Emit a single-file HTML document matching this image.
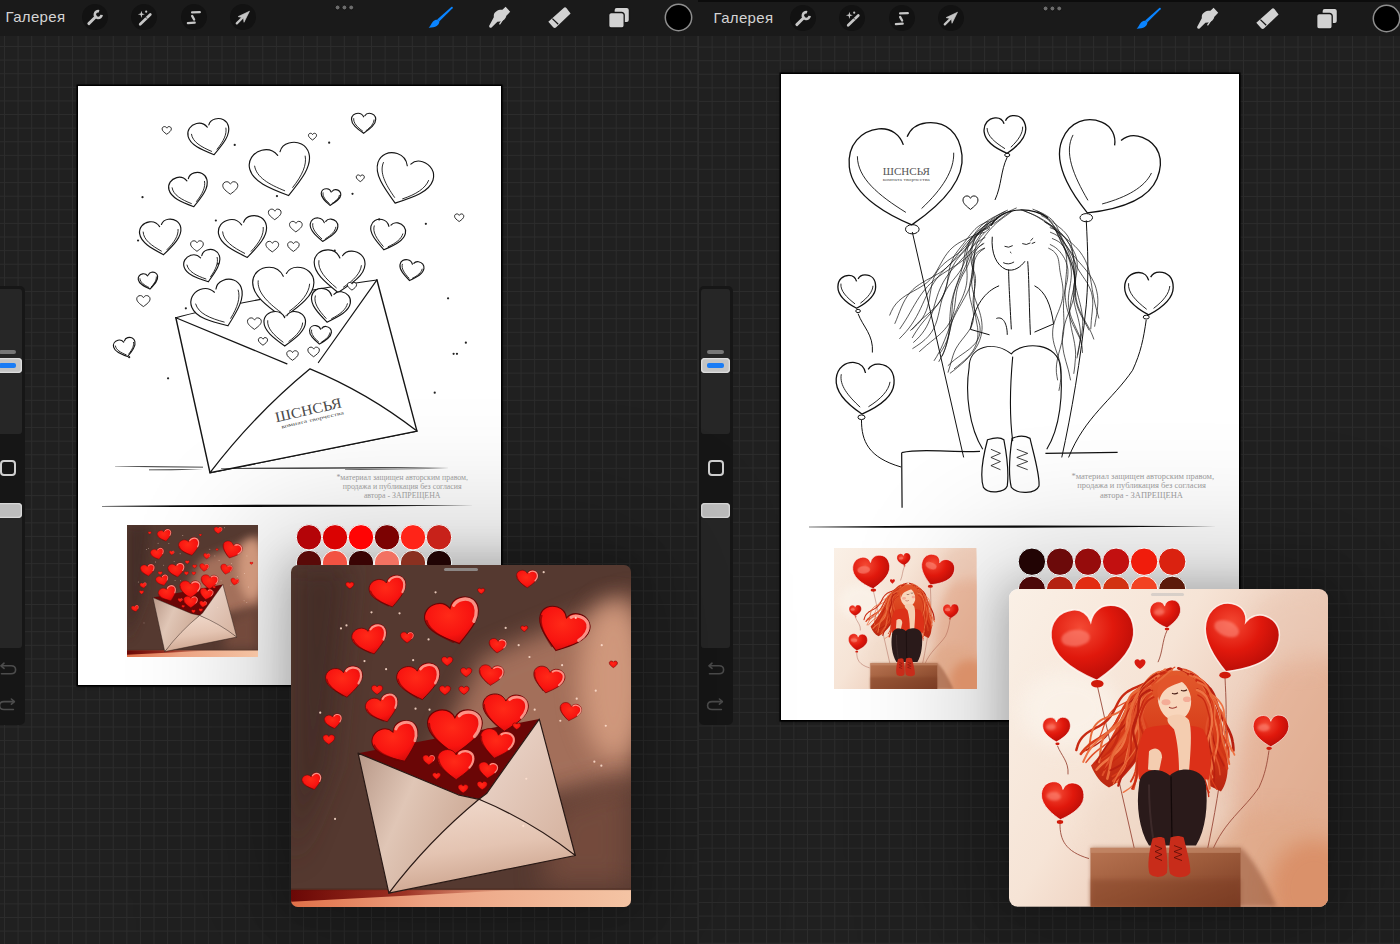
<!DOCTYPE html><html><head><meta charset="utf-8"><style>
*{margin:0;padding:0;box-sizing:border-box}
html,body{width:1400px;height:944px;overflow:hidden;background:#202020;font-family:"Liberation Sans",sans-serif}
.half{position:absolute;top:0;height:944px;overflow:hidden}
.grid{position:absolute;left:0;top:36px;right:0;bottom:0;background-color:#202020;
 background-image:linear-gradient(to right,#2c2c2c 0,#2c2c2c 1px,transparent 1px),linear-gradient(to bottom,#2c2c2c 0,#2c2c2c 1px,transparent 1px);
 background-size:13.62px 13.68px}
.tb{position:absolute;left:0;top:0;right:0;height:36px;background:#1a1a1a}
.gal{position:absolute;top:8px;font-size:15px;color:#d4d4d4;letter-spacing:0.35px}
.tcirc{position:absolute;top:4px;width:26px;height:26px;border-radius:50%;background:#121212}
.sb{position:absolute;top:286px;width:34px;height:439px;background:#161616;border-radius:5px}
.trk{position:absolute;width:29px;background:#262626;border-radius:3px}
.dash{position:absolute;width:17px;height:4px;border-radius:2px;background:#777}
.thumb{position:absolute;width:29px;height:15px;border-radius:4px;background:#c4c4c4;box-shadow:inset 0 0 0 1.3px #dedede}
.thumb .bl{position:absolute;left:6px;top:5px;width:17px;height:4.5px;border-radius:2px;background:#1a7cf5}
.thumb2{position:absolute;width:29px;height:15px;border-radius:4px;background:#bdbdbd;box-shadow:inset 0 0 0 1.3px #d8d8d8}
.sq{position:absolute;width:16px;height:16px;border:2px solid #d0d0d0;border-radius:4px}
.page{position:absolute;background:#fff;box-shadow:0 0 0 1.5px #000,0 0 2.5px 1.5px rgba(0,0,0,0.5)}
.art{position:absolute;border-radius:8px;overflow:hidden}
.copy{position:absolute;font-family:"Liberation Serif",serif;font-size:8.6px;line-height:9.4px;color:#999;text-align:center;white-space:nowrap}
</style></head><body>
<div class="half" style="left:0px;width:698px">
<div class="grid" style="background-position:4px 10px;background-size:13.6px 13.61px"></div>
<div class="tb"></div>
</div>
<div class="half" style="left:698px;width:702px">
<div class="grid" style="background-position:0px 10.600000000000001px;background-size:13.627px 13.59px"></div>
<div class="tb"></div>
</div>
<div class="half" style="left:0px;width:698px">
<div style="position:absolute;left:0;top:0px;width:698px;height:40px"><div class="gal" style="left:5.5px">Галерея</div>
<div class="tcirc" style="left:81.8px"></div>
<div class="tcirc" style="left:130.8px"></div>
<div class="tcirc" style="left:180.8px"></div>
<div class="tcirc" style="left:229.8px"></div><svg width="698" height="40" style="position:absolute;left:0;top:0"><g transform="translate(95,17)" fill="none" stroke="#c6c6c6" stroke-linecap="round"><path d="M-6.2,6.6 L0.8,-0.2" stroke-width="2.9"/><path d="M6.6,-2.2 A3.4,3.4 0 1 1 4.1,-5.7" stroke-width="2.6" stroke-linecap="butt"/></g>
<g transform="translate(144,17)"><path d="M-3.8,7.2 L6.3,-2.45" stroke="#c6c6c6" stroke-width="2.7" stroke-linecap="round"/><path d="M1.6,0.1 L3.0,1.5" stroke="#121212" stroke-width="0.9"/><path d="M-2.6,-6.3 L-1.8,-3.5 L0.9,-2.7 L-1.8,-1.9 L-2.6,0.9 L-3.4,-1.9 L-6.1,-2.7 L-3.4,-3.5 Z" fill="#c6c6c6"/><circle cx="2.2" cy="-5.3" r="1.1" fill="#c6c6c6"/></g>
<g transform="translate(194,17)" stroke="#c6c6c6" stroke-width="2.3" stroke-linecap="round" fill="none"><path d="M-1.9,-4.6 L5.8,-4.8"/><path d="M-1.9,-1.1 L0.1,2.5"/><path d="M-6.1,6.1 L0.7,5.6"/></g>
<g transform="translate(243,17)"><path d="M-6.2,6.4 L-0.8,1.0" stroke="#c6c6c6" stroke-width="2.3" stroke-linecap="round"/><path d="M6.5,-5.8 L-4.9,-0.4 L-1.2,0.6 L0.4,0.9 L1.0,5.3 Z" fill="#c6c6c6" stroke="#c6c6c6" stroke-width="0.6" stroke-linejoin="round"/></g>
<circle cx="337.6" cy="7.5" r="2.4" fill="#6c6c6c" stroke="#0c0c0c" stroke-width="0.8"/>
<circle cx="344.4" cy="7.5" r="2.4" fill="#6c6c6c" stroke="#0c0c0c" stroke-width="0.8"/>
<circle cx="351.2" cy="7.5" r="2.4" fill="#6c6c6c" stroke="#0c0c0c" stroke-width="0.8"/>
<g transform="translate(440,17)" fill="#0a84ff"><path d="M11.6,-10.2 C12.6,-10.6 13.2,-9.6 12.6,-8.8 L-0.8,4.4 L-2.8,2.6 Z"/><path d="M-2.6,2.8 L-0.6,4.6 C-0.8,8 -4,10.8 -11.4,10.8 C-9.6,9.2 -9,6.6 -7,4.4 C-5.6,3 -4,2.6 -2.6,2.8 Z"/></g>
<g transform="translate(499,17)" fill="#d2d2d2"><path d="M-9.8,8.8 C-10.2,10.4 -8.6,11.4 -7.4,10.4 L-1.6,4.8 L1.2,4.6 C4.6,4.2 6.8,1.6 7.4,-1.2 L11.2,-5.2 L6.6,-10.2 L3.4,-7.2 C-0.6,-7.6 -4.4,-5.6 -5.2,-2.0 L-5.2,0.2 Z"/><path d="M3.8,2.4 L0.8,6.8" stroke="#d2d2d2" stroke-width="1.4" stroke-linecap="round"/></g>
<g transform="translate(559,17)"><path d="M4.7,-9.1 C5.6,-9.9 6.6,-9.8 7.4,-9 L11.6,-3.5 L-2.8,10.3 C-3.8,11.2 -5,11.1 -5.8,10.2 L-10.7,4.7 Z" fill="#d2d2d2"/><path d="M-6.6,1.6 L-0.8,7.2" stroke="#151515" stroke-width="1.3"/></g>
<g transform="translate(619,17)"><rect x="-5" y="-9.7" width="15.4" height="15.4" rx="2.6" fill="#d2d2d2" stroke="#151515" stroke-width="1.3"/><rect x="-10.3" y="-4.5" width="15.5" height="15.5" rx="2.6" fill="#d2d2d2" stroke="#151515" stroke-width="1.3"/></g>
<circle cx="678.5" cy="17.5" r="13.2" fill="#000" stroke="#8e8e8e" stroke-width="1.5"/></svg></div>
<div class="sb" style="left:-9px"></div>
<div class="trk" style="left:-7px;top:289px;height:145px"></div>
<div class="dash" style="left:-1px;top:350px"></div>
<div class="thumb" style="left:-7px;top:358px"><div class="bl"></div></div>
<div class="sq" style="left:-0.5px;top:460px"></div>
<div class="trk" style="left:-7px;top:503px;height:145px"></div>
<div class="thumb2" style="left:-7px;top:503px"></div>
<svg width="40" height="60" style="position:absolute;left:-9px;top:655px" fill="none" stroke="#4c4c4c" stroke-width="1.6" stroke-linecap="round" stroke-linejoin="round">
<path d="M10.5,18.8 L20,18.8 C23,18.8 24.6,17 24.6,14.8 C24.6,12.6 23,10.8 20,10.8 L10.5,10.8"/><path d="M13,8.2 L10,10.8 L13,13.4"/>
<path d="M22.4,54.5 L13,54.5 C10,54.5 8.6,52.7 8.6,50.5 C8.6,48.3 10,46.6 13,46.6 L23,46.6"/><path d="M20.4,44 L23.4,46.6 L20.4,49.2"/>
</svg>

</div>
<div class="half" style="left:698px;width:702px">
<div style="position:absolute;left:0;top:0;width:100%;height:1.6px;background:#0c0c0c"></div>
<div style="position:absolute;left:0;top:1px;width:702px;height:40px"><div class="gal" style="left:15.5px">Галерея</div>
<div class="tcirc" style="left:91.8px"></div>
<div class="tcirc" style="left:140.8px"></div>
<div class="tcirc" style="left:190.8px"></div>
<div class="tcirc" style="left:239.8px"></div><svg width="702" height="40" style="position:absolute;left:0;top:0"><g transform="translate(105,17)" fill="none" stroke="#c6c6c6" stroke-linecap="round"><path d="M-6.2,6.6 L0.8,-0.2" stroke-width="2.9"/><path d="M6.6,-2.2 A3.4,3.4 0 1 1 4.1,-5.7" stroke-width="2.6" stroke-linecap="butt"/></g>
<g transform="translate(154,17)"><path d="M-3.8,7.2 L6.3,-2.45" stroke="#c6c6c6" stroke-width="2.7" stroke-linecap="round"/><path d="M1.6,0.1 L3.0,1.5" stroke="#121212" stroke-width="0.9"/><path d="M-2.6,-6.3 L-1.8,-3.5 L0.9,-2.7 L-1.8,-1.9 L-2.6,0.9 L-3.4,-1.9 L-6.1,-2.7 L-3.4,-3.5 Z" fill="#c6c6c6"/><circle cx="2.2" cy="-5.3" r="1.1" fill="#c6c6c6"/></g>
<g transform="translate(204,17)" stroke="#c6c6c6" stroke-width="2.3" stroke-linecap="round" fill="none"><path d="M-1.9,-4.6 L5.8,-4.8"/><path d="M-1.9,-1.1 L0.1,2.5"/><path d="M-6.1,6.1 L0.7,5.6"/></g>
<g transform="translate(253,17)"><path d="M-6.2,6.4 L-0.8,1.0" stroke="#c6c6c6" stroke-width="2.3" stroke-linecap="round"/><path d="M6.5,-5.8 L-4.9,-0.4 L-1.2,0.6 L0.4,0.9 L1.0,5.3 Z" fill="#c6c6c6" stroke="#c6c6c6" stroke-width="0.6" stroke-linejoin="round"/></g>
<circle cx="347.6" cy="7.5" r="2.4" fill="#6c6c6c" stroke="#0c0c0c" stroke-width="0.8"/>
<circle cx="354.4" cy="7.5" r="2.4" fill="#6c6c6c" stroke="#0c0c0c" stroke-width="0.8"/>
<circle cx="361.2" cy="7.5" r="2.4" fill="#6c6c6c" stroke="#0c0c0c" stroke-width="0.8"/>
<g transform="translate(450,17)" fill="#0a84ff"><path d="M11.6,-10.2 C12.6,-10.6 13.2,-9.6 12.6,-8.8 L-0.8,4.4 L-2.8,2.6 Z"/><path d="M-2.6,2.8 L-0.6,4.6 C-0.8,8 -4,10.8 -11.4,10.8 C-9.6,9.2 -9,6.6 -7,4.4 C-5.6,3 -4,2.6 -2.6,2.8 Z"/></g>
<g transform="translate(509,17)" fill="#d2d2d2"><path d="M-9.8,8.8 C-10.2,10.4 -8.6,11.4 -7.4,10.4 L-1.6,4.8 L1.2,4.6 C4.6,4.2 6.8,1.6 7.4,-1.2 L11.2,-5.2 L6.6,-10.2 L3.4,-7.2 C-0.6,-7.6 -4.4,-5.6 -5.2,-2.0 L-5.2,0.2 Z"/><path d="M3.8,2.4 L0.8,6.8" stroke="#d2d2d2" stroke-width="1.4" stroke-linecap="round"/></g>
<g transform="translate(569,17)"><path d="M4.7,-9.1 C5.6,-9.9 6.6,-9.8 7.4,-9 L11.6,-3.5 L-2.8,10.3 C-3.8,11.2 -5,11.1 -5.8,10.2 L-10.7,4.7 Z" fill="#d2d2d2"/><path d="M-6.6,1.6 L-0.8,7.2" stroke="#151515" stroke-width="1.3"/></g>
<g transform="translate(629,17)"><rect x="-5" y="-9.7" width="15.4" height="15.4" rx="2.6" fill="#d2d2d2" stroke="#151515" stroke-width="1.3"/><rect x="-10.3" y="-4.5" width="15.5" height="15.5" rx="2.6" fill="#d2d2d2" stroke="#151515" stroke-width="1.3"/></g>
<circle cx="688.5" cy="17.5" r="13.2" fill="#000" stroke="#8e8e8e" stroke-width="1.5"/></svg></div>
<div class="sb" style="left:1px"></div>
<div class="trk" style="left:3px;top:289px;height:145px"></div>
<div class="dash" style="left:9px;top:350px"></div>
<div class="thumb" style="left:3px;top:358px"><div class="bl"></div></div>
<div class="sq" style="left:9.5px;top:460px"></div>
<div class="trk" style="left:3px;top:503px;height:145px"></div>
<div class="thumb2" style="left:3px;top:503px"></div>
<svg width="40" height="60" style="position:absolute;left:1px;top:655px" fill="none" stroke="#4c4c4c" stroke-width="1.6" stroke-linecap="round" stroke-linejoin="round">
<path d="M10.5,18.8 L20,18.8 C23,18.8 24.6,17 24.6,14.8 C24.6,12.6 23,10.8 20,10.8 L10.5,10.8"/><path d="M13,8.2 L10,10.8 L13,13.4"/>
<path d="M22.4,54.5 L13,54.5 C10,54.5 8.6,52.7 8.6,50.5 C8.6,48.3 10,46.6 13,46.6 L23,46.6"/><path d="M20.4,44 L23.4,46.6 L20.4,49.2"/>
</svg>

</div>
<div class="page" style="left:78px;top:85.5px;width:423px;height:599px"></div>
<div class="page" style="left:781px;top:74px;width:458px;height:646px"></div>
<div style="position:absolute;left:290.6px;top:564.8px;width:340.4px;height:342.2px;border-radius:7px;box-shadow:0 0 40px 4px rgba(0,0,0,0.22),0 0 130px 40px rgba(0,0,0,0.2)"></div>
<div style="position:absolute;left:1009px;top:589.3px;width:319px;height:317.7px;border-radius:9px;box-shadow:0 0 40px 4px rgba(0,0,0,0.22),0 0 130px 40px rgba(0,0,0,0.2)"></div>
<svg width="1400" height="944" style="position:absolute;left:0;top:0">
<g transform="translate(101.4,109.4) scale(1.1111)"><path d="M67.00,187.50 C100,178 200,160 248.00,153.50" fill="none" stroke="#151515" vector-effect="non-scaling-stroke" stroke-linecap="round" stroke-width="1.1"/>
<path d="M101.45,40.74 C89.44,35.92 79.95,31.90 78.04,24.21 C76.70,18.87 80.15,14.10 85.59,12.74 C89.59,11.75 93.08,13.36 95.28,16.01 C95.99,12.64 98.31,9.57 102.31,8.58 C107.75,7.22 113.03,9.81 114.36,15.16 C116.28,22.84 109.79,30.85 101.45,40.74Z" fill="#fff" stroke="none"/>
<path d="M95.28,16.01 C93.08,13.36 89.59,11.75 85.59,12.74 C80.15,14.10 76.70,18.87 78.04,24.21 C79.95,31.90 89.44,35.92 101.45,40.74 C109.79,30.85 116.28,22.84 114.36,15.16 C113.03,9.81 107.75,7.22 102.31,8.58 C99.04,9.39 97.27,11.61 96.68,13.88" fill="none" stroke="#151515" vector-effect="non-scaling-stroke" stroke-linecap="round" stroke-width="1.15"/>
<path d="M81.06,22.40 C82.00,29.26 89.67,33.74 99.16,37.76 M112.07,16.79 C113.04,22.23 110.01,28.66 104.08,35.82" fill="none" stroke="#151515" vector-effect="non-scaling-stroke" stroke-linecap="round" stroke-width="0.9"/>
<path d="M168.41,77.54 C150.61,70.76 136.54,65.08 133.52,53.82 C131.42,45.98 136.36,38.88 144.35,36.74 C150.20,35.17 155.38,37.46 158.69,41.30 C159.64,36.32 162.98,31.75 168.84,30.18 C176.83,28.04 184.66,31.71 186.76,39.55 C189.78,50.82 180.43,62.77 168.41,77.54Z" fill="#fff" stroke="none"/>
<path d="M158.69,41.30 C155.38,37.46 150.20,35.17 144.35,36.74 C136.36,38.88 131.42,45.98 133.52,53.82 C136.54,65.08 150.61,70.76 168.41,77.54 C180.43,62.77 189.78,50.82 186.76,39.55 C184.66,31.71 176.83,28.04 168.84,30.18 C164.05,31.46 161.51,34.77 160.70,38.13" fill="none" stroke="#151515" vector-effect="non-scaling-stroke" stroke-linecap="round" stroke-width="1.15"/>
<path d="M137.91,51.06 C139.47,61.14 150.89,67.54 164.96,73.21 M183.43,42.02 C184.99,50.00 180.70,59.55 172.16,70.24" fill="none" stroke="#151515" vector-effect="non-scaling-stroke" stroke-linecap="round" stroke-width="0.9"/>
<path d="M236.00,21.54 C229.88,17.12 225.08,13.50 225.08,8.88 C225.08,5.67 227.70,3.46 230.98,3.46 C233.38,3.46 235.13,4.86 236.00,6.67 C236.87,4.86 238.62,3.46 241.02,3.46 C244.30,3.46 246.92,5.67 246.92,8.88 C246.92,13.50 242.12,17.12 236.00,21.54Z" fill="#fff" stroke="none"/>
<path d="M236.00,6.67 C235.13,4.86 233.38,3.46 230.98,3.46 C227.70,3.46 225.08,5.67 225.08,8.88 C225.08,13.50 229.88,17.12 236.00,21.54 C242.12,17.12 246.92,13.50 246.92,8.88 C246.92,5.67 244.30,3.46 241.02,3.46 C239.06,3.46 237.75,4.46 237.09,5.67" fill="none" stroke="#151515" vector-effect="non-scaling-stroke" stroke-linecap="round" stroke-width="1.15"/>
<path d="M227.05,8.28 C226.61,12.30 230.32,15.92 235.13,19.53 M245.39,9.49 C245.17,12.70 242.55,15.92 238.18,19.13" fill="none" stroke="#151515" vector-effect="non-scaling-stroke" stroke-linecap="round" stroke-width="0.9"/>
<path d="M58.80,22.34 C56.47,20.66 54.64,19.28 54.64,17.52 C54.64,16.30 55.64,15.46 56.89,15.46 C57.80,15.46 58.47,15.99 58.80,16.68 C59.13,15.99 59.80,15.46 60.71,15.46 C61.96,15.46 62.96,16.30 62.96,17.52 C62.96,19.28 61.13,20.66 58.80,22.34Z" fill="#fff" stroke="none"/>
<path d="M58.80,16.68 C58.47,15.99 57.80,15.46 56.89,15.46 C55.64,15.46 54.64,16.30 54.64,17.52 C54.64,19.28 56.47,20.66 58.80,22.34 C61.13,20.66 62.96,19.28 62.96,17.52 C62.96,16.30 61.96,15.46 60.71,15.46 C59.96,15.46 59.47,15.84 59.22,16.30" fill="none" stroke="#151515" vector-effect="non-scaling-stroke" stroke-linecap="round" stroke-width="0.9"/>
<path d="M83.19,87.54 C71.77,83.19 62.74,79.55 60.81,72.32 C59.46,67.29 62.63,62.74 67.76,61.36 C71.51,60.36 74.83,61.83 76.96,64.29 C77.57,61.09 79.71,58.16 83.47,57.15 C88.59,55.78 93.61,58.14 94.96,63.17 C96.90,70.40 90.90,78.06 83.19,87.54Z" fill="#fff" stroke="none"/>
<path d="M76.96,64.29 C74.83,61.83 71.51,60.36 67.76,61.36 C62.63,62.74 59.46,67.29 60.81,72.32 C62.74,79.55 71.77,83.19 83.19,87.54 C90.90,78.06 96.90,70.40 94.96,63.17 C93.61,58.14 88.59,55.78 83.47,57.15 C80.39,57.98 78.76,60.10 78.25,62.26" fill="none" stroke="#151515" vector-effect="non-scaling-stroke" stroke-linecap="round" stroke-width="1.15"/>
<path d="M63.63,70.55 C64.63,77.02 71.95,81.12 80.98,84.76 M92.82,64.75 C93.83,69.87 91.08,76.00 85.59,82.85" fill="none" stroke="#151515" vector-effect="non-scaling-stroke" stroke-linecap="round" stroke-width="0.9"/>
<path d="M264.35,84.37 C253.75,69.87 245.53,58.14 248.93,47.68 C251.30,40.40 258.86,37.32 266.28,39.73 C271.72,41.50 274.64,45.97 275.29,50.71 C278.60,47.25 283.59,45.35 289.03,47.12 C296.45,49.53 300.75,56.46 298.39,63.74 C294.99,74.21 281.45,78.86 264.35,84.37Z" fill="#fff" stroke="none"/>
<path d="M275.29,50.71 C274.64,45.97 271.72,41.50 266.28,39.73 C258.86,37.32 251.30,40.40 248.93,47.68 C245.53,58.14 253.75,69.87 264.35,84.37 C281.45,78.86 294.99,74.21 298.39,63.74 C300.75,56.46 296.45,49.53 289.03,47.12 C284.58,45.68 280.87,46.99 278.50,49.23" fill="none" stroke="#151515" vector-effect="non-scaling-stroke" stroke-linecap="round" stroke-width="1.15"/>
<path d="M253.83,47.76 C249.88,56.54 255.63,67.46 263.85,79.18 M294.48,63.98 C291.62,71.10 283.32,76.46 271.07,80.52" fill="none" stroke="#151515" vector-effect="non-scaling-stroke" stroke-linecap="round" stroke-width="0.9"/>
<path d="M116.00,76.30 C112.21,73.56 109.24,71.32 109.24,68.46 C109.24,66.47 110.86,65.10 112.89,65.10 C114.38,65.10 115.46,65.97 116.00,67.09 C116.54,65.97 117.62,65.10 119.11,65.10 C121.14,65.10 122.76,66.47 122.76,68.46 C122.76,71.32 119.79,73.56 116.00,76.30Z" fill="#fff" stroke="none"/>
<path d="M116.00,67.09 C115.46,65.97 114.38,65.10 112.89,65.10 C110.86,65.10 109.24,66.47 109.24,68.46 C109.24,71.32 112.21,73.56 116.00,76.30 C119.79,73.56 122.76,71.32 122.76,68.46 C122.76,66.47 121.14,65.10 119.11,65.10 C117.89,65.10 117.08,65.72 116.68,66.47" fill="none" stroke="#151515" vector-effect="non-scaling-stroke" stroke-linecap="round" stroke-width="0.9"/>
<path d="M205.76,86.39 C201.14,82.40 197.52,79.14 197.85,75.41 C198.08,72.82 200.35,71.22 202.99,71.45 C204.92,71.62 206.23,72.88 206.81,74.40 C207.64,73.00 209.15,71.99 211.09,72.16 C213.73,72.39 215.69,74.36 215.46,76.95 C215.14,80.68 211.01,83.26 205.76,86.39Z" fill="#fff" stroke="none"/>
<path d="M206.81,74.40 C206.23,72.88 204.92,71.62 202.99,71.45 C200.35,71.22 198.08,72.82 197.85,75.41 C197.52,79.14 201.14,82.40 205.76,86.39 C211.01,83.26 215.14,80.68 215.46,76.95 C215.69,74.36 213.73,72.39 211.09,72.16 C209.50,72.02 208.38,72.74 207.76,73.67" fill="none" stroke="#151515" vector-effect="non-scaling-stroke" stroke-linecap="round" stroke-width="1.15"/>
<path d="M199.48,75.07 C198.84,78.28 201.58,81.45 205.20,84.71 M214.19,77.33 C213.78,79.91 211.44,82.32 207.69,84.60" fill="none" stroke="#151515" vector-effect="non-scaling-stroke" stroke-linecap="round" stroke-width="0.9"/>
<path d="M55.96,130.75 C44.52,124.70 35.50,119.71 34.40,111.87 C33.63,106.41 37.55,102.03 43.12,101.25 C47.19,100.68 50.50,102.65 52.41,105.51 C53.46,102.23 56.09,99.43 60.17,98.85 C65.73,98.07 70.71,101.20 71.47,106.65 C72.58,114.50 65.28,121.79 55.96,130.75Z" fill="#fff" stroke="none"/>
<path d="M52.41,105.51 C50.50,102.65 47.19,100.68 43.12,101.25 C37.55,102.03 33.63,106.41 34.40,111.87 C35.50,119.71 44.52,124.70 55.96,130.75 C65.28,121.79 72.58,114.50 71.47,106.65 C70.71,101.20 65.73,98.07 60.17,98.85 C56.83,99.32 54.85,101.34 54.02,103.54" fill="none" stroke="#151515" vector-effect="non-scaling-stroke" stroke-linecap="round" stroke-width="1.15"/>
<path d="M37.59,110.37 C37.81,117.30 44.98,122.55 53.99,127.55 M69.02,108.04 C69.42,113.55 65.74,119.64 59.09,126.14" fill="none" stroke="#151515" vector-effect="non-scaling-stroke" stroke-linecap="round" stroke-width="0.9"/>
<path d="M131.34,133.21 C117.76,126.63 107.04,121.17 105.44,112.07 C104.32,105.74 108.71,100.47 115.17,99.34 C119.90,98.50 123.83,100.66 126.18,103.92 C127.27,100.06 130.22,96.68 134.95,95.85 C141.41,94.71 147.34,98.15 148.45,104.48 C150.06,113.59 141.85,122.38 131.34,133.21Z" fill="#fff" stroke="none"/>
<path d="M126.18,103.92 C123.83,100.66 119.90,98.50 115.17,99.34 C108.71,100.47 104.32,105.74 105.44,112.07 C107.04,121.17 117.76,126.63 131.34,133.21 C141.85,122.38 150.06,113.59 148.45,104.48 C147.34,98.15 141.41,94.71 134.95,95.85 C131.08,96.53 128.85,98.96 127.98,101.57" fill="none" stroke="#151515" vector-effect="non-scaling-stroke" stroke-linecap="round" stroke-width="1.15"/>
<path d="M109.10,110.20 C109.63,118.27 118.20,124.10 128.92,129.55 M145.65,106.20 C146.34,112.61 142.29,119.85 134.80,127.70" fill="none" stroke="#151515" vector-effect="non-scaling-stroke" stroke-linecap="round" stroke-width="0.9"/>
<path d="M199.10,118.79 C192.58,113.15 187.47,108.56 187.93,103.29 C188.25,99.63 191.45,97.38 195.18,97.71 C197.92,97.94 199.77,99.72 200.58,101.87 C201.76,99.89 203.88,98.47 206.62,98.71 C210.35,99.03 213.11,101.81 212.79,105.47 C212.33,110.73 206.50,114.37 199.10,118.79Z" fill="#fff" stroke="none"/>
<path d="M200.58,101.87 C199.77,99.72 197.92,97.94 195.18,97.71 C191.45,97.38 188.25,99.63 187.93,103.29 C187.47,108.56 192.58,113.15 199.10,118.79 C206.50,114.37 212.33,110.73 212.79,105.47 C213.11,101.81 210.35,99.03 206.62,98.71 C204.38,98.51 202.79,99.52 201.92,100.83" fill="none" stroke="#151515" vector-effect="non-scaling-stroke" stroke-linecap="round" stroke-width="1.15"/>
<path d="M190.23,102.80 C189.33,107.34 193.19,111.82 198.30,116.42 M210.99,106.00 C210.42,109.64 207.12,113.04 201.83,116.27" fill="none" stroke="#151515" vector-effect="non-scaling-stroke" stroke-linecap="round" stroke-width="0.9"/>
<path d="M254.27,126.35 C246.92,118.22 241.18,111.63 242.58,105.06 C243.55,100.50 247.94,98.15 252.59,99.14 C256.01,99.86 258.06,102.39 258.76,105.22 C260.55,102.92 263.45,101.45 266.87,102.17 C271.52,103.16 274.58,107.09 273.61,111.66 C272.21,118.22 264.29,121.91 254.27,126.35Z" fill="#fff" stroke="none"/>
<path d="M258.76,105.22 C258.06,102.39 256.01,99.86 252.59,99.14 C247.94,98.15 243.55,100.50 242.58,105.06 C241.18,111.63 246.92,118.22 254.27,126.35 C264.29,121.91 272.21,118.22 273.61,111.66 C274.58,107.09 271.52,103.16 266.87,102.17 C264.07,101.58 261.91,102.61 260.61,104.12" fill="none" stroke="#151515" vector-effect="non-scaling-stroke" stroke-linecap="round" stroke-width="1.15"/>
<path d="M245.55,104.80 C243.72,110.38 247.90,116.64 253.64,123.23 M271.25,112.05 C269.97,116.56 265.28,120.33 258.10,123.58" fill="none" stroke="#151515" vector-effect="non-scaling-stroke" stroke-linecap="round" stroke-width="0.9"/>
<path d="M96.26,155.10 C85.31,151.58 76.65,148.60 74.47,141.90 C72.96,137.24 75.71,132.80 80.46,131.26 C83.94,130.13 87.14,131.35 89.26,133.56 C89.67,130.52 91.54,127.66 95.02,126.53 C99.77,124.99 104.61,126.96 106.12,131.62 C108.30,138.31 103.04,145.82 96.26,155.10Z" fill="#fff" stroke="none"/>
<path d="M89.26,133.56 C87.14,131.35 83.94,130.13 80.46,131.26 C75.71,132.80 72.96,137.24 74.47,141.90 C76.65,148.60 85.31,151.58 96.26,155.10 C103.04,145.82 108.30,138.31 106.12,131.62 C104.61,126.96 99.77,124.99 95.02,126.53 C92.17,127.46 90.75,129.53 90.37,131.59" fill="none" stroke="#151515" vector-effect="non-scaling-stroke" stroke-linecap="round" stroke-width="1.15"/>
<path d="M77.04,140.10 C78.30,146.13 85.38,149.62 94.05,152.60 M104.19,133.21 C105.39,137.97 103.10,143.87 98.29,150.58" fill="none" stroke="#151515" vector-effect="non-scaling-stroke" stroke-linecap="round" stroke-width="0.9"/>
<path d="M156.00,99.24 C152.80,96.92 150.28,95.03 150.28,92.61 C150.28,90.92 151.65,89.76 153.37,89.76 C154.63,89.76 155.54,90.50 156.00,91.45 C156.46,90.50 157.37,89.76 158.63,89.76 C160.35,89.76 161.72,90.92 161.72,92.61 C161.72,95.03 159.20,96.92 156.00,99.24Z" fill="#fff" stroke="none"/>
<path d="M156.00,91.45 C155.54,90.50 154.63,89.76 153.37,89.76 C151.65,89.76 150.28,90.92 150.28,92.61 C150.28,95.03 152.80,96.92 156.00,99.24 C159.20,96.92 161.72,95.03 161.72,92.61 C161.72,90.92 160.35,89.76 158.63,89.76 C157.60,89.76 156.92,90.29 156.57,90.92" fill="none" stroke="#151515" vector-effect="non-scaling-stroke" stroke-linecap="round" stroke-width="0.9"/>
<path d="M175.00,110.24 C171.80,107.92 169.28,106.03 169.28,103.61 C169.28,101.92 170.65,100.76 172.37,100.76 C173.63,100.76 174.54,101.50 175.00,102.45 C175.46,101.50 176.37,100.76 177.63,100.76 C179.35,100.76 180.72,101.92 180.72,103.61 C180.72,106.03 178.20,107.92 175.00,110.24Z" fill="#fff" stroke="none"/>
<path d="M175.00,102.45 C174.54,101.50 173.63,100.76 172.37,100.76 C170.65,100.76 169.28,101.92 169.28,103.61 C169.28,106.03 171.80,107.92 175.00,110.24 C178.20,107.92 180.72,106.03 180.72,103.61 C180.72,101.92 179.35,100.76 177.63,100.76 C176.60,100.76 175.92,101.29 175.57,101.92" fill="none" stroke="#151515" vector-effect="non-scaling-stroke" stroke-linecap="round" stroke-width="0.9"/>
<path d="M86.00,127.74 C82.80,125.42 80.28,123.53 80.28,121.11 C80.28,119.42 81.65,118.26 83.37,118.26 C84.63,118.26 85.54,119.00 86.00,119.95 C86.46,119.00 87.37,118.26 88.63,118.26 C90.35,118.26 91.72,119.42 91.72,121.11 C91.72,123.53 89.20,125.42 86.00,127.74Z" fill="#fff" stroke="none"/>
<path d="M86.00,119.95 C85.54,119.00 84.63,118.26 83.37,118.26 C81.65,118.26 80.28,119.42 80.28,121.11 C80.28,123.53 82.80,125.42 86.00,127.74 C89.20,125.42 91.72,123.53 91.72,121.11 C91.72,119.42 90.35,118.26 88.63,118.26 C87.60,118.26 86.92,118.79 86.57,119.42" fill="none" stroke="#151515" vector-effect="non-scaling-stroke" stroke-linecap="round" stroke-width="0.9"/>
<path d="M153.80,128.24 C150.60,125.92 148.08,124.03 148.08,121.61 C148.08,119.92 149.45,118.76 151.17,118.76 C152.43,118.76 153.34,119.50 153.80,120.45 C154.26,119.50 155.17,118.76 156.43,118.76 C158.15,118.76 159.52,119.92 159.52,121.61 C159.52,124.03 157.00,125.92 153.80,128.24Z" fill="#fff" stroke="none"/>
<path d="M153.80,120.45 C153.34,119.50 152.43,118.76 151.17,118.76 C149.45,118.76 148.08,119.92 148.08,121.61 C148.08,124.03 150.60,125.92 153.80,128.24 C157.00,125.92 159.52,124.03 159.52,121.61 C159.52,119.92 158.15,118.76 156.43,118.76 C155.40,118.76 154.72,119.29 154.37,119.92" fill="none" stroke="#151515" vector-effect="non-scaling-stroke" stroke-linecap="round" stroke-width="0.9"/>
<path d="M172.80,127.81 C169.89,125.70 167.60,123.98 167.60,121.78 C167.60,120.25 168.85,119.19 170.41,119.19 C171.55,119.19 172.38,119.86 172.80,120.73 C173.22,119.86 174.05,119.19 175.19,119.19 C176.75,119.19 178.00,120.25 178.00,121.78 C178.00,123.98 175.71,125.70 172.80,127.81Z" fill="#fff" stroke="none"/>
<path d="M172.80,120.73 C172.38,119.86 171.55,119.19 170.41,119.19 C168.85,119.19 167.60,120.25 167.60,121.78 C167.60,123.98 169.89,125.70 172.80,127.81 C175.71,125.70 178.00,123.98 178.00,121.78 C178.00,120.25 176.75,119.19 175.19,119.19 C174.26,119.19 173.63,119.67 173.32,120.25" fill="none" stroke="#151515" vector-effect="non-scaling-stroke" stroke-linecap="round" stroke-width="0.9"/>
<path d="M213.01,164.82 C200.70,154.90 191.04,146.80 191.55,137.14 C191.90,130.41 197.63,126.07 204.48,126.43 C209.51,126.69 213.01,129.83 214.64,133.71 C216.67,130.02 220.48,127.27 225.50,127.53 C232.36,127.89 237.60,132.80 237.25,139.53 C236.74,149.20 226.29,156.24 213.01,164.82Z" fill="#fff" stroke="none"/>
<path d="M214.64,133.71 C213.01,129.83 209.51,126.69 204.48,126.43 C197.63,126.07 191.90,130.41 191.55,137.14 C191.04,146.80 200.70,154.90 213.01,164.82 C226.29,156.24 236.74,149.20 237.25,139.53 C237.60,132.80 232.36,127.89 225.50,127.53 C221.39,127.32 218.54,129.27 217.03,131.73" fill="none" stroke="#151515" vector-effect="non-scaling-stroke" stroke-linecap="round" stroke-width="1.15"/>
<path d="M195.73,136.09 C194.37,144.45 201.74,152.42 211.40,160.52 M233.98,140.62 C233.17,147.33 227.33,153.77 217.84,160.01" fill="none" stroke="#151515" vector-effect="non-scaling-stroke" stroke-linecap="round" stroke-width="0.9"/>
<path d="M277.33,154.00 C272.08,148.59 267.97,144.19 268.77,139.64 C269.33,136.48 272.30,134.75 275.52,135.32 C277.89,135.74 279.37,137.43 279.91,139.36 C281.09,137.73 283.05,136.65 285.42,137.07 C288.64,137.64 290.84,140.27 290.28,143.43 C289.48,147.99 284.12,150.71 277.33,154.00Z" fill="#fff" stroke="none"/>
<path d="M279.91,139.36 C279.37,137.43 277.89,135.74 275.52,135.32 C272.30,134.75 269.33,136.48 268.77,139.64 C267.97,144.19 272.08,148.59 277.33,154.00 C284.12,150.71 289.48,147.99 290.28,143.43 C290.84,140.27 288.64,137.64 285.42,137.07 C283.48,136.73 282.02,137.49 281.16,138.56" fill="none" stroke="#151515" vector-effect="non-scaling-stroke" stroke-linecap="round" stroke-width="1.15"/>
<path d="M270.81,139.39 C269.69,143.27 272.71,147.48 276.82,151.87 M288.67,143.76 C287.90,146.89 284.76,149.60 279.90,152.01" fill="none" stroke="#151515" vector-effect="non-scaling-stroke" stroke-linecap="round" stroke-width="0.9"/>
<path d="M43.67,161.71 C38.17,159.04 33.84,156.84 33.19,153.15 C32.73,150.59 34.51,148.46 37.12,148.00 C39.04,147.66 40.63,148.54 41.58,149.85 C42.02,148.29 43.22,146.92 45.13,146.59 C47.75,146.13 50.15,147.52 50.60,150.08 C51.25,153.77 47.92,157.32 43.67,161.71Z" fill="#fff" stroke="none"/>
<path d="M41.58,149.85 C40.63,148.54 39.04,147.66 37.12,148.00 C34.51,148.46 32.73,150.59 33.19,153.15 C33.84,156.84 38.17,159.04 43.67,161.71 C47.92,157.32 51.25,153.77 50.60,150.08 C50.15,147.52 47.75,146.13 45.13,146.59 C43.57,146.86 42.66,147.85 42.31,148.90" fill="none" stroke="#151515" vector-effect="non-scaling-stroke" stroke-linecap="round" stroke-width="1.15"/>
<path d="M34.67,152.39 C34.88,155.66 38.35,158.02 42.69,160.23 M49.46,150.78 C49.74,153.37 48.10,156.30 45.07,159.48" fill="none" stroke="#151515" vector-effect="non-scaling-stroke" stroke-linecap="round" stroke-width="0.9"/>
<path d="M37.80,177.45 C34.45,175.03 31.82,173.05 31.82,170.52 C31.82,168.76 33.26,167.55 35.05,167.55 C36.36,167.55 37.32,168.32 37.80,169.31 C38.28,168.32 39.24,167.55 40.55,167.55 C42.34,167.55 43.78,168.76 43.78,170.52 C43.78,173.05 41.15,175.03 37.80,177.45Z" fill="#fff" stroke="none"/>
<path d="M37.80,169.31 C37.32,168.32 36.36,167.55 35.05,167.55 C33.26,167.55 31.82,168.76 31.82,170.52 C31.82,173.05 34.45,175.03 37.80,177.45 C41.15,175.03 43.78,173.05 43.78,170.52 C43.78,168.76 42.34,167.55 40.55,167.55 C39.47,167.55 38.76,168.10 38.40,168.76" fill="none" stroke="#151515" vector-effect="non-scaling-stroke" stroke-linecap="round" stroke-width="0.9"/>
<path d="M113.92,194.76 C97.87,190.80 85.15,187.40 81.35,178.02 C78.72,171.49 82.23,164.85 88.88,162.16 C93.76,160.19 98.46,161.61 101.72,164.57 C102.01,160.18 104.40,155.89 109.28,153.91 C115.94,151.23 123.07,153.56 125.71,160.09 C129.50,169.48 122.71,180.77 113.92,194.76Z" fill="#fff" stroke="none"/>
<path d="M101.72,164.57 C98.46,161.61 93.76,160.19 88.88,162.16 C82.23,164.85 78.72,171.49 81.35,178.02 C85.15,187.40 97.87,190.80 113.92,194.76 C122.71,180.77 129.50,169.48 125.71,160.09 C123.07,153.56 115.94,151.23 109.28,153.91 C105.29,155.53 103.45,158.64 103.11,161.63" fill="none" stroke="#151515" vector-effect="non-scaling-stroke" stroke-linecap="round" stroke-width="1.15"/>
<path d="M84.85,175.18 C87.26,183.70 97.77,188.00 110.50,191.40 M123.10,162.57 C125.29,169.28 122.61,177.96 116.38,188.07" fill="none" stroke="#151515" vector-effect="non-scaling-stroke" stroke-linecap="round" stroke-width="0.9"/>
<path d="M163.70,187.72 C148.27,176.56 136.14,167.44 136.14,155.77 C136.14,147.66 142.75,142.08 151.02,142.08 C157.09,142.08 161.50,145.63 163.70,150.19 C165.90,145.63 170.31,142.08 176.38,142.08 C184.65,142.08 191.26,147.66 191.26,155.77 C191.26,167.44 179.13,176.56 163.70,187.72Z" fill="#fff" stroke="none"/>
<path d="M163.70,150.19 C161.50,145.63 157.09,142.08 151.02,142.08 C142.75,142.08 136.14,147.66 136.14,155.77 C136.14,167.44 148.27,176.56 163.70,187.72 C179.13,176.56 191.26,167.44 191.26,155.77 C191.26,147.66 184.65,142.08 176.38,142.08 C171.42,142.08 168.11,144.62 166.46,147.66" fill="none" stroke="#151515" vector-effect="non-scaling-stroke" stroke-linecap="round" stroke-width="1.15"/>
<path d="M141.10,154.25 C140.00,164.39 149.37,173.52 161.50,182.65 M187.40,157.29 C186.85,165.41 180.24,173.52 169.21,181.63" fill="none" stroke="#151515" vector-effect="non-scaling-stroke" stroke-linecap="round" stroke-width="0.9"/>
<path d="M203.06,191.52 C194.55,182.75 187.91,175.63 189.21,168.26 C190.11,163.14 194.91,160.35 200.13,161.27 C203.96,161.95 206.35,164.68 207.24,167.81 C209.14,165.17 212.32,163.42 216.15,164.10 C221.37,165.02 224.93,169.28 224.03,174.40 C222.73,181.77 214.05,186.19 203.06,191.52Z" fill="#fff" stroke="none"/>
<path d="M207.24,167.81 C206.35,164.68 203.96,161.95 200.13,161.27 C194.91,160.35 190.11,163.14 189.21,168.26 C187.91,175.63 194.55,182.75 203.06,191.52 C214.05,186.19 222.73,181.77 224.03,174.40 C224.93,169.28 221.37,165.02 216.15,164.10 C213.02,163.54 210.65,164.78 209.26,166.51" fill="none" stroke="#151515" vector-effect="non-scaling-stroke" stroke-linecap="round" stroke-width="1.15"/>
<path d="M192.51,167.85 C190.68,174.14 195.59,180.95 202.23,188.07 M221.42,174.93 C220.17,180.00 215.09,184.39 207.22,188.29" fill="none" stroke="#151515" vector-effect="non-scaling-stroke" stroke-linecap="round" stroke-width="0.9"/>
<path d="M165.00,212.90 C154.52,205.32 146.28,199.12 146.28,191.20 C146.28,185.69 150.77,181.90 156.39,181.90 C160.51,181.90 163.50,184.31 165.00,187.41 C166.50,184.31 169.49,181.90 173.61,181.90 C179.23,181.90 183.72,185.69 183.72,191.20 C183.72,199.12 175.48,205.32 165.00,212.90Z" fill="#fff" stroke="none"/>
<path d="M165.00,187.41 C163.50,184.31 160.51,181.90 156.39,181.90 C150.77,181.90 146.28,185.69 146.28,191.20 C146.28,199.12 154.52,205.32 165.00,212.90 C175.48,205.32 183.72,199.12 183.72,191.20 C183.72,185.69 179.23,181.90 173.61,181.90 C170.24,181.90 168.00,183.62 166.87,185.69" fill="none" stroke="#151515" vector-effect="non-scaling-stroke" stroke-linecap="round" stroke-width="1.15"/>
<path d="M149.65,190.17 C148.90,197.06 155.27,203.26 163.50,209.46 M181.10,192.23 C180.72,197.74 176.23,203.26 168.74,208.77" fill="none" stroke="#151515" vector-effect="non-scaling-stroke" stroke-linecap="round" stroke-width="0.9"/>
<path d="M196.19,211.25 C191.02,206.78 186.98,203.14 187.34,198.98 C187.60,196.08 190.13,194.30 193.09,194.55 C195.25,194.74 196.71,196.15 197.36,197.85 C198.29,196.29 199.98,195.16 202.14,195.35 C205.09,195.60 207.28,197.80 207.03,200.70 C206.66,204.87 202.05,207.75 196.19,211.25Z" fill="#fff" stroke="none"/>
<path d="M197.36,197.85 C196.71,196.15 195.25,194.74 193.09,194.55 C190.13,194.30 187.60,196.08 187.34,198.98 C186.98,203.14 191.02,206.78 196.19,211.25 C202.05,207.75 206.66,204.87 207.03,200.70 C207.28,197.80 205.09,195.60 202.14,195.35 C200.37,195.19 199.11,195.99 198.42,197.03" fill="none" stroke="#151515" vector-effect="non-scaling-stroke" stroke-linecap="round" stroke-width="1.15"/>
<path d="M189.16,198.59 C188.45,202.18 191.51,205.73 195.56,209.37 M205.60,201.12 C205.15,204.00 202.54,206.70 198.35,209.25" fill="none" stroke="#151515" vector-effect="non-scaling-stroke" stroke-linecap="round" stroke-width="0.9"/>
<path d="M137.70,197.97 C134.21,195.44 131.46,193.37 131.46,190.73 C131.46,188.90 132.96,187.63 134.83,187.63 C136.20,187.63 137.20,188.44 137.70,189.47 C138.20,188.44 139.20,187.63 140.57,187.63 C142.44,187.63 143.94,188.90 143.94,190.73 C143.94,193.37 141.19,195.44 137.70,197.97Z" fill="#fff" stroke="none"/>
<path d="M137.70,189.47 C137.20,188.44 136.20,187.63 134.83,187.63 C132.96,187.63 131.46,188.90 131.46,190.73 C131.46,193.37 134.21,195.44 137.70,197.97 C141.19,195.44 143.94,193.37 143.94,190.73 C143.94,188.90 142.44,187.63 140.57,187.63 C139.45,187.63 138.70,188.21 138.32,188.90" fill="none" stroke="#151515" vector-effect="non-scaling-stroke" stroke-linecap="round" stroke-width="0.9"/>
<path d="M23.52,222.40 C17.14,219.97 12.09,217.94 11.01,213.90 C10.26,211.09 12.03,208.54 14.89,207.77 C16.99,207.21 18.85,208.03 20.04,209.41 C20.38,207.62 21.57,205.98 23.67,205.42 C26.54,204.65 29.34,205.97 30.10,208.78 C31.18,212.82 27.83,217.11 23.52,222.40Z" fill="#fff" stroke="none"/>
<path d="M20.04,209.41 C18.85,208.03 16.99,207.21 14.89,207.77 C12.03,208.54 10.26,211.09 11.01,213.90 C12.09,217.94 17.14,219.97 23.52,222.40 C27.83,217.11 31.18,212.82 30.10,208.78 C29.34,205.97 26.54,204.65 23.67,205.42 C21.95,205.88 21.04,207.07 20.75,208.27" fill="none" stroke="#151515" vector-effect="non-scaling-stroke" stroke-linecap="round" stroke-width="1.15"/>
<path d="M12.59,212.91 C13.15,216.52 17.24,218.81 22.28,220.85 M28.90,209.67 C29.46,212.53 27.93,215.95 24.86,219.78" fill="none" stroke="#151515" vector-effect="non-scaling-stroke" stroke-linecap="round" stroke-width="0.9"/>
<path d="M322.00,100.94 C319.67,99.26 317.84,97.88 317.84,96.12 C317.84,94.90 318.84,94.06 320.09,94.06 C321.00,94.06 321.67,94.59 322.00,95.28 C322.33,94.59 323.00,94.06 323.91,94.06 C325.16,94.06 326.16,94.90 326.16,96.12 C326.16,97.88 324.33,99.26 322.00,100.94Z" fill="#fff" stroke="none"/>
<path d="M322.00,95.28 C321.67,94.59 321.00,94.06 320.09,94.06 C318.84,94.06 317.84,94.90 317.84,96.12 C317.84,97.88 319.67,99.26 322.00,100.94 C324.33,99.26 326.16,97.88 326.16,96.12 C326.16,94.90 325.16,94.06 323.91,94.06 C323.16,94.06 322.67,94.44 322.42,94.90" fill="none" stroke="#151515" vector-effect="non-scaling-stroke" stroke-linecap="round" stroke-width="0.9"/>
<path d="M225.50,162.64 C223.17,160.96 221.34,159.58 221.34,157.82 C221.34,156.60 222.34,155.76 223.59,155.76 C224.50,155.76 225.17,156.29 225.50,156.98 C225.83,156.29 226.50,155.76 227.41,155.76 C228.66,155.76 229.66,156.60 229.66,157.82 C229.66,159.58 227.83,160.96 225.50,162.64Z" fill="#fff" stroke="none"/>
<path d="M225.50,156.98 C225.17,156.29 224.50,155.76 223.59,155.76 C222.34,155.76 221.34,156.60 221.34,157.82 C221.34,159.58 223.17,160.96 225.50,162.64 C227.83,160.96 229.66,159.58 229.66,157.82 C229.66,156.60 228.66,155.76 227.41,155.76 C226.66,155.76 226.17,156.14 225.92,156.60" fill="none" stroke="#151515" vector-effect="non-scaling-stroke" stroke-linecap="round" stroke-width="0.9"/>
<path d="M172.00,225.81 C169.09,223.70 166.80,221.98 166.80,219.78 C166.80,218.25 168.05,217.19 169.61,217.19 C170.75,217.19 171.58,217.86 172.00,218.73 C172.42,217.86 173.25,217.19 174.39,217.19 C175.95,217.19 177.20,218.25 177.20,219.78 C177.20,221.98 174.91,223.70 172.00,225.81Z" fill="#fff" stroke="none"/>
<path d="M172.00,218.73 C171.58,217.86 170.75,217.19 169.61,217.19 C168.05,217.19 166.80,218.25 166.80,219.78 C166.80,221.98 169.09,223.70 172.00,225.81 C174.91,223.70 177.20,221.98 177.20,219.78 C177.20,218.25 175.95,217.19 174.39,217.19 C173.46,217.19 172.83,217.67 172.52,218.25" fill="none" stroke="#151515" vector-effect="non-scaling-stroke" stroke-linecap="round" stroke-width="0.9"/>
<path d="M191.00,222.61 C188.09,220.50 185.80,218.78 185.80,216.58 C185.80,215.05 187.05,213.99 188.61,213.99 C189.75,213.99 190.58,214.66 191.00,215.53 C191.42,214.66 192.25,213.99 193.39,213.99 C194.95,213.99 196.20,215.05 196.20,216.58 C196.20,218.78 193.91,220.50 191.00,222.61Z" fill="#fff" stroke="none"/>
<path d="M191.00,215.53 C190.58,214.66 189.75,213.99 188.61,213.99 C187.05,213.99 185.80,215.05 185.80,216.58 C185.80,218.78 188.09,220.50 191.00,222.61 C193.91,220.50 196.20,218.78 196.20,216.58 C196.20,215.05 194.95,213.99 193.39,213.99 C192.46,213.99 191.83,214.47 191.52,215.05" fill="none" stroke="#151515" vector-effect="non-scaling-stroke" stroke-linecap="round" stroke-width="0.9"/>
<path d="M145.40,212.24 C143.07,210.56 141.24,209.18 141.24,207.42 C141.24,206.20 142.24,205.36 143.49,205.36 C144.40,205.36 145.07,205.89 145.40,206.58 C145.73,205.89 146.40,205.36 147.31,205.36 C148.56,205.36 149.56,206.20 149.56,207.42 C149.56,209.18 147.73,210.56 145.40,212.24Z" fill="#fff" stroke="none"/>
<path d="M145.40,206.58 C145.07,205.89 144.40,205.36 143.49,205.36 C142.24,205.36 141.24,206.20 141.24,207.42 C141.24,209.18 143.07,210.56 145.40,212.24 C147.73,210.56 149.56,209.18 149.56,207.42 C149.56,206.20 148.56,205.36 147.31,205.36 C146.56,205.36 146.07,205.74 145.82,206.20" fill="none" stroke="#151515" vector-effect="non-scaling-stroke" stroke-linecap="round" stroke-width="0.9"/>
<path d="M233.00,65.01 C230.96,63.54 229.36,62.33 229.36,60.79 C229.36,59.72 230.23,58.99 231.33,58.99 C232.13,58.99 232.71,59.45 233.00,60.06 C233.29,59.45 233.87,58.99 234.67,58.99 C235.77,58.99 236.64,59.72 236.64,60.79 C236.64,62.33 235.04,63.54 233.00,65.01Z" fill="#fff" stroke="none"/>
<path d="M233.00,60.06 C232.71,59.45 232.13,58.99 231.33,58.99 C230.23,58.99 229.36,59.72 229.36,60.79 C229.36,62.33 230.96,63.54 233.00,65.01 C235.04,63.54 236.64,62.33 236.64,60.79 C236.64,59.72 235.77,58.99 234.67,58.99 C234.02,58.99 233.58,59.32 233.36,59.72" fill="none" stroke="#151515" vector-effect="non-scaling-stroke" stroke-linecap="round" stroke-width="0.9"/>
<path d="M190.00,27.51 C187.96,26.04 186.36,24.83 186.36,23.29 C186.36,22.22 187.23,21.49 188.33,21.49 C189.13,21.49 189.71,21.95 190.00,22.56 C190.29,21.95 190.87,21.49 191.67,21.49 C192.77,21.49 193.64,22.22 193.64,23.29 C193.64,24.83 192.04,26.04 190.00,27.51Z" fill="#fff" stroke="none"/>
<path d="M190.00,22.56 C189.71,21.95 189.13,21.49 188.33,21.49 C187.23,21.49 186.36,22.22 186.36,23.29 C186.36,24.83 187.96,26.04 190.00,27.51 C192.04,26.04 193.64,24.83 193.64,23.29 C193.64,22.22 192.77,21.49 191.67,21.49 C191.02,21.49 190.58,21.82 190.36,22.22" fill="none" stroke="#151515" vector-effect="non-scaling-stroke" stroke-linecap="round" stroke-width="0.9"/>
<circle cx="120" cy="32" r="1.0" fill="#222"/>
<circle cx="37" cy="79" r="1.0" fill="#222"/>
<circle cx="103" cy="100" r="1.0" fill="#222"/>
<circle cx="250" cy="99" r="1.0" fill="#222"/>
<circle cx="158" cy="78" r="1.0" fill="#222"/>
<circle cx="226" cy="76" r="1.0" fill="#222"/>
<circle cx="210" cy="127" r="1.0" fill="#222"/>
<circle cx="292" cy="103" r="1.0" fill="#222"/>
<circle cx="317" cy="220" r="1.0" fill="#222"/>
<circle cx="328" cy="210" r="1.0" fill="#222"/>
<circle cx="312" cy="170" r="1.0" fill="#222"/>
<circle cx="25" cy="223" r="1.0" fill="#222"/>
<circle cx="300" cy="255" r="1.0" fill="#222"/>
<circle cx="60" cy="242" r="1.0" fill="#222"/>
<circle cx="105" cy="139" r="1.0" fill="#222"/>
<circle cx="76" cy="179" r="1.0" fill="#222"/>
<circle cx="33" cy="118" r="1.0" fill="#222"/>
<circle cx="250" cy="173" r="1.0" fill="#222"/>
<circle cx="205" cy="30" r="1.0" fill="#222"/>
<circle cx="320" cy="220" r="1.0" fill="#222"/>
<path d="M67.00,187.50 L167.00,229.00 L187.75,233.50 L97.75,327.00 Z" fill="#fff" stroke="none"/>
<path d="M248.00,153.50 L195.30,227.80 L187.75,233.50 L284.00,289.50 Z" fill="#fff" stroke="none"/>
<path d="M67.00,187.50 L167.00,229.00 M248.00,153.50 L195.30,227.80" fill="none" stroke="#151515" vector-effect="non-scaling-stroke" stroke-linecap="round" stroke-width="1.2"/>
<path d="M67.00,187.50 L97.75,327.00 L284.00,289.50 L248.00,153.50" fill="none" stroke="#151515" vector-effect="non-scaling-stroke" stroke-linecap="round" stroke-width="1.4" stroke-linejoin="round"/>
<path d="M97.75,327.00 C124.1,292.4 154.1,261.2 187.75,233.50 C222.3,247.8 254.4,266.5 284.00,289.50 Z" fill="#fff" stroke="#151515" vector-effect="non-scaling-stroke" stroke-width="1.3" stroke-linejoin="round"/></g>
<g transform="translate(276.2,422.3) rotate(-12.8)" fill="#4a4a4a" font-family="Liberation Serif, serif"><text x="0" y="0" font-size="14.5" textLength="68" lengthAdjust="spacingAndGlyphs" style="font-weight:normal">ШСНСЬЯ</text><text x="4" y="7.2" font-size="5.2" textLength="64" lengthAdjust="spacingAndGlyphs">комната творчества</text></g>
<path d="M115,466.4 Q160,466 203,466.8 L203,467.6 Q160,467.4 115,466.8Z" fill="#111"/>
<path d="M149,469.6 Q180,468.8 203,469.4 Q180,470.4 149,470.2Z" fill="#222"/>
<path d="M221,468.2 Q330,466.8 450,467.4 Q330,468.8 221,468.8Z" fill="#111"/>
<path d="M345,469 Q400,468.2 449,468.6 Q400,469.8 345,469.6Z" fill="#333"/>
<path d="M102,506 Q288,503.8 474,505.6 Q288,507.8 102,506.4Z" fill="#0a0a0a"/>
<circle cx="309" cy="537.3" r="12.7" fill="#b40408" stroke="#f4fcfc" stroke-width="1"/>
<circle cx="335" cy="537.3" r="12.7" fill="#da0202" stroke="#f4fcfc" stroke-width="1"/>
<circle cx="361" cy="537.3" r="12.7" fill="#ff0404" stroke="#f4fcfc" stroke-width="1"/>
<circle cx="387" cy="537.3" r="12.7" fill="#7c0202" stroke="#f4fcfc" stroke-width="1"/>
<circle cx="413" cy="537.3" r="12.7" fill="#ff2418" stroke="#f4fcfc" stroke-width="1"/>
<circle cx="439" cy="537.3" r="12.7" fill="#c8221a" stroke="#f4fcfc" stroke-width="1"/>
<circle cx="309" cy="563" r="12.7" fill="#5a0a08" stroke="#f4fcfc" stroke-width="1"/>
<circle cx="335" cy="563" r="12.7" fill="#f25242" stroke="#f4fcfc" stroke-width="1"/>
<circle cx="361" cy="563" r="12.7" fill="#3a0404" stroke="#f4fcfc" stroke-width="1"/>
<circle cx="387" cy="563" r="12.7" fill="#f27262" stroke="#f4fcfc" stroke-width="1"/>
<circle cx="413" cy="563" r="12.7" fill="#8a3020" stroke="#f4fcfc" stroke-width="1"/>
<circle cx="439" cy="563" r="12.7" fill="#200404" stroke="#f4fcfc" stroke-width="1"/>
</svg>
<div class="copy" style="left:332.2px;top:473px;width:140px;font-size:7.85px;line-height:9.2px">*материал защищен авторским правом,<br>продажа и публикация без согласия<br>автора - ЗАПРЕЩЕНА</div>
<svg viewBox="0 0 340 341" preserveAspectRatio="none" style="position:absolute;left:127px;top:524.6px;width:131.4px;height:132px"><defs>
<linearGradient id="lbg" x1="0" y1="0" x2="1" y2="0.3"><stop offset="0" stop-color="#3a2822"/><stop offset="0.55" stop-color="#5a3b31"/><stop offset="1" stop-color="#7a5446"/></linearGradient>
<linearGradient id="beam" x1="1" y1="0" x2="0" y2="1"><stop offset="0" stop-color="#d8a890" stop-opacity="0.0"/><stop offset="0.3" stop-color="#d8a48a" stop-opacity="0.85"/><stop offset="0.7" stop-color="#b88070" stop-opacity="0.35"/><stop offset="1" stop-color="#b88070" stop-opacity="0"/></linearGradient>
<filter id="bl12" x="-50%" y="-50%" width="200%" height="200%"><feGaussianBlur stdDeviation="14"/></filter>
<filter id="bl18" x="-50%" y="-50%" width="200%" height="200%"><feGaussianBlur stdDeviation="18"/></filter>
<filter id="bl14" x="-50%" y="-50%" width="200%" height="200%"><feGaussianBlur stdDeviation="12"/></filter>
<filter id="bl2" x="-50%" y="-50%" width="200%" height="200%"><feGaussianBlur stdDeviation="1.5"/></filter>
<linearGradient id="floor" x1="0" y1="0" x2="1" y2="0"><stop offset="0" stop-color="#e07048"/><stop offset="0.4" stop-color="#eca282"/><stop offset="1" stop-color="#f4c4a4"/></linearGradient>
<linearGradient id="fshadow" x1="0" y1="0" x2="1" y2="0"><stop offset="0" stop-color="#6a0806"/><stop offset="0.5" stop-color="#8a1a10" stop-opacity="0.8"/><stop offset="1" stop-color="#c05a40" stop-opacity="0"/></linearGradient>
<radialGradient id="hg" cx="0.45" cy="0.4" r="0.7"><stop offset="0" stop-color="#ff2a18"/><stop offset="0.6" stop-color="#f81410"/><stop offset="1" stop-color="#c80808"/></radialGradient>
<linearGradient id="flapF" x1="0" y1="0" x2="0.3" y2="1"><stop offset="0" stop-color="#f2dccf"/><stop offset="0.6" stop-color="#e4c4b2"/><stop offset="1" stop-color="#cca48e"/></linearGradient>
<linearGradient id="flapL" x1="0" y1="0" x2="1" y2="0.5"><stop offset="0" stop-color="#b89888"/><stop offset="0.45" stop-color="#e0c6b6"/><stop offset="1" stop-color="#cca894"/></linearGradient>
<linearGradient id="flapR" x1="0" y1="0" x2="1" y2="1"><stop offset="0" stop-color="#eedad0"/><stop offset="1" stop-color="#d4b09c"/></linearGradient>
</defs>
<rect width="340" height="341" fill="#553930"/>
<polygon points="0,0 60,0 40,200 0,300" fill="#3a2620" opacity="0.6" filter="url(#bl12)"/>
<polygon points="345,28 345,212 210,238 130,218 190,92" fill="#ac7660" opacity="0.9" filter="url(#bl14)"/>
<ellipse cx="322" cy="115" rx="34" ry="80" fill="#d49c80" opacity="0.9" filter="url(#bl14)"/>
<polygon points="340,212 340,321 250,321 260,240" fill="#7c5040" opacity="0.8" filter="url(#bl12)"/>
<rect x="0" y="323.5" width="340" height="18" fill="url(#floor)"/>
<polygon points="0,323.5 230,323.5 0,335.5" fill="url(#fshadow)"/>
<rect x="0" y="322.5" width="340" height="1.5" fill="#3a1a12" opacity="0.6"/>
<polygon points="67.00,187.50 248.00,153.50 195.30,227.80 187.75,233.50 167.00,229.00" fill="#6a0606"/>
<path d="M101.33,41.77 C89.48,37.16 80.11,33.30 78.26,25.86 C76.97,20.68 80.40,16.04 85.79,14.69 C89.75,13.71 93.19,15.25 95.36,17.81 C96.07,14.54 98.38,11.55 102.34,10.57 C107.74,9.22 112.94,11.71 114.24,16.89 C116.09,24.33 109.63,32.14 101.33,41.77Z" fill="url(#hg)" stroke="#6a0404" stroke-width="0.80"/>
<path d="M97.91,15.80 C99.71,12.25 106.38,9.90 110.67,13.30 C113.71,16.33 114.01,22.10 111.38,26.88" fill="none" stroke="#ffc8b8" stroke-width="2.25" stroke-linecap="round" opacity="0.7"/>
<path d="M97.25,40.73 C88.60,36.69 81.03,32.39 79.42,25.91" fill="none" stroke="#6a0000" stroke-width="1.20" stroke-linecap="round" opacity="0.6"/>
<path d="M168.22,78.36 C150.66,71.87 136.77,66.44 133.85,55.52 C131.81,47.93 136.74,41.01 144.65,38.89 C150.45,37.34 155.56,39.53 158.81,43.24 C159.78,38.40 163.11,33.95 168.91,32.39 C176.82,30.28 184.54,33.80 186.58,41.39 C189.50,52.31 180.19,63.96 168.22,78.36Z" fill="url(#hg)" stroke="#6a0404" stroke-width="1.18"/>
<path d="M162.52,40.21 C165.07,34.95 174.83,31.32 181.23,36.21 C185.79,40.59 186.37,49.08 182.63,56.18" fill="none" stroke="#ffc8b8" stroke-width="3.31" stroke-linecap="round" opacity="0.7"/>
<path d="M162.19,76.92 C149.35,71.20 138.10,65.06 135.56,55.57" fill="none" stroke="#6a0000" stroke-width="1.77" stroke-linecap="round" opacity="0.6"/>
<path d="M236.00,22.76 C229.94,18.48 225.19,14.97 225.19,10.50 C225.19,7.38 227.78,5.24 231.03,5.24 C233.40,5.24 235.13,6.60 236.00,8.35 C236.87,6.60 238.60,5.24 240.97,5.24 C244.22,5.24 246.81,7.38 246.81,10.50 C246.81,14.97 242.06,18.48 236.00,22.76Z" fill="url(#hg)" stroke="#6a0404" stroke-width="0.50"/>
<path d="M237.73,7.58 C239.24,5.82 243.35,5.43 245.30,7.97 C246.60,10.11 245.95,13.42 243.79,15.75" fill="none" stroke="#ffc8b8" stroke-width="1.31" stroke-linecap="round" opacity="0.7"/>
<path d="M233.84,21.59 C229.51,18.09 225.83,14.58 225.83,10.69" fill="none" stroke="#6a0000" stroke-width="0.70" stroke-linecap="round" opacity="0.6"/>
<path d="M58.80,23.74 C56.49,22.11 54.68,20.77 54.68,19.07 C54.68,17.88 55.67,17.06 56.90,17.06 C57.81,17.06 58.47,17.58 58.80,18.25 C59.13,17.58 59.79,17.06 60.70,17.06 C61.93,17.06 62.92,17.88 62.92,19.07 C62.92,20.77 61.11,22.11 58.80,23.74Z" fill="url(#hg)" stroke="#6a0404" stroke-width="0.50"/>
<path d="M83.07,88.60 C71.80,84.44 62.89,80.95 61.02,73.95 C59.71,69.08 62.87,64.64 67.95,63.28 C71.67,62.29 74.95,63.69 77.03,66.07 C77.65,62.97 79.79,60.11 83.51,59.12 C88.58,57.76 93.54,60.02 94.85,64.89 C96.72,71.89 90.75,79.36 83.07,88.60Z" fill="url(#hg)" stroke="#6a0404" stroke-width="0.76"/>
<path d="M79.41,64.13 C81.05,60.75 87.31,58.42 91.42,61.56 C94.34,64.37 94.72,69.82 92.31,74.38" fill="none" stroke="#ffc8b8" stroke-width="2.12" stroke-linecap="round" opacity="0.7"/>
<path d="M79.20,87.68 C70.97,84.01 63.75,80.07 62.11,73.98" fill="none" stroke="#6a0000" stroke-width="1.13" stroke-linecap="round" opacity="0.6"/>
<path d="M264.55,85.24 C253.99,71.08 245.79,59.65 249.09,49.51 C251.38,42.46 258.83,39.52 266.18,41.90 C271.57,43.65 274.48,48.01 275.15,52.62 C278.40,49.29 283.32,47.47 288.71,49.22 C296.06,51.61 300.36,58.37 298.07,65.42 C294.77,75.56 281.42,79.99 264.55,85.24Z" fill="url(#hg)" stroke="#6a0404" stroke-width="1.11"/>
<path d="M279.64,52.13 C284.36,49.27 293.96,51.42 296.50,58.58 C297.86,64.38 293.96,71.40 287.34,75.10" fill="none" stroke="#ffc8b8" stroke-width="3.12" stroke-linecap="round" opacity="0.7"/>
<path d="M260.52,81.00 C253.30,69.88 247.55,59.24 250.41,50.43" fill="none" stroke="#6a0000" stroke-width="1.67" stroke-linecap="round" opacity="0.6"/>
<path d="M116.00,77.62 C112.25,74.97 109.30,72.80 109.30,70.03 C109.30,68.10 110.91,66.78 112.92,66.78 C114.39,66.78 115.46,67.62 116.00,68.71 C116.54,67.62 117.61,66.78 119.08,66.78 C121.09,66.78 122.70,68.10 122.70,70.03 C122.70,72.80 119.75,74.97 116.00,77.62Z" fill="url(#hg)" stroke="#6a0404" stroke-width="0.50"/>
<path d="M117.07,68.22 C118.01,67.14 120.55,66.90 121.76,68.46 C122.56,69.79 122.16,71.84 120.82,73.28" fill="none" stroke="#ffc8b8" stroke-width="0.81" stroke-linecap="round" opacity="0.7"/>
<path d="M114.66,76.90 C111.98,74.73 109.71,72.56 109.71,70.15" fill="none" stroke="#6a0000" stroke-width="0.43" stroke-linecap="round" opacity="0.6"/>
<path d="M205.78,87.66 C201.20,83.78 197.61,80.62 197.93,77.01 C198.15,74.50 200.39,72.96 203.01,73.18 C204.92,73.35 206.22,74.57 206.80,76.05 C207.62,74.70 209.11,73.72 211.03,73.89 C213.65,74.12 215.59,76.03 215.37,78.54 C215.05,82.15 210.97,84.64 205.78,87.66Z" fill="url(#hg)" stroke="#6a0404" stroke-width="0.50"/>
<path d="M208.25,75.54 C209.59,74.24 212.94,74.21 214.33,76.39 C215.22,78.21 214.47,80.83 212.56,82.56" fill="none" stroke="#ffc8b8" stroke-width="1.06" stroke-linecap="round" opacity="0.7"/>
<path d="M204.12,86.57 C200.88,83.44 198.16,80.35 198.44,77.21" fill="none" stroke="#6a0000" stroke-width="0.57" stroke-linecap="round" opacity="0.6"/>
<path d="M55.89,131.77 C44.59,125.95 35.67,121.13 34.60,113.53 C33.86,108.24 37.76,103.99 43.26,103.22 C47.30,102.65 50.57,104.55 52.45,107.32 C53.50,104.14 56.12,101.41 60.16,100.84 C65.66,100.07 70.58,103.08 71.32,108.37 C72.39,115.97 65.15,123.06 55.89,131.77Z" fill="url(#hg)" stroke="#6a0404" stroke-width="0.80"/>
<path d="M55.20,105.58 C57.36,102.25 64.24,100.60 68.15,104.44 C70.86,107.76 70.55,113.53 67.44,118.02" fill="none" stroke="#ffc8b8" stroke-width="2.25" stroke-linecap="round" opacity="0.7"/>
<path d="M51.94,130.30 C43.76,125.39 36.68,120.32 35.75,113.71" fill="none" stroke="#6a0000" stroke-width="1.20" stroke-linecap="round" opacity="0.6"/>
<path d="M131.24,134.15 C117.83,127.82 107.24,122.57 105.68,113.75 C104.60,107.62 108.97,102.50 115.36,101.37 C120.05,100.55 123.93,102.63 126.24,105.78 C127.34,102.03 130.27,98.74 134.96,97.92 C141.35,96.79 147.20,100.11 148.28,106.24 C149.84,115.06 141.68,123.62 131.24,134.15Z" fill="url(#hg)" stroke="#6a0404" stroke-width="0.93"/>
<path d="M129.38,103.65 C131.75,99.67 139.71,97.48 144.42,101.78 C147.72,105.55 147.59,112.29 144.15,117.65" fill="none" stroke="#ffc8b8" stroke-width="2.62" stroke-linecap="round" opacity="0.7"/>
<path d="M126.58,132.60 C116.84,127.21 108.38,121.58 107.03,113.91" fill="none" stroke="#6a0000" stroke-width="1.40" stroke-linecap="round" opacity="0.6"/>
<path d="M199.13,119.97 C192.66,114.49 187.59,110.03 188.04,104.93 C188.35,101.39 191.51,99.21 195.21,99.53 C197.92,99.77 199.75,101.49 200.56,103.57 C201.72,101.66 203.83,100.29 206.54,100.52 C210.23,100.85 212.97,103.54 212.66,107.09 C212.22,112.19 206.45,115.70 199.13,119.97Z" fill="url(#hg)" stroke="#6a0404" stroke-width="0.53"/>
<path d="M202.61,102.86 C204.51,101.01 209.23,100.98 211.19,104.06 C212.45,106.62 211.39,110.33 208.69,112.77" fill="none" stroke="#ffc8b8" stroke-width="1.50" stroke-linecap="round" opacity="0.7"/>
<path d="M196.78,118.43 C192.21,114.01 188.37,109.65 188.76,105.22" fill="none" stroke="#6a0000" stroke-width="0.80" stroke-linecap="round" opacity="0.6"/>
<path d="M254.35,127.45 C247.04,119.53 241.34,113.12 242.69,106.76 C243.63,102.33 247.97,100.07 252.58,101.05 C255.96,101.77 258.00,104.23 258.70,106.98 C260.46,104.75 263.33,103.34 266.71,104.06 C271.32,105.04 274.36,108.86 273.42,113.29 C272.07,119.65 264.25,123.19 254.35,127.45Z" fill="url(#hg)" stroke="#6a0404" stroke-width="0.68"/>
<path d="M261.40,106.40 C264.08,104.36 270.03,105.05 272.04,109.24 C273.23,112.67 271.31,117.17 267.53,119.84" fill="none" stroke="#ffc8b8" stroke-width="1.91" stroke-linecap="round" opacity="0.7"/>
<path d="M251.63,125.13 C246.55,118.85 242.38,112.76 243.56,107.23" fill="none" stroke="#6a0000" stroke-width="1.02" stroke-linecap="round" opacity="0.6"/>
<path d="M96.13,156.20 C85.33,152.84 76.78,150.00 74.68,143.51 C73.21,139.00 75.96,134.67 80.67,133.15 C84.11,132.03 87.26,133.19 89.34,135.32 C89.77,132.37 91.64,129.58 95.08,128.46 C99.79,126.93 104.56,128.82 106.02,133.33 C108.13,139.82 102.89,147.14 96.13,156.20Z" fill="url(#hg)" stroke="#6a0404" stroke-width="0.71"/>
<path d="M91.48,133.38 C92.85,130.12 98.62,127.62 102.64,130.37 C105.53,132.87 106.14,137.97 104.11,142.37" fill="none" stroke="#ffc8b8" stroke-width="2.00" stroke-linecap="round" opacity="0.7"/>
<path d="M92.44,155.52 C84.52,152.48 77.54,149.13 75.71,143.49" fill="none" stroke="#6a0000" stroke-width="1.07" stroke-linecap="round" opacity="0.6"/>
<path d="M156.00,100.59 C152.83,98.35 150.34,96.51 150.34,94.16 C150.34,92.53 151.69,91.41 153.39,91.41 C154.64,91.41 155.55,92.13 156.00,93.04 C156.45,92.13 157.36,91.41 158.61,91.41 C160.31,91.41 161.66,92.53 161.66,94.16 C161.66,96.51 159.17,98.35 156.00,100.59Z" fill="url(#hg)" stroke="#6a0404" stroke-width="0.50"/>
<path d="M175.00,111.59 C171.83,109.35 169.34,107.51 169.34,105.16 C169.34,103.53 170.69,102.41 172.39,102.41 C173.64,102.41 174.55,103.13 175.00,104.04 C175.45,103.13 176.36,102.41 177.61,102.41 C179.31,102.41 180.66,103.53 180.66,105.16 C180.66,107.51 178.17,109.35 175.00,111.59Z" fill="url(#hg)" stroke="#6a0404" stroke-width="0.50"/>
<path d="M86.00,129.09 C82.83,126.85 80.33,125.01 80.33,122.66 C80.33,121.03 81.69,119.91 83.39,119.91 C84.64,119.91 85.55,120.63 86.00,121.54 C86.45,120.63 87.36,119.91 88.61,119.91 C90.31,119.91 91.67,121.03 91.67,122.66 C91.67,125.01 89.17,126.85 86.00,129.09Z" fill="url(#hg)" stroke="#6a0404" stroke-width="0.50"/>
<path d="M153.80,129.59 C150.63,127.35 148.14,125.51 148.14,123.16 C148.14,121.53 149.49,120.41 151.19,120.41 C152.44,120.41 153.35,121.13 153.80,122.04 C154.25,121.13 155.16,120.41 156.41,120.41 C158.11,120.41 159.47,121.53 159.47,123.16 C159.47,125.51 156.97,127.35 153.80,129.59Z" fill="url(#hg)" stroke="#6a0404" stroke-width="0.50"/>
<path d="M172.80,129.17 C169.92,127.13 167.65,125.46 167.65,123.33 C167.65,121.85 168.89,120.83 170.43,120.83 C171.56,120.83 172.39,121.48 172.80,122.31 C173.21,121.48 174.04,120.83 175.17,120.83 C176.71,120.83 177.95,121.85 177.95,123.33 C177.95,125.46 175.68,127.13 172.80,129.17Z" fill="url(#hg)" stroke="#6a0404" stroke-width="0.50"/>
<path d="M213.04,165.73 C200.84,156.10 191.26,148.25 191.76,138.88 C192.10,132.37 197.76,128.17 204.55,128.53 C209.53,128.79 213.00,131.83 214.62,135.59 C216.62,132.02 220.39,129.36 225.37,129.62 C232.16,129.97 237.35,134.74 237.01,141.25 C236.52,150.62 226.18,157.43 213.04,165.73Z" fill="url(#hg)" stroke="#6a0404" stroke-width="0.98"/>
<path d="M218.33,134.15 C221.69,130.65 230.33,130.28 234.12,135.79 C236.60,140.42 234.88,147.27 230.10,151.92" fill="none" stroke="#ffc8b8" stroke-width="2.75" stroke-linecap="round" opacity="0.7"/>
<path d="M208.64,163.05 C199.97,155.24 192.66,147.51 193.09,139.36" fill="none" stroke="#6a0000" stroke-width="1.47" stroke-linecap="round" opacity="0.6"/>
<path d="M277.38,155.23 C272.16,149.96 268.08,145.68 268.86,141.27 C269.40,138.20 272.33,136.55 275.52,137.11 C277.87,137.52 279.33,139.16 279.88,141.04 C281.04,139.47 282.98,138.42 285.32,138.84 C288.52,139.40 290.70,141.96 290.16,145.03 C289.38,149.44 284.09,152.06 277.38,155.23Z" fill="url(#hg)" stroke="#6a0404" stroke-width="0.50"/>
<path d="M281.72,140.57 C283.51,139.11 287.63,139.44 289.11,142.27 C290.01,144.61 288.80,147.75 286.26,149.68" fill="none" stroke="#ffc8b8" stroke-width="1.31" stroke-linecap="round" opacity="0.7"/>
<path d="M275.45,153.70 C271.80,149.50 268.79,145.41 269.46,141.58" fill="none" stroke="#6a0000" stroke-width="0.70" stroke-linecap="round" opacity="0.6"/>
<path d="M43.63,162.98 C38.20,160.42 33.91,158.30 33.29,154.73 C32.85,152.24 34.62,150.17 37.20,149.72 C39.10,149.38 40.67,150.22 41.61,151.50 C42.05,149.98 43.24,148.65 45.13,148.32 C47.72,147.86 50.09,149.20 50.53,151.69 C51.16,155.26 47.86,158.72 43.63,162.98Z" fill="url(#hg)" stroke="#6a0404" stroke-width="0.50"/>
<path d="M42.88,150.64 C43.84,149.03 47.06,148.14 48.97,149.88 C50.30,151.41 50.25,154.14 48.85,156.30" fill="none" stroke="#ffc8b8" stroke-width="1.06" stroke-linecap="round" opacity="0.7"/>
<path d="M41.74,162.36 C37.80,160.17 34.38,157.89 33.83,154.79" fill="none" stroke="#6a0000" stroke-width="0.57" stroke-linecap="round" opacity="0.6"/>
<path d="M37.80,178.80 C34.48,176.45 31.88,174.53 31.88,172.08 C31.88,170.38 33.30,169.20 35.08,169.20 C36.38,169.20 37.33,169.95 37.80,170.91 C38.27,169.95 39.22,169.20 40.52,169.20 C42.30,169.20 43.72,170.38 43.72,172.08 C43.72,174.53 41.12,176.45 37.80,178.80Z" fill="url(#hg)" stroke="#6a0404" stroke-width="0.50"/>
<path d="M113.69,195.69 C97.87,191.96 85.33,188.75 81.66,179.66 C79.10,173.33 82.62,166.85 89.21,164.19 C94.04,162.24 98.67,163.59 101.87,166.43 C102.19,162.17 104.58,157.98 109.42,156.03 C116.01,153.36 123.03,155.58 125.59,161.91 C129.26,171.00 122.47,182.02 113.69,195.69Z" fill="url(#hg)" stroke="#6a0404" stroke-width="1.02"/>
<path d="M104.74,163.43 C106.38,158.63 114.41,154.47 120.44,158.01 C124.83,161.30 126.23,168.55 123.75,175.07" fill="none" stroke="#ffc8b8" stroke-width="2.88" stroke-linecap="round" opacity="0.7"/>
<path d="M108.34,195.09 C96.68,191.53 86.33,187.43 83.14,179.52" fill="none" stroke="#6a0000" stroke-width="1.53" stroke-linecap="round" opacity="0.6"/>
<path d="M163.70,188.51 C148.41,177.70 136.40,168.86 136.40,157.56 C136.40,149.70 142.96,144.29 151.14,144.29 C157.15,144.29 161.52,147.73 163.70,152.15 C165.88,147.73 170.25,144.29 176.26,144.29 C184.44,144.29 191.00,149.70 191.00,157.56 C191.00,168.86 178.99,177.70 163.70,188.51Z" fill="url(#hg)" stroke="#6a0404" stroke-width="1.18"/>
<path d="M168.07,150.19 C171.89,145.76 182.26,144.78 187.17,151.17 C190.45,156.57 188.81,164.93 183.35,170.82" fill="none" stroke="#ffc8b8" stroke-width="3.31" stroke-linecap="round" opacity="0.7"/>
<path d="M158.24,185.56 C147.32,176.72 138.04,167.87 138.04,158.05" fill="none" stroke="#6a0000" stroke-width="1.77" stroke-linecap="round" opacity="0.6"/>
<path d="M203.14,192.57 C194.68,184.04 188.08,177.11 189.34,169.97 C190.22,165.01 194.96,162.32 200.13,163.23 C203.92,163.90 206.30,166.56 207.19,169.60 C209.06,167.05 212.20,165.36 216.00,166.03 C221.17,166.94 224.70,171.09 223.83,176.05 C222.57,183.19 214.00,187.44 203.14,192.57Z" fill="url(#hg)" stroke="#6a0404" stroke-width="0.76"/>
<path d="M210.17,168.84 C213.07,166.48 219.73,167.01 222.13,171.59 C223.59,175.37 221.63,180.47 217.52,183.58" fill="none" stroke="#ffc8b8" stroke-width="2.12" stroke-linecap="round" opacity="0.7"/>
<path d="M200.02,190.10 C194.10,183.29 189.23,176.67 190.32,170.47" fill="none" stroke="#6a0000" stroke-width="1.13" stroke-linecap="round" opacity="0.6"/>
<path d="M165.00,213.92 C154.62,206.58 146.46,200.57 146.46,192.89 C146.46,187.55 150.91,183.88 156.47,183.88 C160.55,183.88 163.52,186.22 165.00,189.22 C166.48,186.22 169.45,183.88 173.53,183.88 C179.09,183.88 183.54,187.55 183.54,192.89 C183.54,200.57 175.38,206.58 165.00,213.92Z" fill="url(#hg)" stroke="#6a0404" stroke-width="0.80"/>
<path d="M167.97,187.89 C170.56,184.88 177.61,184.22 180.94,188.55 C183.17,192.23 182.06,197.90 178.35,201.90" fill="none" stroke="#ffc8b8" stroke-width="2.25" stroke-linecap="round" opacity="0.7"/>
<path d="M161.29,211.92 C153.88,205.91 147.57,199.90 147.57,193.23" fill="none" stroke="#6a0000" stroke-width="1.20" stroke-linecap="round" opacity="0.6"/>
<path d="M196.21,212.50 C191.09,208.16 187.08,204.62 187.43,200.59 C187.67,197.78 190.18,196.06 193.11,196.31 C195.25,196.50 196.70,197.86 197.35,199.51 C198.26,198.00 199.93,196.91 202.07,197.10 C205.00,197.35 207.17,199.49 206.92,202.29 C206.57,206.33 202.01,209.11 196.21,212.50Z" fill="url(#hg)" stroke="#6a0404" stroke-width="0.50"/>
<path d="M198.97,198.95 C200.47,197.49 204.20,197.46 205.76,199.89 C206.76,201.93 205.91,204.86 203.78,206.79" fill="none" stroke="#ffc8b8" stroke-width="1.19" stroke-linecap="round" opacity="0.7"/>
<path d="M194.35,211.27 C190.73,207.77 187.69,204.32 188.00,200.82" fill="none" stroke="#6a0000" stroke-width="0.63" stroke-linecap="round" opacity="0.6"/>
<path d="M137.70,199.31 C134.24,196.86 131.52,194.86 131.52,192.30 C131.52,190.52 133.00,189.29 134.86,189.29 C136.22,189.29 137.21,190.07 137.70,191.07 C138.19,190.07 139.18,189.29 140.54,189.29 C142.40,189.29 143.88,190.52 143.88,192.30 C143.88,194.86 141.16,196.86 137.70,199.31Z" fill="url(#hg)" stroke="#6a0404" stroke-width="0.50"/>
<path d="M138.69,190.63 C139.55,189.63 141.90,189.41 143.01,190.85 C143.76,192.08 143.39,193.97 142.15,195.30" fill="none" stroke="#ffc8b8" stroke-width="0.75" stroke-linecap="round" opacity="0.7"/>
<path d="M136.46,198.64 C133.99,196.64 131.89,194.63 131.89,192.41" fill="none" stroke="#6a0000" stroke-width="0.40" stroke-linecap="round" opacity="0.6"/>
<path d="M23.45,223.66 C17.16,221.33 12.18,219.38 11.13,215.47 C10.40,212.75 12.17,210.27 15.00,209.51 C17.08,208.95 18.91,209.74 20.08,211.07 C20.42,209.33 21.62,207.74 23.70,207.18 C26.53,206.42 29.30,207.68 30.03,210.41 C31.08,214.32 27.74,218.49 23.45,223.66Z" fill="url(#hg)" stroke="#6a0404" stroke-width="0.50"/>
<path d="M21.41,209.98 C22.32,208.09 25.82,206.79 28.12,208.55 C29.75,210.12 29.96,213.16 28.62,215.71" fill="none" stroke="#ffc8b8" stroke-width="1.19" stroke-linecap="round" opacity="0.7"/>
<path d="M21.29,223.14 C16.69,221.09 12.65,218.89 11.74,215.49" fill="none" stroke="#6a0000" stroke-width="0.63" stroke-linecap="round" opacity="0.6"/>
<path d="M322.00,102.34 C319.69,100.71 317.88,99.37 317.88,97.67 C317.88,96.48 318.87,95.66 320.10,95.66 C321.01,95.66 321.67,96.18 322.00,96.85 C322.33,96.18 322.99,95.66 323.90,95.66 C325.13,95.66 326.12,96.48 326.12,97.67 C326.12,99.37 324.31,100.71 322.00,102.34Z" fill="url(#hg)" stroke="#6a0404" stroke-width="0.50"/>
<path d="M225.50,164.04 C223.19,162.41 221.38,161.07 221.38,159.37 C221.38,158.18 222.37,157.36 223.60,157.36 C224.51,157.36 225.17,157.88 225.50,158.55 C225.83,157.88 226.49,157.36 227.40,157.36 C228.63,157.36 229.62,158.18 229.62,159.37 C229.62,161.07 227.81,162.41 225.50,164.04Z" fill="url(#hg)" stroke="#6a0404" stroke-width="0.50"/>
<path d="M172.00,227.17 C169.12,225.13 166.85,223.46 166.85,221.33 C166.85,219.85 168.09,218.83 169.63,218.83 C170.76,218.83 171.59,219.48 172.00,220.31 C172.41,219.48 173.24,218.83 174.37,218.83 C175.91,218.83 177.15,219.85 177.15,221.33 C177.15,223.46 174.88,225.13 172.00,227.17Z" fill="url(#hg)" stroke="#6a0404" stroke-width="0.50"/>
<path d="M191.00,223.97 C188.12,221.93 185.85,220.26 185.85,218.13 C185.85,216.65 187.09,215.63 188.63,215.63 C189.76,215.63 190.59,216.28 191.00,217.11 C191.41,216.28 192.24,215.63 193.37,215.63 C194.91,215.63 196.15,216.65 196.15,218.13 C196.15,220.26 193.88,221.93 191.00,223.97Z" fill="url(#hg)" stroke="#6a0404" stroke-width="0.50"/>
<path d="M145.40,213.64 C143.09,212.01 141.28,210.67 141.28,208.97 C141.28,207.78 142.27,206.96 143.50,206.96 C144.41,206.96 145.07,207.48 145.40,208.15 C145.73,207.48 146.39,206.96 147.30,206.96 C148.53,206.96 149.52,207.78 149.52,208.97 C149.52,210.67 147.71,212.01 145.40,213.64Z" fill="url(#hg)" stroke="#6a0404" stroke-width="0.50"/>
<path d="M233.00,66.42 C230.98,64.99 229.40,63.82 229.40,62.33 C229.40,61.29 230.26,60.58 231.34,60.58 C232.13,60.58 232.71,61.03 233.00,61.62 C233.29,61.03 233.87,60.58 234.66,60.58 C235.74,60.58 236.60,61.29 236.60,62.33 C236.60,63.82 235.02,64.99 233.00,66.42Z" fill="url(#hg)" stroke="#6a0404" stroke-width="0.50"/>
<path d="M190.00,28.92 C187.98,27.49 186.40,26.32 186.40,24.83 C186.40,23.79 187.26,23.08 188.34,23.08 C189.13,23.08 189.71,23.53 190.00,24.12 C190.29,23.53 190.87,23.08 191.66,23.08 C192.74,23.08 193.60,23.79 193.60,24.83 C193.60,26.32 192.02,27.49 190.00,28.92Z" fill="url(#hg)" stroke="#6a0404" stroke-width="0.50"/>
<polygon points="67.00,187.50 167.00,229.00 187.75,233.50 97.75,327.00" fill="url(#flapL)" stroke="#2a1a16" stroke-width="1.2" stroke-linejoin="round"/>
<polygon points="248.00,153.50 284.00,289.50 187.75,233.50 195.30,227.80" fill="url(#flapR)" stroke="#2a1a16" stroke-width="1.2" stroke-linejoin="round"/>
<path d="M97.75,327.00 C124.1,292.4 154.1,261.2 187.75,233.50 C222.3,247.8 254.4,266.5 284.00,289.50 Z" fill="url(#flapF)" stroke="#2a1a16" stroke-width="1.2" stroke-linejoin="round"/>
<circle cx="144.4" cy="27.2" r="1.1" fill="#ffe0d0" opacity="0.85"/>
<circle cx="80.4" cy="47.2" r="1.1" fill="#ffe0d0" opacity="0.85"/>
<circle cx="108.4" cy="48.2" r="1.1" fill="#ffe0d0" opacity="0.85"/>
<circle cx="49.9" cy="63.2" r="1.1" fill="#ffe0d0" opacity="0.85"/>
<circle cx="55.4" cy="60.2" r="1.1" fill="#ffe0d0" opacity="0.85"/>
<circle cx="137.4" cy="74.2" r="1.1" fill="#ffe0d0" opacity="0.85"/>
<circle cx="73.4" cy="95.7" r="1.1" fill="#ffe0d0" opacity="0.85"/>
<circle cx="95.0" cy="103.8" r="1.1" fill="#ffe0d0" opacity="0.85"/>
<circle cx="122.0" cy="94.8" r="1.1" fill="#ffe0d0" opacity="0.85"/>
<circle cx="29.2" cy="147.2" r="1.1" fill="#ffe0d0" opacity="0.85"/>
<circle cx="124.4" cy="143.2" r="1.1" fill="#ffe0d0" opacity="0.85"/>
<circle cx="138.4" cy="144.2" r="1.1" fill="#ffe0d0" opacity="0.85"/>
<circle cx="252.4" cy="7.2" r="1.1" fill="#ffe0d0" opacity="0.85"/>
<circle cx="284.4" cy="52.7" r="1.1" fill="#ffe0d0" opacity="0.85"/>
<circle cx="214.4" cy="62.7" r="1.1" fill="#ffe0d0" opacity="0.85"/>
<circle cx="227.4" cy="79.9" r="1.1" fill="#ffe0d0" opacity="0.85"/>
<circle cx="238.2" cy="91.7" r="1.1" fill="#ffe0d0" opacity="0.85"/>
<circle cx="270.8" cy="99.8" r="1.1" fill="#ffe0d0" opacity="0.85"/>
<circle cx="285.4" cy="133.2" r="1.1" fill="#ffe0d0" opacity="0.85"/>
<circle cx="243.4" cy="144.2" r="1.1" fill="#ffe0d0" opacity="0.85"/>
<circle cx="269.0" cy="155.2" r="1.1" fill="#ffe0d0" opacity="0.85"/>
<circle cx="314.4" cy="160.2" r="1.1" fill="#ffe0d0" opacity="0.85"/>
<circle cx="310.4" cy="79.9" r="1.1" fill="#ffe0d0" opacity="0.85"/>
<circle cx="304.4" cy="125.2" r="1.1" fill="#ffe0d0" opacity="0.85"/>
<circle cx="235" cy="213" r="1.1" fill="#ffe0d0" opacity="0.85"/>
<circle cx="303" cy="196" r="1.1" fill="#ffe0d0" opacity="0.85"/>
<circle cx="232" cy="260" r="1.1" fill="#ffe0d0" opacity="0.85"/>
<circle cx="44" cy="253" r="1.1" fill="#ffe0d0" opacity="0.85"/>
<circle cx="310" cy="200" r="1.1" fill="#ffe0d0" opacity="0.85"/></svg>
<svg width="1400" height="944" style="position:absolute;left:0;top:0">
<g transform="translate(792,100.5) scale(1.3624)"><path d="M81.75,32.57 C79.33,25.60 72.81,19.87 63.62,20.84 C51.09,22.15 40.31,32.11 42.06,48.78 C44.48,71.79 75.56,86.18 87.92,91.30 C98.95,83.72 127.19,63.10 124.77,40.09 C123.02,23.42 112.83,14.86 98.63,16.36 C91.11,17.15 86.51,21.64 84.51,26.67" fill="none" stroke="#111" vector-effect="non-scaling-stroke" stroke-width="1.3"/>
<path d="M48.00,40.93 C47.99,56.98 63.70,69.77 83.58,82.13 M118.67,38.32 C119.17,51.11 110.48,64.86 95.11,79.31" fill="none" stroke="#111" vector-effect="non-scaling-stroke" stroke-width="0.9"/>
<ellipse cx="88.3" cy="94.5" rx="5.0" ry="3.4" fill="none" stroke="#111" vector-effect="non-scaling-stroke" stroke-width="1"/>
<path d="M155.67,17.09 C154.78,14.52 152.37,12.40 148.98,12.76 C144.35,13.25 140.38,16.92 141.02,23.07 C141.92,31.57 153.38,36.88 157.95,38.77 C162.02,35.97 172.44,28.36 171.55,19.87 C170.90,13.71 167.14,10.56 161.90,11.11 C159.12,11.40 157.43,13.06 156.69,14.91" fill="none" stroke="#111" vector-effect="non-scaling-stroke" stroke-width="1.3"/>
<path d="M143.21,20.18 C143.21,26.10 149.01,30.82 156.34,35.38 M169.30,19.21 C169.48,23.93 166.27,29.01 160.60,34.34" fill="none" stroke="#111" vector-effect="non-scaling-stroke" stroke-width="0.9"/>
<ellipse cx="158" cy="40" rx="1.9" ry="1.2" fill="none" stroke="#111" vector-effect="non-scaling-stroke" stroke-width="1"/>
<path d="M236.80,32.93 C237.83,26.33 235.06,18.98 227.31,15.85 C216.74,11.58 203.90,14.96 198.22,29.02 C190.37,48.43 209.09,73.12 216.79,82.46 C228.82,81.09 260.14,76.62 267.98,57.20 C273.66,43.14 269.15,31.98 257.17,27.14 C250.83,24.58 245.25,26.22 241.51,29.38" fill="none" stroke="#111" vector-effect="non-scaling-stroke" stroke-width="1.3"/>
<path d="M206.29,25.27 C199.47,38.09 206.58,54.98 217.22,73.29 M263.86,53.20 C258.83,63.63 246.04,70.92 227.62,75.94" fill="none" stroke="#111" vector-effect="non-scaling-stroke" stroke-width="0.9"/>
<ellipse cx="216" cy="86" rx="4.6" ry="3.0" fill="none" stroke="#111" vector-effect="non-scaling-stroke" stroke-width="1"/>
<path d="M47.40,132.82 C46.84,130.42 44.88,128.30 41.80,128.30 C37.60,128.30 33.68,131.22 33.68,136.81 C33.68,144.52 43.48,150.37 47.40,152.50 C51.32,150.37 61.40,144.52 61.40,136.81 C61.40,131.22 58.32,128.03 53.56,128.03 C51.04,128.03 49.36,129.36 48.52,130.96" fill="none" stroke="#111" vector-effect="non-scaling-stroke" stroke-width="1.3"/>
<path d="M35.92,134.41 C35.36,139.73 40.12,144.52 46.28,149.31 M59.44,136.01 C59.16,140.27 55.80,144.52 50.20,148.78" fill="none" stroke="#111" vector-effect="non-scaling-stroke" stroke-width="0.9"/>
<ellipse cx="48.5" cy="154.5" rx="1.7" ry="1.2" fill="none" stroke="#111" vector-effect="non-scaling-stroke" stroke-width="1"/>
<path d="M261.80,132.07 C261.08,128.99 258.56,126.25 254.60,126.25 C249.20,126.25 244.16,130.01 244.16,137.20 C244.16,147.11 256.76,154.64 261.80,157.37 C266.84,154.64 279.80,147.11 279.80,137.20 C279.80,130.01 275.84,125.91 269.72,125.91 C266.48,125.91 264.32,127.62 263.24,129.67" fill="none" stroke="#111" vector-effect="non-scaling-stroke" stroke-width="1.3"/>
<path d="M247.04,134.12 C246.32,140.96 252.44,147.11 260.36,153.27 M277.28,136.17 C276.92,141.64 272.60,147.11 265.40,152.59" fill="none" stroke="#111" vector-effect="non-scaling-stroke" stroke-width="0.9"/>
<ellipse cx="260" cy="159" rx="2.2" ry="1.4" fill="none" stroke="#111" vector-effect="non-scaling-stroke" stroke-width="1"/>
<path d="M53.96,200.01 C53.42,196.28 50.71,192.76 46.00,192.34 C39.57,191.78 33.19,195.73 32.44,204.28 C31.40,216.08 45.61,226.35 51.33,230.13 C57.61,227.40 73.81,219.79 74.85,207.99 C75.59,199.44 71.31,194.15 64.03,193.51 C60.17,193.17 57.42,194.98 55.92,197.31" fill="none" stroke="#111" vector-effect="non-scaling-stroke" stroke-width="1.3"/>
<path d="M36.18,200.92 C34.62,208.98 41.26,216.94 50.04,225.09 M71.95,206.51 C70.96,212.98 65.25,219.04 56.11,224.80" fill="none" stroke="#111" vector-effect="non-scaling-stroke" stroke-width="0.9"/>
<ellipse cx="51" cy="232.5" rx="2.6" ry="1.7" fill="none" stroke="#111" vector-effect="non-scaling-stroke" stroke-width="1"/>
<path d="M131.00,79.95 C127.92,77.53 125.50,75.55 125.50,73.02 C125.50,71.26 126.82,70.05 128.47,70.05 C129.68,70.05 130.56,70.82 131.00,71.81 C131.44,70.82 132.32,70.05 133.53,70.05 C135.18,70.05 136.50,71.26 136.50,73.02 C136.50,75.55 134.08,77.53 131.00,79.95Z" fill="none" stroke="#111" vector-effect="non-scaling-stroke" stroke-width="1"/>
<path d="M88.3,96.5 L126,262" fill="none" stroke="#111" vector-effect="non-scaling-stroke" stroke-width="1"/>
<path d="M158,41.5 C153,52 154,62 149,73" fill="none" stroke="#111" vector-effect="non-scaling-stroke" stroke-width="1"/>
<path d="M216,88 C217,110 218,125 216,150 C212,190 205,230 198,262" fill="none" stroke="#111" vector-effect="non-scaling-stroke" stroke-width="1"/>
<path d="M260,161 C258,175 256,185 250,198 C235,220 215,232 203,262" fill="none" stroke="#111" vector-effect="non-scaling-stroke" stroke-width="1"/>
<path d="M48.5,156.5 C52,166 60,172 59,185" fill="none" stroke="#111" vector-effect="non-scaling-stroke" stroke-width="1"/>
<path d="M51,234.5 C51,250 56,262 80,269" fill="none" stroke="#111" vector-effect="non-scaling-stroke" stroke-width="1"/>
<path d="M80.5,258.5 C95,255 110,258.5 138,257.5 M186,259 L239,258.3 M80.5,258.5 L80.8,299" fill="none" stroke="#111" vector-effect="non-scaling-stroke" stroke-width="1.2"/>
<path d="M146,92 C152,80 172,76 188,86" fill="none" stroke="#111" vector-effect="non-scaling-stroke" stroke-width="1.1"/>
<path d="M164.9,78.8 Q161.6,80.3 159.9,81.1 Q158.2,81.9 156.5,82.9 Q154.8,83.8 153.1,85.0 Q151.4,86.2 149.8,87.5 Q148.1,88.9 146.5,90.3 Q144.8,91.8 143.1,93.2 Q141.3,94.6 139.4,95.8 Q137.4,97.1 135.3,98.2 Q133.2,99.3 130.9,100.3 Q128.6,101.4 126.2,102.5 Q123.9,103.6 121.7,105.0 Q119.5,106.4 117.5,108.2 Q115.5,110.0 113.9,112.2 Q112.2,114.4 110.8,116.9 Q109.4,119.4 108.0,121.9 Q106.6,124.5 105.1,126.9 Q103.5,129.3 101.5,131.3 Q99.6,133.4 97.2,135.1 Q94.7,136.8 92.0,138.3 Q89.2,139.9 86.3,141.5 Q83.5,143.0 80.9,145.0 Q78.3,146.9 76.3,149.3 Q74.2,151.8 72.9,154.8 L71.6,157.8" fill="none" stroke="#111" vector-effect="non-scaling-stroke" stroke-width="0.7"/>
<path d="M161.9,81.0 Q159.3,83.0 157.9,84.0 Q156.5,85.0 155.1,86.0 Q153.7,87.1 152.2,88.2 Q150.8,89.3 149.4,90.6 Q148.0,91.9 146.7,93.3 Q145.3,94.8 144.1,96.3 Q142.8,97.9 141.5,99.6 Q140.2,101.3 139.0,103.1 Q137.7,104.8 136.3,106.6 Q134.9,108.4 133.3,110.1 Q131.8,111.9 130.0,113.5 Q128.3,115.1 126.3,116.7 Q124.3,118.2 122.2,119.7 Q120.0,121.2 117.7,122.6 Q115.4,124.1 113.0,125.6 Q110.6,127.1 108.3,128.8 Q105.9,130.5 103.7,132.4 Q101.5,134.3 99.4,136.6 Q97.4,138.8 95.5,141.4 Q93.6,143.9 91.9,146.7 Q90.1,149.6 88.4,152.6 Q86.7,155.6 84.9,158.7 Q83.1,161.7 81.1,164.7 L79.0,167.8" fill="none" stroke="#111" vector-effect="non-scaling-stroke" stroke-width="0.7"/>
<path d="M160.6,81.4 Q158.1,83.1 156.7,84.0 Q155.4,85.0 154.1,86.1 Q152.7,87.1 151.2,88.2 Q149.7,89.3 148.1,90.3 Q146.4,91.4 144.6,92.4 Q142.8,93.4 140.9,94.4 Q139.0,95.5 137.1,96.7 Q135.2,97.9 133.4,99.3 Q131.6,100.7 129.9,102.4 Q128.2,104.1 126.6,106.1 Q125.1,108.1 123.6,110.3 Q122.1,112.4 120.6,114.6 Q119.0,116.8 117.3,118.8 Q115.5,120.8 113.5,122.6 Q111.4,124.4 109.1,126.0 Q106.7,127.5 104.1,129.0 Q101.5,130.4 98.8,131.8 Q96.1,133.3 93.6,135.0 Q91.0,136.6 88.8,138.7 Q86.7,140.8 84.9,143.3 Q83.1,145.8 81.7,148.7 Q80.3,151.6 79.1,154.7 Q77.9,157.8 76.7,160.9 L75.4,163.9" fill="none" stroke="#111" vector-effect="non-scaling-stroke" stroke-width="0.7"/>
<path d="M158.4,80.4 Q154.7,82.2 152.9,83.2 Q151.1,84.2 149.3,85.3 Q147.6,86.4 145.9,87.7 Q144.3,89.0 142.7,90.4 Q141.2,91.8 139.7,93.4 Q138.3,94.9 137.0,96.6 Q135.6,98.3 134.3,100.1 Q133.0,101.9 131.6,103.6 Q130.3,105.4 128.8,107.2 Q127.3,109.0 125.7,110.7 Q124.1,112.5 122.4,114.2 Q120.6,115.9 118.7,117.6 Q116.8,119.4 114.9,121.2 Q113.0,123.0 111.1,125.0 Q109.3,126.9 107.5,129.1 Q105.8,131.2 104.2,133.6 Q102.6,135.9 101.2,138.5 Q99.8,141.1 98.4,143.9 Q97.1,146.7 95.8,149.6 Q94.5,152.5 93.0,155.5 Q91.5,158.5 89.8,161.3 Q88.0,164.2 85.9,167.0 Q83.8,169.7 81.3,172.3 L78.8,174.9" fill="none" stroke="#111" vector-effect="non-scaling-stroke" stroke-width="0.7"/>
<path d="M156.6,81.4 Q152.9,83.2 151.1,84.1 Q149.3,85.0 147.5,85.9 Q145.7,86.9 144.0,88.0 Q142.3,89.0 140.8,90.3 Q139.2,91.6 137.8,93.1 Q136.5,94.6 135.2,96.2 Q134.0,97.9 132.9,99.6 Q131.7,101.3 130.6,103.0 Q129.4,104.7 128.1,106.3 Q126.8,107.9 125.2,109.4 Q123.7,110.8 121.9,112.2 Q120.1,113.6 118.1,114.9 Q116.1,116.3 114.1,117.7 Q112.2,119.2 110.4,120.9 Q108.6,122.6 107.1,124.6 Q105.6,126.6 104.6,129.0 Q103.5,131.4 102.9,134.1 Q102.2,136.8 101.8,139.7 Q101.3,142.6 100.8,145.6 Q100.3,148.5 99.5,151.4 Q98.7,154.3 97.3,157.0 Q96.0,159.6 94.0,162.1 Q91.9,164.5 89.4,166.7 L86.8,168.9" fill="none" stroke="#111" vector-effect="non-scaling-stroke" stroke-width="0.7"/>
<path d="M153.5,84.5 Q150.6,85.6 149.2,86.4 Q147.8,87.2 146.5,88.2 Q145.2,89.3 144.0,90.5 Q142.9,91.8 141.8,93.3 Q140.7,94.7 139.6,96.3 Q138.6,97.9 137.6,99.6 Q136.5,101.3 135.4,103.0 Q134.3,104.8 133.0,106.5 Q131.7,108.3 130.3,110.0 Q128.9,111.8 127.3,113.6 Q125.7,115.3 123.9,117.2 Q122.2,119.0 120.5,120.9 Q118.7,122.7 117.0,124.7 Q115.3,126.7 113.8,128.9 Q112.3,131.1 111.0,133.4 Q109.7,135.8 108.6,138.3 Q107.5,140.8 106.6,143.6 Q105.7,146.3 104.9,149.1 Q104.1,152.0 103.2,154.9 Q102.3,157.7 101.2,160.6 Q100.2,163.4 98.7,166.1 Q97.3,168.7 95.4,171.1 Q93.6,173.5 91.3,175.6 L89.0,177.7" fill="none" stroke="#111" vector-effect="non-scaling-stroke" stroke-width="0.7"/>
<path d="M150.6,87.0 Q147.4,88.4 145.9,89.2 Q144.4,90.1 143.1,91.0 Q141.7,92.0 140.5,93.2 Q139.2,94.4 138.1,95.7 Q137.0,97.0 136.0,98.4 Q135.0,99.8 134.0,101.2 Q133.1,102.7 132.0,104.1 Q130.9,105.6 129.7,107.0 Q128.5,108.4 127.2,109.8 Q125.9,111.3 124.5,112.7 Q123.2,114.2 121.8,115.9 Q120.5,117.5 119.4,119.3 Q118.3,121.1 117.4,123.1 Q116.5,125.1 115.8,127.2 Q115.1,129.4 114.5,131.8 Q114.0,134.1 113.3,136.5 Q112.6,138.9 111.7,141.2 Q110.8,143.6 109.5,145.8 Q108.2,148.0 106.5,150.1 Q104.8,152.1 102.7,154.0 Q100.6,156.0 98.4,157.9 Q96.1,159.7 94.0,161.7 Q91.8,163.7 89.8,166.0 L87.9,168.2" fill="none" stroke="#111" vector-effect="non-scaling-stroke" stroke-width="0.7"/>
<path d="M149.5,87.2 Q146.3,88.8 144.8,89.7 Q143.3,90.6 142.0,91.6 Q140.6,92.5 139.3,93.6 Q137.9,94.6 136.6,95.7 Q135.3,96.8 134.1,98.1 Q132.9,99.4 131.9,101.0 Q130.9,102.5 130.2,104.3 Q129.5,106.0 129.1,108.0 Q128.6,109.9 128.2,112.0 Q127.9,114.0 127.4,116.1 Q126.9,118.1 126.0,120.2 Q125.2,122.2 124.0,124.2 Q122.8,126.2 121.2,128.2 Q119.7,130.1 118.0,132.2 Q116.4,134.2 114.8,136.3 Q113.3,138.5 112.1,140.9 Q111.0,143.3 110.1,146.0 Q109.3,148.8 108.7,151.8 Q108.1,154.8 107.3,158.0 Q106.6,161.1 105.4,164.3 Q104.2,167.4 102.3,170.2 Q100.3,173.1 97.6,175.5 Q94.9,178.0 91.6,180.1 L88.4,182.2" fill="none" stroke="#111" vector-effect="non-scaling-stroke" stroke-width="0.7"/>
<path d="M144.4,88.6 Q141.1,89.9 139.6,90.7 Q138.1,91.5 136.7,92.5 Q135.4,93.4 134.3,94.6 Q133.1,95.7 132.2,96.9 Q131.2,98.1 130.2,99.3 Q129.3,100.6 128.3,101.8 Q127.4,103.1 126.4,104.4 Q125.4,105.7 124.3,107.0 Q123.2,108.4 122.1,109.8 Q121.0,111.3 119.9,112.8 Q118.9,114.4 118.1,116.2 Q117.2,117.9 116.6,119.9 Q115.9,121.8 115.5,123.9 Q115.1,126.1 114.7,128.3 Q114.4,130.6 114.0,133.0 Q113.6,135.3 112.9,137.7 Q112.3,140.1 111.3,142.5 Q110.2,144.8 108.8,147.2 Q107.3,149.5 105.5,151.7 Q103.7,154.0 101.7,156.3 Q99.7,158.5 97.6,160.9 Q95.5,163.3 93.6,165.9 Q91.7,168.5 89.9,171.4 L88.2,174.3" fill="none" stroke="#111" vector-effect="non-scaling-stroke" stroke-width="0.7"/>
<path d="M146.4,90.0 Q143.6,91.8 142.3,92.7 Q141.0,93.6 139.8,94.7 Q138.6,95.7 137.5,96.9 Q136.4,98.0 135.5,99.4 Q134.6,100.7 134.0,102.3 Q133.3,103.8 132.9,105.5 Q132.5,107.2 132.2,108.9 Q131.9,110.7 131.6,112.6 Q131.3,114.4 130.8,116.3 Q130.3,118.1 129.5,120.0 Q128.7,121.9 127.7,123.9 Q126.6,125.8 125.5,127.8 Q124.4,129.8 123.5,132.0 Q122.5,134.1 121.8,136.4 Q121.1,138.7 120.7,141.2 Q120.3,143.7 120.0,146.4 Q119.7,149.1 119.3,151.9 Q118.9,154.8 118.0,157.6 Q117.1,160.4 115.6,163.1 Q114.1,165.8 111.9,168.2 Q109.8,170.6 107.1,172.9 Q104.5,175.1 101.7,177.3 Q98.9,179.5 96.1,182.0 L93.4,184.4" fill="none" stroke="#111" vector-effect="non-scaling-stroke" stroke-width="0.7"/>
<path d="M145.1,94.0 Q142.5,96.0 141.3,97.1 Q140.1,98.2 139.1,99.4 Q138.1,100.6 137.3,102.0 Q136.4,103.3 135.8,104.8 Q135.2,106.3 134.7,108.0 Q134.3,109.6 134.1,111.3 Q133.8,113.0 133.7,114.8 Q133.6,116.6 133.6,118.5 Q133.5,120.3 133.4,122.3 Q133.3,124.2 133.1,126.2 Q132.9,128.2 132.4,130.3 Q132.0,132.3 131.3,134.4 Q130.7,136.5 129.8,138.6 Q128.9,140.7 127.8,142.7 Q126.7,144.8 125.5,146.9 Q124.3,149.0 123.1,151.2 Q121.8,153.3 120.7,155.5 Q119.5,157.7 118.4,160.1 Q117.3,162.4 116.3,164.9 Q115.3,167.4 114.2,170.2 Q113.2,172.9 112.0,175.9 Q110.8,178.8 109.4,181.9 Q107.9,185.0 106.1,188.1 L104.2,191.1" fill="none" stroke="#111" vector-effect="non-scaling-stroke" stroke-width="0.7"/>
<path d="M145.3,93.1 Q141.9,94.6 140.4,95.5 Q139.0,96.4 137.7,97.4 Q136.5,98.5 135.5,99.7 Q134.6,100.9 133.8,102.3 Q133.1,103.6 132.6,105.0 Q132.1,106.5 131.7,107.9 Q131.3,109.4 131.0,110.9 Q130.6,112.4 130.2,113.9 Q129.8,115.5 129.2,117.1 Q128.6,118.7 127.9,120.4 Q127.2,122.1 126.4,123.8 Q125.6,125.6 124.7,127.4 Q123.8,129.2 122.8,131.1 Q121.9,133.1 121.1,135.1 Q120.3,137.1 119.7,139.2 Q119.1,141.3 118.6,143.6 Q118.2,145.8 117.9,148.3 Q117.7,150.7 117.5,153.3 Q117.4,156.0 117.2,158.8 Q117.0,161.6 116.6,164.6 Q116.2,167.6 115.5,170.7 Q114.7,173.7 113.5,176.8 Q112.2,179.8 110.4,182.8 L108.5,185.7" fill="none" stroke="#111" vector-effect="non-scaling-stroke" stroke-width="0.7"/>
<path d="M141.4,96.6 Q137.9,97.8 136.4,98.5 Q134.9,99.2 133.6,100.1 Q132.4,101.1 131.3,102.1 Q130.3,103.2 129.5,104.5 Q128.8,105.7 128.3,107.1 Q127.7,108.5 127.4,109.9 Q127.0,111.3 126.8,112.9 Q126.5,114.4 126.3,115.9 Q126.0,117.5 125.7,119.2 Q125.4,120.8 125.0,122.6 Q124.5,124.3 124.0,126.2 Q123.4,128.0 122.7,129.9 Q122.1,131.8 121.3,133.8 Q120.6,135.8 119.9,137.9 Q119.2,140.0 118.5,142.2 Q117.9,144.3 117.4,146.6 Q116.9,148.8 116.6,151.2 Q116.3,153.6 116.1,156.1 Q115.9,158.6 115.8,161.3 Q115.6,164.0 115.4,166.8 Q115.2,169.7 114.8,172.6 Q114.3,175.6 113.5,178.7 Q112.7,181.7 111.5,184.8 L110.2,187.8" fill="none" stroke="#111" vector-effect="non-scaling-stroke" stroke-width="0.7"/>
<path d="M141.9,100.4 Q138.5,102.4 137.0,103.4 Q135.5,104.5 134.2,105.6 Q133.0,106.8 132.0,108.0 Q131.0,109.3 130.2,110.7 Q129.5,112.2 129.0,113.7 Q128.6,115.2 128.4,116.8 Q128.2,118.4 128.2,120.1 Q128.2,121.7 128.3,123.4 Q128.4,125.1 128.5,126.8 Q128.6,128.6 128.5,130.3 Q128.4,132.1 128.2,134.0 Q127.9,135.9 127.4,137.8 Q126.9,139.7 126.2,141.6 Q125.5,143.6 124.6,145.5 Q123.7,147.5 122.7,149.4 Q121.8,151.4 120.9,153.4 Q119.9,155.4 119.1,157.4 Q118.3,159.5 117.7,161.7 Q117.0,163.9 116.5,166.3 Q115.9,168.7 115.4,171.3 Q114.8,174.0 114.0,176.9 Q113.3,179.7 112.1,182.8 Q111.0,185.8 109.3,188.8 L107.7,191.8" fill="none" stroke="#111" vector-effect="non-scaling-stroke" stroke-width="0.7"/>
<path d="M140.4,104.9 Q138.0,106.6 137.0,107.6 Q136.0,108.6 135.3,109.7 Q134.6,110.9 134.1,112.3 Q133.7,113.6 133.5,115.1 Q133.4,116.6 133.4,118.1 Q133.3,119.7 133.2,121.3 Q133.1,122.9 132.9,124.6 Q132.6,126.3 132.1,128.1 Q131.7,129.9 131.2,131.8 Q130.7,133.8 130.4,135.8 Q130.1,137.8 130.1,139.8 Q130.1,141.9 130.5,144.0 Q130.9,146.2 131.5,148.4 Q132.1,150.6 132.6,152.9 Q133.2,155.3 133.3,157.7 Q133.3,160.1 132.8,162.5 Q132.2,164.9 131.0,167.1 Q129.7,169.4 128.0,171.5 Q126.4,173.6 124.7,175.7 Q123.0,177.8 121.6,180.0 Q120.1,182.2 119.1,184.7 Q118.1,187.2 117.3,190.2 Q116.5,193.2 115.5,196.4 L114.5,199.7" fill="none" stroke="#111" vector-effect="non-scaling-stroke" stroke-width="0.7"/>
<path d="M141.1,104.8 Q138.1,106.7 136.9,107.7 Q135.6,108.7 134.6,109.8 Q133.6,110.8 132.8,112.1 Q132.1,113.4 131.7,114.8 Q131.4,116.2 131.5,117.7 Q131.6,119.3 132.1,120.8 Q132.5,122.3 133.1,123.9 Q133.6,125.5 134.1,127.1 Q134.5,128.8 134.7,130.6 Q134.8,132.4 134.6,134.4 Q134.4,136.4 134.0,138.5 Q133.6,140.6 133.3,142.7 Q133.0,144.8 132.9,146.9 Q132.9,149.0 133.4,151.1 Q133.8,153.2 134.7,155.4 Q135.5,157.6 136.4,160.1 Q137.3,162.5 137.8,165.1 Q138.3,167.8 138.0,170.5 Q137.6,173.1 136.3,175.7 Q134.9,178.2 132.6,180.3 Q130.4,182.5 127.6,184.4 Q124.9,186.3 122.2,188.2 Q119.4,190.1 116.9,192.4 L114.4,194.7" fill="none" stroke="#111" vector-effect="non-scaling-stroke" stroke-width="0.7"/>
<path d="M141.4,108.2 Q138.4,109.6 137.2,110.5 Q136.0,111.3 135.0,112.3 Q134.1,113.3 133.4,114.5 Q132.8,115.7 132.5,117.0 Q132.2,118.4 132.2,119.8 Q132.2,121.2 132.4,122.7 Q132.6,124.2 132.9,125.8 Q133.2,127.4 133.5,129.0 Q133.8,130.7 133.9,132.5 Q134.0,134.3 134.0,136.3 Q134.0,138.2 133.9,140.3 Q133.8,142.3 133.7,144.4 Q133.6,146.5 133.6,148.6 Q133.6,150.8 133.9,152.9 Q134.1,155.0 134.5,157.2 Q134.9,159.5 135.3,161.8 Q135.8,164.1 136.2,166.5 Q136.5,169.0 136.5,171.6 Q136.4,174.2 135.8,176.8 Q135.2,179.4 133.9,181.8 Q132.6,184.3 130.7,186.6 Q128.8,188.8 126.4,190.9 Q124.0,193.0 121.5,195.0 L118.9,197.0" fill="none" stroke="#111" vector-effect="non-scaling-stroke" stroke-width="0.7"/>
<path d="M141.7,108.4 Q138.9,110.1 137.9,111.1 Q136.9,112.1 136.1,113.1 Q135.4,114.1 134.9,115.2 Q134.4,116.3 134.0,117.5 Q133.6,118.7 133.2,120.1 Q132.9,121.4 132.6,122.9 Q132.3,124.4 132.1,126.0 Q131.9,127.7 131.9,129.4 Q131.8,131.2 131.9,133.0 Q131.9,134.9 132.2,136.8 Q132.5,138.7 133.0,140.6 Q133.4,142.6 134.1,144.6 Q134.7,146.6 135.5,148.7 Q136.3,150.8 137.0,153.1 Q137.8,155.3 138.4,157.7 Q139.0,160.1 139.3,162.7 Q139.6,165.2 139.5,167.9 Q139.3,170.6 138.6,173.3 Q137.9,176.1 136.6,178.7 Q135.3,181.4 133.5,183.9 Q131.7,186.5 129.3,188.9 Q127.0,191.3 124.4,193.5 Q121.7,195.8 118.8,198.1 L115.9,200.3" fill="none" stroke="#111" vector-effect="non-scaling-stroke" stroke-width="0.7"/>
<path d="M167.9,80.2 Q171.3,81.4 173.0,82.1 Q174.7,82.7 176.4,83.5 Q178.1,84.3 179.7,85.2 Q181.3,86.2 182.9,87.2 Q184.5,88.2 186.1,89.4 Q187.6,90.5 189.1,91.7 Q190.6,92.9 192.1,94.1 Q193.7,95.3 195.2,96.5 Q196.7,97.7 198.3,99.0 Q199.8,100.2 201.4,101.5 Q203.0,102.7 204.6,104.1 Q206.2,105.5 207.7,107.0 Q209.2,108.4 210.6,110.1 Q212.0,111.8 213.2,113.7 Q214.4,115.5 215.4,117.6 Q216.3,119.7 217.1,121.9 Q217.8,124.1 218.3,126.5 Q218.8,128.8 219.2,131.2 Q219.6,133.7 220.0,136.1 Q220.3,138.6 220.8,141.1 Q221.2,143.6 221.8,146.2 Q222.3,148.8 223.0,151.6 Q223.7,154.3 224.5,157.1 L225.3,160.0" fill="none" stroke="#111" vector-effect="non-scaling-stroke" stroke-width="0.7"/>
<path d="M169.7,80.6 Q172.9,82.0 174.5,82.7 Q176.1,83.4 177.8,84.1 Q179.5,84.9 181.1,85.7 Q182.8,86.6 184.4,87.6 Q186.0,88.5 187.6,89.7 Q189.2,90.9 190.6,92.2 Q192.0,93.6 193.4,95.1 Q194.7,96.7 195.9,98.3 Q197.1,100.0 198.2,101.7 Q199.4,103.5 200.5,105.2 Q201.7,107.0 202.9,108.7 Q204.1,110.5 205.4,112.2 Q206.7,113.9 208.2,115.6 Q209.6,117.3 211.2,119.1 Q212.7,120.8 214.3,122.7 Q215.9,124.5 217.4,126.6 Q218.9,128.6 220.2,130.8 Q221.4,133.0 222.4,135.4 Q223.3,137.9 223.8,140.5 Q224.4,143.1 224.5,145.9 Q224.6,148.6 224.3,151.5 Q224.1,154.3 223.6,157.2 Q223.1,160.1 222.6,163.1 L222.1,166.0" fill="none" stroke="#111" vector-effect="non-scaling-stroke" stroke-width="0.7"/>
<path d="M176.6,79.7 Q179.9,81.0 181.4,81.8 Q182.9,82.6 184.3,83.6 Q185.7,84.6 186.9,85.6 Q188.2,86.7 189.5,87.7 Q190.8,88.8 192.1,89.8 Q193.4,90.9 194.8,91.9 Q196.1,93.0 197.5,94.1 Q198.9,95.3 200.1,96.6 Q201.4,98.0 202.4,99.5 Q203.4,101.1 204.1,102.9 Q204.8,104.8 205.2,106.7 Q205.7,108.7 206.0,110.8 Q206.3,112.9 206.7,115.0 Q207.2,117.1 207.9,119.1 Q208.6,121.2 209.7,123.2 Q210.8,125.2 212.2,127.2 Q213.6,129.3 215.1,131.5 Q216.6,133.6 217.8,136.0 Q219.0,138.4 219.8,140.9 Q220.5,143.5 220.7,146.4 Q220.9,149.2 220.6,152.2 Q220.4,155.2 220.0,158.4 Q219.6,161.5 219.5,164.7 L219.3,167.9" fill="none" stroke="#111" vector-effect="non-scaling-stroke" stroke-width="0.7"/>
<path d="M179.4,81.0 Q182.5,82.2 184.0,82.9 Q185.4,83.6 186.8,84.5 Q188.1,85.3 189.3,86.3 Q190.6,87.2 191.6,88.4 Q192.6,89.6 193.4,90.9 Q194.3,92.2 194.9,93.7 Q195.6,95.1 196.2,96.6 Q196.8,98.0 197.5,99.5 Q198.2,101.0 199.0,102.5 Q199.8,104.1 200.7,105.6 Q201.7,107.2 202.7,108.8 Q203.7,110.5 204.7,112.3 Q205.7,114.0 206.5,116.0 Q207.3,117.9 207.7,120.1 Q208.2,122.2 208.3,124.5 Q208.5,126.8 208.3,129.2 Q208.2,131.6 208.0,134.1 Q207.8,136.6 207.7,139.2 Q207.6,141.8 207.9,144.5 Q208.2,147.1 209.0,149.7 Q209.7,152.4 210.9,155.0 Q212.1,157.7 213.6,160.4 Q215.1,163.1 216.6,165.9 L218.1,168.7" fill="none" stroke="#111" vector-effect="non-scaling-stroke" stroke-width="0.7"/>
<path d="M180.3,82.1 Q183.1,83.4 184.4,84.3 Q185.7,85.1 186.9,86.1 Q188.1,87.2 189.2,88.4 Q190.2,89.6 191.2,91.0 Q192.1,92.4 192.9,94.0 Q193.6,95.5 194.4,97.2 Q195.1,98.8 195.9,100.5 Q196.7,102.3 197.6,104.0 Q198.4,105.8 199.4,107.6 Q200.4,109.5 201.4,111.4 Q202.4,113.3 203.3,115.3 Q204.2,117.4 205.0,119.5 Q205.8,121.7 206.3,124.0 Q206.8,126.3 207.1,128.7 Q207.4,131.1 207.5,133.6 Q207.6,136.1 207.8,138.7 Q208.0,141.2 208.3,143.7 Q208.7,146.3 209.3,148.8 Q210.0,151.3 211.0,153.7 Q212.0,156.1 213.3,158.5 Q214.6,160.9 215.9,163.3 Q217.3,165.6 218.5,168.0 Q219.7,170.4 220.7,172.9 L221.6,175.4" fill="none" stroke="#111" vector-effect="non-scaling-stroke" stroke-width="0.7"/>
<path d="M182.9,84.4 Q185.9,85.9 187.2,86.8 Q188.4,87.7 189.5,88.8 Q190.6,89.8 191.5,91.0 Q192.5,92.2 193.3,93.4 Q194.2,94.7 195.0,96.0 Q195.8,97.4 196.5,98.9 Q197.3,100.4 198.0,102.0 Q198.7,103.6 199.3,105.4 Q199.9,107.1 200.4,109.0 Q200.9,110.9 201.2,112.9 Q201.5,114.9 201.6,116.9 Q201.7,119.0 201.7,121.2 Q201.7,123.4 201.5,125.6 Q201.3,127.9 201.1,130.2 Q200.9,132.5 200.7,134.9 Q200.5,137.2 200.4,139.7 Q200.4,142.1 200.6,144.6 Q200.8,147.0 201.2,149.5 Q201.6,152.0 202.4,154.5 Q203.1,157.0 204.0,159.4 Q205.0,161.9 206.1,164.3 Q207.3,166.7 208.5,169.1 Q209.7,171.5 210.9,173.9 L212.0,176.3" fill="none" stroke="#111" vector-effect="non-scaling-stroke" stroke-width="0.7"/>
<path d="M185.3,89.0 Q188.6,90.6 190.1,91.5 Q191.6,92.4 193.0,93.4 Q194.4,94.5 195.7,95.6 Q197.0,96.7 198.2,98.0 Q199.4,99.3 200.5,100.7 Q201.7,102.1 202.6,103.8 Q203.6,105.4 204.3,107.2 Q205.1,108.9 205.6,110.9 Q206.1,112.8 206.4,114.9 Q206.7,117.0 206.8,119.1 Q206.9,121.3 207.0,123.5 Q207.1,125.7 207.3,128.0 Q207.4,130.2 207.7,132.5 Q208.0,134.9 208.5,137.2 Q209.0,139.6 209.6,142.0 Q210.3,144.5 210.9,147.0 Q211.6,149.5 212.1,152.0 Q212.7,154.6 213.0,157.2 Q213.4,159.8 213.4,162.5 Q213.4,165.1 213.1,167.8 Q212.8,170.4 212.3,173.1 Q211.7,175.8 211.1,178.5 Q210.5,181.3 210.0,184.0 L209.6,186.7" fill="none" stroke="#111" vector-effect="non-scaling-stroke" stroke-width="0.7"/>
<path d="M185.5,89.1 Q188.4,90.5 189.7,91.3 Q190.9,92.2 192.0,93.3 Q193.0,94.5 193.9,95.8 Q194.7,97.1 195.4,98.5 Q196.1,99.9 196.7,101.4 Q197.3,102.9 198.0,104.4 Q198.7,106.0 199.5,107.6 Q200.2,109.3 201.0,111.1 Q201.8,112.8 202.6,114.7 Q203.4,116.7 204.0,118.7 Q204.5,120.8 204.8,122.9 Q205.1,125.1 205.1,127.4 Q205.0,129.7 204.7,132.1 Q204.4,134.4 204.0,136.9 Q203.5,139.3 203.2,141.8 Q202.9,144.3 202.8,146.8 Q202.8,149.4 203.1,151.9 Q203.5,154.5 204.3,157.0 Q205.1,159.6 206.2,162.1 Q207.3,164.6 208.5,167.2 Q209.7,169.7 210.7,172.2 Q211.7,174.8 212.3,177.3 Q212.9,179.9 213.1,182.6 L213.2,185.3" fill="none" stroke="#111" vector-effect="non-scaling-stroke" stroke-width="0.7"/>
<path d="M189.2,93.2 Q192.6,94.6 194.1,95.5 Q195.6,96.4 196.8,97.4 Q198.0,98.5 199.1,99.6 Q200.1,100.7 201.1,101.9 Q202.0,103.1 202.9,104.4 Q203.8,105.6 204.7,107.0 Q205.6,108.3 206.4,109.8 Q207.2,111.3 207.9,113.0 Q208.6,114.7 208.9,116.5 Q209.3,118.3 209.4,120.3 Q209.4,122.3 209.2,124.3 Q208.9,126.4 208.5,128.5 Q208.0,130.7 207.5,132.9 Q207.1,135.1 206.8,137.4 Q206.5,139.7 206.5,142.1 Q206.6,144.5 206.9,147.0 Q207.3,149.5 208.0,152.1 Q208.6,154.8 209.4,157.4 Q210.1,160.1 210.7,162.8 Q211.3,165.6 211.6,168.4 Q211.9,171.2 211.7,174.1 Q211.5,177.0 211.0,180.0 Q210.5,183.0 209.8,186.1 L209.1,189.3" fill="none" stroke="#111" vector-effect="non-scaling-stroke" stroke-width="0.7"/>
<path d="M189.4,96.6 Q192.9,98.0 194.4,99.0 Q195.8,99.9 197.0,101.1 Q198.2,102.3 199.1,103.7 Q200.1,105.1 200.8,106.5 Q201.6,108.0 202.3,109.6 Q203.0,111.2 203.7,112.9 Q204.4,114.6 205.1,116.5 Q205.7,118.3 206.3,120.4 Q206.8,122.4 207.2,124.6 Q207.5,126.8 207.5,129.0 Q207.6,131.3 207.3,133.7 Q207.0,136.1 206.6,138.6 Q206.1,141.0 205.5,143.5 Q205.0,146.0 204.5,148.6 Q204.1,151.2 203.9,153.8 Q203.7,156.5 203.9,159.2 Q204.1,161.9 204.6,164.7 Q205.1,167.4 205.7,170.2 Q206.4,172.9 206.9,175.7 Q207.5,178.4 207.8,181.1 Q208.2,183.9 208.2,186.6 Q208.1,189.3 207.8,192.1 Q207.6,194.9 207.2,197.8 L206.8,200.6" fill="none" stroke="#111" vector-effect="non-scaling-stroke" stroke-width="0.7"/>
<path d="M190.8,101.2 Q194.3,102.6 195.7,103.6 Q197.1,104.6 198.2,105.8 Q199.4,107.0 200.2,108.4 Q201.1,109.7 201.8,111.2 Q202.5,112.6 203.1,114.2 Q203.7,115.7 204.3,117.4 Q204.9,119.1 205.5,121.0 Q206.1,122.8 206.6,124.8 Q207.2,126.9 207.5,129.1 Q207.9,131.2 208.0,133.6 Q208.2,135.9 208.0,138.3 Q207.8,140.7 207.3,143.1 Q206.7,145.6 205.9,148.0 Q205.1,150.5 204.2,153.0 Q203.2,155.6 202.2,158.1 Q201.2,160.7 200.4,163.4 Q199.6,166.0 199.0,168.8 Q198.5,171.6 198.4,174.4 Q198.3,177.2 198.7,180.1 Q199.0,183.0 199.6,185.9 Q200.3,188.8 201.1,191.7 Q201.9,194.5 202.7,197.3 Q203.4,200.0 203.9,202.7 L204.5,205.4" fill="none" stroke="#111" vector-effect="non-scaling-stroke" stroke-width="0.7"/>
<path d="M189.3,105.6 Q192.3,107.1 193.5,108.0 Q194.7,109.0 195.7,110.0 Q196.8,111.1 197.6,112.2 Q198.5,113.4 199.3,114.7 Q200.1,116.0 200.7,117.4 Q201.4,118.9 201.8,120.6 Q202.3,122.2 202.5,124.0 Q202.6,125.8 202.5,127.7 Q202.4,129.6 202.1,131.6 Q201.7,133.6 201.2,135.7 Q200.8,137.8 200.3,139.9 Q199.9,142.1 199.6,144.4 Q199.3,146.7 199.3,149.1 Q199.2,151.5 199.3,154.0 Q199.4,156.5 199.5,159.1 Q199.6,161.7 199.6,164.3 Q199.7,167.0 199.4,169.6 Q199.2,172.2 198.6,174.9 Q198.1,177.5 197.3,180.2 Q196.6,182.9 195.8,185.6 Q195.1,188.4 194.6,191.2 Q194.0,194.0 194.0,196.9 Q193.9,199.7 194.5,202.6 L195.0,205.4" fill="none" stroke="#111" vector-effect="non-scaling-stroke" stroke-width="0.7"/>
<path d="M188.1,108.3 Q190.8,109.6 191.9,110.6 Q193.0,111.5 193.8,112.7 Q194.6,113.8 195.1,115.2 Q195.6,116.6 195.8,118.1 Q196.0,119.6 196.2,121.1 Q196.4,122.7 196.6,124.5 Q196.9,126.2 197.2,128.0 Q197.6,129.9 198.0,132.0 Q198.4,134.0 198.7,136.2 Q199.0,138.4 199.0,140.7 Q198.9,143.0 198.5,145.4 Q198.1,147.8 197.3,150.1 Q196.5,152.5 195.5,155.0 Q194.4,157.4 193.5,160.0 Q192.5,162.5 191.9,165.2 Q191.3,167.8 191.3,170.6 Q191.2,173.4 191.8,176.2 Q192.3,179.0 193.3,181.8 Q194.2,184.6 195.2,187.4 Q196.2,190.2 196.8,192.9 Q197.5,195.6 197.6,198.4 Q197.8,201.1 197.4,204.0 Q197.0,206.9 196.5,210.0 L195.9,213.1" fill="none" stroke="#111" vector-effect="non-scaling-stroke" stroke-width="0.7"/>
<path d="M147,100 C146,112 150,121 157,124 C163,126 168,122 171,118" fill="none" stroke="#111" vector-effect="non-scaling-stroke" stroke-width="1"/>
<path d="M156,107 q3,1.6 6,-0.5 M169,105 q3,1.6 6,-0.5 M155,119 q4,2 8,-0.5 M175,103 l2,-2 M176,105 l2.5,-1 M160,111 l1,1" fill="none" stroke="#111" vector-effect="non-scaling-stroke" stroke-width="0.9"/>
<path d="M159,124 C159,132 160,150 161,168 M173,118 C174,130 174,150 175,172 M150,160 C155,158 158,164 158,172" fill="none" stroke="#111" vector-effect="non-scaling-stroke" stroke-width="1"/>
<path d="M131,168 C134,150 142,140 152,136 M192,164 C190,150 186,140 178,136 M131,168 L145,172 M192,164 L178,170" fill="none" stroke="#111" vector-effect="non-scaling-stroke" stroke-width="1"/>
<path d="M140,256 C130,240 127,215 130,196 C130,180 148,176 161,186 C170,176 196,178 197,196 C199,215 197,240 187,256 M162,188 C160,210 160,235 162,250" fill="none" stroke="#111" vector-effect="non-scaling-stroke" stroke-width="1.1"/>
<path d="M143.5,249 C150,247 153,247 155.5,249 C158,262 159,275 158,283 C156,288 144,289 140.5,284 C138,276 140,262 143.5,249 Z M161.5,248 C166,246 171,246 174.7,248 C178,262 182,275 181.3,283 C179,289 165,289 161,284 C159,276 159.5,262 161.5,248 Z" fill="none" stroke="#111" vector-effect="non-scaling-stroke" stroke-width="1.2"/>
<path d="M146,256 l7,3 l-7,3 l7,3 l-7,3 l7,3 M165,256 l8,3 l-8,3 l8,3 l-8,3 l8,3" fill="none" stroke="#111" vector-effect="non-scaling-stroke" stroke-width="0.8"/></g>
<g fill="#555" font-family="Liberation Serif, serif"><text x="882.8" y="175" font-size="11.2" textLength="47" lengthAdjust="spacingAndGlyphs">ШСНСЬЯ</text><text x="882.8" y="181" font-size="4" textLength="47" lengthAdjust="spacingAndGlyphs">комната творчества</text></g>
<path d="M809,526.7 Q1012,524.4 1216,526.3 Q1012,528.6 809,527.2Z" fill="#0a0a0a"/>
<circle cx="1031.9" cy="561.7" r="13.7" fill="#220404" stroke="#f4fcfc" stroke-width="1"/>
<circle cx="1060.0" cy="561.7" r="13.7" fill="#6c0a0a" stroke="#f4fcfc" stroke-width="1"/>
<circle cx="1088.0" cy="561.7" r="13.7" fill="#960c0c" stroke="#f4fcfc" stroke-width="1"/>
<circle cx="1116.1" cy="561.7" r="13.7" fill="#c21010" stroke="#f4fcfc" stroke-width="1"/>
<circle cx="1144.1" cy="561.7" r="13.7" fill="#f01c0c" stroke="#f4fcfc" stroke-width="1"/>
<circle cx="1172.2" cy="561.7" r="13.7" fill="#da2210" stroke="#f4fcfc" stroke-width="1"/>
<circle cx="1031.9" cy="589.8" r="13.7" fill="#4c0808" stroke="#f4fcfc" stroke-width="1"/>
<circle cx="1060.0" cy="589.8" r="13.7" fill="#b42212" stroke="#f4fcfc" stroke-width="1"/>
<circle cx="1088.0" cy="589.8" r="13.7" fill="#e22c12" stroke="#f4fcfc" stroke-width="1"/>
<circle cx="1116.1" cy="589.8" r="13.7" fill="#d23212" stroke="#f4fcfc" stroke-width="1"/>
<circle cx="1144.1" cy="589.8" r="13.7" fill="#f24222" stroke="#f4fcfc" stroke-width="1"/>
<circle cx="1172.2" cy="589.8" r="13.7" fill="#5c1a0a" stroke="#f4fcfc" stroke-width="1"/>
</svg>
<div class="copy" style="left:1071.5px;top:471.5px;width:140px;font-size:8.5px;line-height:9.9px">*материал защищен авторским правом,<br>продажа и публикация без согласия<br>автора - ЗАПРЕЩЕНА</div>
<svg viewBox="0 0 319 317" preserveAspectRatio="none" style="position:absolute;left:834.3px;top:548px;width:142.3px;height:141.3px"><defs>
<linearGradient id="rbg" x1="0" y1="0" x2="1" y2="0.6"><stop offset="0" stop-color="#faf0e6"/><stop offset="0.45" stop-color="#f6e4d6"/><stop offset="0.8" stop-color="#eac6b2"/><stop offset="1" stop-color="#e0b49c"/></linearGradient>
<radialGradient id="bg1" cx="0.35" cy="0.3" r="0.8"><stop offset="0" stop-color="#f44a34"/><stop offset="0.5" stop-color="#e0180c"/><stop offset="1" stop-color="#b00a06"/></radialGradient>
<filter id="rb8" x="-50%" y="-50%" width="200%" height="200%"><feGaussianBlur stdDeviation="10"/></filter>
<filter id="rb2" x="-50%" y="-50%" width="200%" height="200%"><feGaussianBlur stdDeviation="2"/></filter>
<filter id="rb1" x="-50%" y="-50%" width="200%" height="200%"><feGaussianBlur stdDeviation="0.8"/></filter>
<linearGradient id="box" x1="0" y1="0" x2="1" y2="1"><stop offset="0" stop-color="#b87452"/><stop offset="0.5" stop-color="#9c5a3a"/><stop offset="1" stop-color="#7a3c24"/></linearGradient>
<linearGradient id="hair" x1="0" y1="0" x2="0" y2="1"><stop offset="0" stop-color="#e25a2c"/><stop offset="0.6" stop-color="#d63a18"/><stop offset="1" stop-color="#b82410"/></linearGradient>
</defs>
<rect width="319" height="317" fill="url(#rbg)"/>
<ellipse cx="300" cy="200" rx="70" ry="140" fill="#e2a88a" opacity="0.6" filter="url(#rb8)"/>
<ellipse cx="270" cy="280" rx="90" ry="60" fill="#e0a888" opacity="0.7" filter="url(#rb8)"/>
<ellipse cx="305" cy="300" rx="45" ry="50" fill="#d8885e" opacity="0.75" filter="url(#rb8)"/>
<ellipse cx="290" cy="40" rx="50" ry="40" fill="#e8c4b0" opacity="0.5" filter="url(#rb8)"/>
<ellipse cx="60" cy="120" rx="50" ry="40" fill="#fbf4ec" opacity="0.7" filter="url(#rb8)"/>
<ellipse cx="150" cy="230" rx="70" ry="40" fill="#f0dccb" opacity="0.5" filter="url(#rb8)"/>
<path d="M88.3,96.5 L126,262" fill="none" stroke="#9a4a3a" stroke-width="0.9"/>
<path d="M158,41.5 C153,52 154,62 149,73" fill="none" stroke="#9a4a3a" stroke-width="0.9"/>
<path d="M216,88 C217,110 218,125 216,150 C212,190 205,230 198,262" fill="none" stroke="#9a4a3a" stroke-width="0.9"/>
<path d="M260,161 C258,175 256,185 250,198 C235,220 215,232 203,262" fill="none" stroke="#9a4a3a" stroke-width="0.9"/>
<path d="M48.5,156.5 C52,166 60,172 59,185" fill="none" stroke="#9a4a3a" stroke-width="0.9"/>
<path d="M51,234.5 C51,250 56,262 80,269" fill="none" stroke="#9a4a3a" stroke-width="0.9"/>
<path d="M82,258 L232,258 C245,270 258,295 268,317 L82,317 Z" fill="#9a5a3c" filter="url(#rb2)" opacity="0.6"/>
<rect x="81.5" y="258.3" width="150" height="59" fill="url(#box)"/>
<rect x="81.5" y="258.3" width="150" height="5" fill="#c89070" opacity="0.6"/>
<rect x="81.5" y="290" width="150" height="27" fill="#7a3a22" opacity="0.35" filter="url(#rb2)"/>
<path d="M160,82 C176,79 191,86 198,101 C206,120 214,142 218,166 C220,181 218,194 212,202 L200,196 L194,172 L182,142 L150,142 L132,165 C122,180 112,192 100,198 C92,194 86,186 82,176 C96,162 106,142 117,118 C127,100 140,85 160,82 Z" fill="url(#hair)"/>
<path d="M165.8,78.0 Q162.3,80.0 160.4,81.0 Q158.6,82.0 156.6,82.9 Q154.7,83.9 152.7,85.0 Q150.7,86.1 148.7,87.4 Q146.8,88.7 145.0,90.2 Q143.1,91.7 141.4,93.5 Q139.6,95.3 137.9,97.2 Q136.2,99.1 134.4,101.0 Q132.6,102.9 130.7,104.6 Q128.7,106.3 126.5,107.8 Q124.3,109.3 121.8,110.6 Q119.3,111.9 116.7,113.1 Q114.1,114.3 111.5,115.7 Q108.9,117.1 106.5,118.8 Q104.1,120.5 102.2,122.7 Q100.3,124.9 98.8,127.6 Q97.3,130.2 96.1,133.2 Q95.0,136.2 94.0,139.2 Q93.0,142.3 91.8,145.1 Q90.7,148.0 89.1,150.5 Q87.4,153.0 85.2,155.1 Q83.0,157.2 80.2,159.0 Q77.5,160.8 74.5,162.6 L71.4,164.4" fill="none" stroke="#e0502a" stroke-width="1.2" stroke-linecap="round"/>
<path d="M161.5,79.5 Q158.2,80.5 156.4,81.1 Q154.7,81.7 153.0,82.5 Q151.3,83.4 149.6,84.5 Q147.9,85.6 146.2,86.9 Q144.6,88.1 142.9,89.5 Q141.2,90.8 139.3,92.0 Q137.4,93.3 135.4,94.4 Q133.3,95.4 131.0,96.4 Q128.8,97.4 126.4,98.4 Q124.0,99.4 121.7,100.6 Q119.3,101.8 117.2,103.4 Q115.1,105.0 113.3,107.1 Q111.5,109.2 110.0,111.7 Q108.5,114.3 107.2,117.0 Q105.9,119.7 104.5,122.3 Q103.1,125.0 101.4,127.4 Q99.7,129.7 97.4,131.7 Q95.2,133.7 92.4,135.4 Q89.7,137.1 86.7,138.6 Q83.6,140.2 80.7,142.0 Q77.7,143.7 75.2,146.0 Q72.7,148.2 71.0,151.0 Q69.2,153.9 68.3,157.3 L67.3,160.7" fill="none" stroke="#c82a12" stroke-width="2.4" stroke-linecap="round"/>
<path d="M163.3,80.6 Q160.6,82.4 159.3,83.4 Q157.9,84.4 156.6,85.6 Q155.2,86.7 153.8,88.0 Q152.4,89.2 150.8,90.4 Q149.3,91.6 147.5,92.6 Q145.8,93.6 143.8,94.4 Q141.8,95.2 139.7,95.9 Q137.6,96.6 135.4,97.4 Q133.2,98.3 131.2,99.4 Q129.2,100.6 127.4,102.2 Q125.6,103.8 124.0,105.8 Q122.5,107.9 121.1,110.2 Q119.7,112.5 118.2,114.7 Q116.7,116.9 114.9,118.9 Q113.1,120.8 110.8,122.3 Q108.6,123.7 105.8,124.9 Q103.1,126.0 100.2,127.1 Q97.2,128.2 94.3,129.6 Q91.5,131.0 89.1,133.0 Q86.8,135.0 85.1,137.7 Q83.5,140.5 82.6,143.8 Q81.7,147.2 81.2,150.8 Q80.7,154.4 80.1,158.0 L79.4,161.5" fill="none" stroke="#e86a3a" stroke-width="1.9" stroke-linecap="round"/>
<path d="M162.2,79.1 Q158.5,80.8 156.8,81.7 Q155.0,82.6 153.3,83.7 Q151.7,84.8 150.1,86.0 Q148.6,87.3 147.1,88.6 Q145.7,90.0 144.3,91.5 Q142.9,93.0 141.5,94.5 Q140.2,96.0 138.8,97.5 Q137.4,99.0 135.8,100.5 Q134.3,102.0 132.6,103.4 Q131.0,104.9 129.2,106.3 Q127.4,107.7 125.5,109.1 Q123.7,110.6 121.8,112.1 Q120.0,113.7 118.2,115.4 Q116.5,117.1 114.9,119.1 Q113.3,121.1 111.9,123.3 Q110.5,125.5 109.1,127.9 Q107.8,130.3 106.5,132.8 Q105.1,135.3 103.7,137.9 Q102.2,140.5 100.4,142.9 Q98.7,145.4 96.6,147.6 Q94.4,149.9 91.9,151.9 Q89.4,153.9 86.5,155.7 Q83.6,157.5 80.5,159.1 L77.3,160.8" fill="none" stroke="#b82010" stroke-width="1.4" stroke-linecap="round"/>
<path d="M157.3,82.5 Q154.7,84.2 153.3,85.1 Q152.0,86.1 150.8,87.3 Q149.5,88.4 148.2,89.7 Q146.9,91.0 145.6,92.3 Q144.3,93.6 142.8,94.9 Q141.4,96.2 139.7,97.4 Q138.1,98.6 136.3,99.8 Q134.5,100.9 132.5,102.0 Q130.5,103.1 128.5,104.3 Q126.5,105.5 124.6,106.9 Q122.6,108.3 120.9,110.0 Q119.1,111.7 117.6,113.7 Q116.0,115.8 114.7,118.1 Q113.4,120.5 112.3,123.0 Q111.1,125.5 109.9,128.1 Q108.6,130.7 107.2,133.1 Q105.8,135.6 103.9,137.8 Q102.1,140.0 99.9,142.0 Q97.6,144.0 94.9,145.7 Q92.3,147.5 89.4,149.2 Q86.6,150.9 83.7,152.8 Q80.9,154.7 78.4,157.0 Q75.8,159.2 73.8,161.9 L71.8,164.6" fill="none" stroke="#d83c1a" stroke-width="2.5" stroke-linecap="round"/>
<path d="M156.2,80.2 Q153.8,82.2 152.6,83.3 Q151.4,84.4 150.2,85.6 Q149.0,86.7 147.7,87.9 Q146.4,89.1 144.9,90.2 Q143.5,91.4 141.9,92.6 Q140.4,93.7 138.7,95.0 Q137.1,96.2 135.5,97.6 Q133.8,98.9 132.3,100.5 Q130.7,102.0 129.3,103.9 Q127.9,105.7 126.7,107.7 Q125.5,109.8 124.4,112.1 Q123.3,114.4 122.2,116.8 Q121.1,119.2 119.9,121.7 Q118.7,124.1 117.2,126.5 Q115.7,128.9 113.9,131.1 Q112.1,133.3 109.8,135.4 Q107.6,137.4 105.0,139.3 Q102.4,141.2 99.7,143.1 Q96.9,145.0 94.1,147.1 Q91.3,149.1 88.6,151.4 Q86.0,153.7 83.7,156.4 Q81.4,159.1 79.4,162.2 Q77.5,165.4 75.8,169.0 L74.2,172.5" fill="none" stroke="#ee7444" stroke-width="2.0" stroke-linecap="round"/>
<path d="M153.9,84.4 Q151.2,86.4 150.0,87.5 Q148.8,88.7 147.6,89.9 Q146.4,91.2 145.2,92.5 Q144.0,93.8 142.7,95.2 Q141.4,96.6 140.1,98.0 Q138.7,99.4 137.3,100.8 Q135.8,102.3 134.4,103.9 Q132.9,105.4 131.5,107.1 Q130.0,108.8 128.7,110.6 Q127.4,112.4 126.2,114.5 Q125.0,116.5 124.0,118.7 Q122.9,120.9 122.0,123.3 Q121.0,125.6 120.0,128.0 Q119.0,130.5 117.8,132.9 Q116.6,135.3 115.2,137.6 Q113.7,140.0 111.9,142.1 Q110.2,144.3 108.0,146.3 Q105.9,148.3 103.5,150.2 Q101.1,152.1 98.5,153.9 Q96.0,155.6 93.4,157.5 Q90.8,159.3 88.3,161.3 Q85.8,163.3 83.5,165.5 Q81.2,167.8 79.1,170.4 L77.0,173.0" fill="none" stroke="#e0502a" stroke-width="1.5" stroke-linecap="round"/>
<path d="M155.4,83.2 Q152.0,84.4 150.4,85.0 Q148.8,85.7 147.2,86.5 Q145.7,87.2 144.3,88.2 Q142.8,89.1 141.6,90.3 Q140.3,91.4 139.2,92.8 Q138.1,94.2 137.2,95.8 Q136.3,97.3 135.5,99.0 Q134.8,100.7 133.9,102.5 Q133.1,104.2 132.2,106.0 Q131.2,107.7 130.0,109.5 Q128.8,111.2 127.4,112.9 Q126.0,114.7 124.4,116.4 Q122.8,118.2 121.2,120.1 Q119.6,122.0 118.1,124.1 Q116.6,126.2 115.4,128.5 Q114.2,130.9 113.2,133.5 Q112.3,136.1 111.4,139.0 Q110.6,141.8 109.7,144.9 Q108.8,147.9 107.6,150.9 Q106.4,154.0 104.6,156.9 Q102.9,159.8 100.6,162.4 Q98.3,165.1 95.4,167.5 Q92.5,169.9 89.2,172.1 L85.9,174.3" fill="none" stroke="#c82a12" stroke-width="2.7" stroke-linecap="round"/>
<path d="M150.3,82.6 Q147.4,83.7 146.0,84.5 Q144.6,85.2 143.3,86.2 Q142.0,87.1 140.9,88.3 Q139.7,89.5 138.6,90.8 Q137.6,92.1 136.4,93.4 Q135.3,94.7 134.0,95.9 Q132.7,97.1 131.1,98.2 Q129.6,99.4 127.9,100.6 Q126.3,101.7 124.7,103.1 Q123.1,104.5 121.8,106.2 Q120.5,107.9 119.7,110.0 Q118.8,112.1 118.2,114.4 Q117.7,116.8 117.2,119.2 Q116.7,121.7 116.0,124.1 Q115.2,126.5 113.9,128.6 Q112.6,130.8 110.6,132.7 Q108.7,134.6 106.3,136.4 Q104.0,138.2 101.6,140.2 Q99.2,142.1 97.3,144.3 Q95.4,146.6 94.1,149.3 Q92.9,152.1 92.3,155.3 Q91.7,158.6 91.5,162.1 Q91.2,165.7 90.6,169.2 L90.1,172.7" fill="none" stroke="#e86a3a" stroke-width="2.2" stroke-linecap="round"/>
<path d="M147.6,84.7 Q144.9,86.4 143.7,87.3 Q142.4,88.3 141.2,89.2 Q140.0,90.2 138.8,91.3 Q137.7,92.4 136.6,93.5 Q135.5,94.7 134.5,96.1 Q133.6,97.4 132.7,98.9 Q131.9,100.4 131.2,102.0 Q130.5,103.6 129.9,105.4 Q129.3,107.1 128.8,109.0 Q128.3,110.8 127.8,112.8 Q127.3,114.7 126.7,116.7 Q126.1,118.7 125.3,120.7 Q124.5,122.7 123.5,124.7 Q122.5,126.7 121.2,128.7 Q120.0,130.7 118.4,132.7 Q116.9,134.6 115.1,136.6 Q113.4,138.5 111.5,140.5 Q109.6,142.5 107.7,144.5 Q105.8,146.5 103.9,148.7 Q102.0,150.9 100.1,153.2 Q98.3,155.6 96.5,158.2 Q94.8,160.8 93.0,163.7 Q91.3,166.5 89.5,169.6 L87.8,172.8" fill="none" stroke="#b82010" stroke-width="1.7" stroke-linecap="round"/>
<path d="M147.7,87.5 Q144.4,89.4 142.9,90.4 Q141.5,91.5 140.2,92.6 Q138.9,93.8 137.8,95.1 Q136.7,96.4 135.8,97.8 Q134.8,99.2 134.1,100.6 Q133.3,102.1 132.6,103.6 Q131.9,105.1 131.2,106.6 Q130.5,108.1 129.7,109.6 Q128.9,111.1 127.9,112.7 Q127.0,114.2 126.0,115.7 Q124.9,117.3 123.9,118.9 Q122.8,120.5 121.8,122.2 Q120.8,123.9 120.0,125.7 Q119.1,127.5 118.4,129.5 Q117.8,131.5 117.2,133.6 Q116.7,135.7 116.2,138.0 Q115.7,140.3 115.1,142.7 Q114.5,145.1 113.7,147.5 Q112.8,149.9 111.6,152.2 Q110.4,154.6 108.6,156.7 Q106.9,158.9 104.8,161.0 Q102.6,163.0 100.1,164.9 Q97.6,166.8 94.9,168.6 L92.2,170.4" fill="none" stroke="#d83c1a" stroke-width="1.2" stroke-linecap="round"/>
<path d="M149.9,86.3 Q146.4,88.3 144.8,89.5 Q143.3,90.7 142.0,92.1 Q140.7,93.4 139.5,95.0 Q138.4,96.5 137.4,98.1 Q136.4,99.7 135.4,101.3 Q134.5,103.0 133.4,104.6 Q132.3,106.2 131.1,107.8 Q129.9,109.5 128.6,111.1 Q127.3,112.8 125.9,114.5 Q124.6,116.3 123.3,118.2 Q122.1,120.0 121.1,122.1 Q120.1,124.1 119.4,126.4 Q118.8,128.6 118.4,131.1 Q118.0,133.5 117.8,136.1 Q117.6,138.7 117.4,141.4 Q117.1,144.0 116.6,146.7 Q116.1,149.4 115.1,152.0 Q114.1,154.5 112.6,156.9 Q111.0,159.3 108.9,161.5 Q106.8,163.6 104.3,165.6 Q101.9,167.6 99.3,169.6 Q96.7,171.5 94.2,173.6 Q91.8,175.6 89.6,178.0 L87.5,180.4" fill="none" stroke="#ee7444" stroke-width="2.4" stroke-linecap="round"/>
<path d="M147.8,89.6 Q144.4,91.4 142.8,92.4 Q141.2,93.5 139.8,94.5 Q138.4,95.6 137.0,96.8 Q135.6,98.0 134.4,99.2 Q133.1,100.5 132.0,102.0 Q130.8,103.4 129.9,105.0 Q128.9,106.5 128.1,108.3 Q127.2,110.0 126.6,111.9 Q126.0,113.8 125.5,115.8 Q125.0,117.7 124.6,119.8 Q124.2,121.9 123.7,124.0 Q123.3,126.2 122.7,128.4 Q122.1,130.6 121.4,132.8 Q120.6,135.0 119.6,137.2 Q118.6,139.4 117.3,141.6 Q116.0,143.9 114.6,146.1 Q113.2,148.3 111.6,150.5 Q110.1,152.8 108.6,155.1 Q107.1,157.5 105.6,159.9 Q104.2,162.4 102.9,165.0 Q101.5,167.6 100.3,170.5 Q99.0,173.3 97.8,176.3 Q96.5,179.4 95.1,182.5 L93.6,185.7" fill="none" stroke="#e0502a" stroke-width="1.9" stroke-linecap="round"/>
<path d="M147.5,88.6 Q144.4,90.5 143.1,91.6 Q141.8,92.7 140.7,93.9 Q139.7,95.2 138.8,96.5 Q137.8,97.8 137.0,99.1 Q136.1,100.5 135.2,101.9 Q134.4,103.2 133.4,104.7 Q132.5,106.2 131.6,107.8 Q130.6,109.4 129.7,111.1 Q128.8,112.8 128.0,114.6 Q127.3,116.4 126.7,118.4 Q126.2,120.4 125.9,122.5 Q125.6,124.6 125.6,126.8 Q125.5,129.0 125.6,131.4 Q125.6,133.8 125.7,136.3 Q125.7,138.8 125.5,141.3 Q125.3,143.9 124.7,146.4 Q124.1,149.0 123.0,151.5 Q121.9,154.0 120.3,156.4 Q118.7,158.8 116.6,161.0 Q114.6,163.2 112.2,165.3 Q109.8,167.4 107.2,169.4 Q104.7,171.5 102.2,173.7 Q99.7,175.9 97.4,178.3 L95.0,180.8" fill="none" stroke="#c82a12" stroke-width="1.4" stroke-linecap="round"/>
<path d="M145.1,89.7 Q142.0,91.5 140.6,92.6 Q139.2,93.7 138.0,94.9 Q136.8,96.2 135.6,97.5 Q134.5,98.8 133.4,100.2 Q132.2,101.6 131.1,103.1 Q129.9,104.5 128.7,106.1 Q127.5,107.7 126.4,109.4 Q125.3,111.1 124.4,113.0 Q123.5,114.9 122.9,116.9 Q122.2,119.0 121.8,121.2 Q121.4,123.4 121.2,125.8 Q120.9,128.1 120.7,130.5 Q120.5,132.9 120.0,135.3 Q119.6,137.7 118.8,140.1 Q118.0,142.5 116.9,144.8 Q115.7,147.1 114.2,149.4 Q112.7,151.7 111.1,153.9 Q109.5,156.2 108.0,158.5 Q106.5,160.8 105.2,163.3 Q104.0,165.7 103.1,168.4 Q102.2,171.1 101.6,174.0 Q101.0,176.9 100.5,180.0 Q99.9,183.0 99.1,186.1 L98.3,189.2" fill="none" stroke="#e86a3a" stroke-width="2.5" stroke-linecap="round"/>
<path d="M144.5,91.2 Q141.5,93.2 140.3,94.2 Q139.0,95.3 137.9,96.3 Q136.7,97.3 135.6,98.4 Q134.5,99.4 133.5,100.6 Q132.5,101.8 131.8,103.2 Q131.1,104.6 130.7,106.2 Q130.3,107.8 130.4,109.5 Q130.4,111.1 130.7,112.9 Q131.0,114.7 131.3,116.5 Q131.6,118.3 131.5,120.1 Q131.5,122.0 131.0,123.9 Q130.5,125.7 129.5,127.6 Q128.5,129.5 127.2,131.4 Q125.9,133.3 124.7,135.2 Q123.4,137.1 122.6,139.2 Q121.8,141.2 121.5,143.6 Q121.2,145.9 121.3,148.5 Q121.5,151.1 121.7,154.0 Q121.8,157.0 121.6,160.0 Q121.3,163.0 120.2,165.9 Q119.1,168.8 116.9,171.2 Q114.7,173.7 111.7,175.6 Q108.6,177.6 105.1,179.2 L101.5,180.9" fill="none" stroke="#b82010" stroke-width="2.0" stroke-linecap="round"/>
<path d="M142.9,91.5 Q140.5,93.6 139.5,94.7 Q138.5,95.7 137.5,96.9 Q136.6,98.0 135.7,99.2 Q134.7,100.4 133.9,101.8 Q133.1,103.1 132.5,104.7 Q132.0,106.2 131.7,107.8 Q131.4,109.5 131.5,111.3 Q131.5,113.1 131.8,114.9 Q132.0,116.8 132.3,118.7 Q132.6,120.6 132.6,122.6 Q132.6,124.6 132.3,126.6 Q131.9,128.7 131.1,130.7 Q130.3,132.8 129.1,134.8 Q127.9,136.8 126.6,138.8 Q125.3,140.9 124.1,142.9 Q123.0,145.0 122.2,147.3 Q121.4,149.5 121.0,152.0 Q120.6,154.5 120.5,157.3 Q120.3,160.2 120.0,163.2 Q119.7,166.3 118.9,169.4 Q118.1,172.5 116.5,175.4 Q114.9,178.3 112.4,180.7 Q109.9,183.2 106.6,185.1 L103.3,187.1" fill="none" stroke="#d83c1a" stroke-width="1.5" stroke-linecap="round"/>
<path d="M141.5,97.5 Q138.6,99.1 137.4,100.0 Q136.1,101.0 135.1,102.1 Q134.1,103.2 133.4,104.5 Q132.6,105.8 132.2,107.2 Q131.7,108.7 131.5,110.2 Q131.3,111.7 131.2,113.3 Q131.2,114.9 131.2,116.6 Q131.2,118.3 131.3,120.0 Q131.3,121.8 131.2,123.6 Q131.1,125.4 130.9,127.3 Q130.6,129.2 130.1,131.2 Q129.7,133.2 129.0,135.2 Q128.3,137.2 127.5,139.3 Q126.6,141.3 125.7,143.4 Q124.8,145.5 123.9,147.6 Q123.0,149.7 122.2,151.8 Q121.3,154.0 120.6,156.2 Q119.9,158.4 119.3,160.9 Q118.7,163.3 118.2,165.9 Q117.6,168.5 117.0,171.3 Q116.3,174.1 115.4,177.2 Q114.6,180.2 113.3,183.3 Q112.0,186.4 110.1,189.4 L108.3,192.5" fill="none" stroke="#ee7444" stroke-width="2.7" stroke-linecap="round"/>
<path d="M141.9,98.0 Q138.8,99.1 137.5,99.9 Q136.2,100.7 135.2,101.6 Q134.1,102.6 133.3,103.7 Q132.5,104.8 131.8,106.1 Q131.2,107.3 130.7,108.6 Q130.2,110.0 129.8,111.4 Q129.3,112.9 128.9,114.4 Q128.4,116.0 127.9,117.6 Q127.4,119.3 126.9,121.0 Q126.4,122.8 125.8,124.7 Q125.2,126.5 124.7,128.5 Q124.1,130.5 123.6,132.6 Q123.1,134.7 122.6,136.8 Q122.2,139.0 121.9,141.3 Q121.6,143.6 121.4,146.0 Q121.1,148.4 121.0,150.9 Q120.8,153.4 120.5,156.1 Q120.3,158.7 119.9,161.5 Q119.5,164.3 118.8,167.1 Q118.1,169.9 117.0,172.8 Q115.9,175.6 114.3,178.4 Q112.8,181.2 110.8,183.8 Q108.8,186.5 106.4,189.1 L104.0,191.6" fill="none" stroke="#e0502a" stroke-width="2.2" stroke-linecap="round"/>
<path d="M143.3,101.3 Q140.5,102.9 139.4,103.9 Q138.2,104.9 137.4,106.0 Q136.5,107.2 135.8,108.4 Q135.2,109.6 134.7,110.9 Q134.2,112.1 133.7,113.4 Q133.3,114.7 132.8,116.1 Q132.4,117.4 131.8,118.8 Q131.3,120.2 130.6,121.7 Q130.0,123.2 129.2,124.8 Q128.5,126.3 127.7,128.0 Q126.9,129.6 126.1,131.4 Q125.4,133.1 124.7,135.0 Q124.0,136.8 123.5,138.7 Q123.0,140.7 122.7,142.7 Q122.4,144.8 122.3,147.0 Q122.1,149.2 122.1,151.6 Q122.1,154.0 122.0,156.6 Q122.0,159.2 121.8,161.9 Q121.6,164.7 121.0,167.5 Q120.5,170.4 119.5,173.3 Q118.5,176.1 117.0,178.9 Q115.5,181.7 113.4,184.4 Q111.2,187.0 108.5,189.5 L105.9,192.0" fill="none" stroke="#c82a12" stroke-width="1.7" stroke-linecap="round"/>
<path d="M142.4,102.4 Q139.7,103.8 138.7,104.6 Q137.6,105.4 136.7,106.4 Q135.9,107.3 135.1,108.3 Q134.4,109.3 133.6,110.4 Q132.9,111.4 132.2,112.7 Q131.5,113.9 130.8,115.3 Q130.1,116.6 129.5,118.2 Q129.0,119.7 128.6,121.4 Q128.2,123.1 128.1,124.9 Q128.0,126.8 128.1,128.7 Q128.2,130.6 128.5,132.7 Q128.8,134.7 129.1,136.9 Q129.5,139.1 129.8,141.4 Q130.0,143.7 130.0,146.1 Q129.9,148.5 129.5,150.9 Q129.0,153.3 128.1,155.8 Q127.2,158.2 125.8,160.6 Q124.4,163.0 122.7,165.4 Q121.0,167.7 119.2,170.0 Q117.3,172.3 115.5,174.7 Q113.7,177.1 112.0,179.7 Q110.3,182.3 108.8,185.2 Q107.3,188.1 105.8,191.4 L104.4,194.6" fill="none" stroke="#e86a3a" stroke-width="1.2" stroke-linecap="round"/>
<path d="M140.8,100.7 Q137.7,102.1 136.4,103.0 Q135.0,103.8 133.8,104.9 Q132.7,105.9 131.8,107.2 Q131.0,108.5 130.5,110.0 Q130.0,111.5 129.8,113.2 Q129.6,114.8 129.5,116.5 Q129.5,118.2 129.3,120.0 Q129.2,121.7 128.8,123.6 Q128.4,125.4 127.8,127.3 Q127.1,129.3 126.4,131.4 Q125.7,133.4 125.1,135.6 Q124.5,137.7 124.3,140.0 Q124.1,142.2 124.4,144.5 Q124.7,146.9 125.4,149.3 Q126.1,151.7 126.8,154.2 Q127.5,156.8 127.8,159.4 Q128.1,162.0 127.7,164.6 Q127.2,167.2 126.0,169.7 Q124.7,172.1 122.9,174.4 Q121.0,176.7 119.0,178.8 Q116.9,180.9 115.2,183.1 Q113.4,185.2 112.2,187.7 Q111.0,190.2 110.2,193.2 L109.4,196.1" fill="none" stroke="#b82010" stroke-width="2.4" stroke-linecap="round"/>
<path d="M142.6,104.3 Q140.2,105.9 139.4,106.8 Q138.5,107.8 138.0,108.8 Q137.5,109.9 137.1,110.9 Q136.7,112.0 136.4,113.0 Q136.0,114.1 135.6,115.2 Q135.1,116.3 134.6,117.6 Q134.1,118.8 133.8,120.2 Q133.4,121.6 133.3,123.1 Q133.2,124.6 133.5,126.1 Q133.8,127.6 134.5,129.2 Q135.2,130.7 136.0,132.4 Q136.9,134.0 137.6,135.8 Q138.3,137.5 138.6,139.5 Q138.9,141.4 138.5,143.4 Q138.2,145.4 137.2,147.4 Q136.2,149.5 134.8,151.4 Q133.5,153.4 132.2,155.4 Q130.8,157.4 129.9,159.5 Q128.9,161.6 128.5,164.1 Q128.0,166.6 127.8,169.5 Q127.7,172.4 127.4,175.7 Q127.1,179.0 126.3,182.4 Q125.4,185.8 123.6,189.0 L121.8,192.2" fill="none" stroke="#d83c1a" stroke-width="1.9" stroke-linecap="round"/>
<path d="M143.4,106.7 Q140.8,108.9 139.8,110.1 Q138.8,111.3 138.1,112.6 Q137.4,113.9 136.7,115.2 Q136.1,116.6 135.5,118.0 Q134.9,119.4 134.4,121.0 Q133.8,122.5 133.5,124.2 Q133.2,125.9 133.1,127.7 Q133.1,129.5 133.4,131.3 Q133.7,133.2 134.3,135.1 Q134.8,137.0 135.4,139.0 Q136.0,141.0 136.4,143.0 Q136.8,145.1 136.8,147.3 Q136.8,149.4 136.3,151.7 Q135.8,153.9 135.0,156.1 Q134.1,158.3 133.2,160.5 Q132.3,162.7 131.6,164.9 Q130.9,167.1 130.5,169.5 Q130.2,171.9 130.1,174.5 Q130.0,177.1 129.8,180.0 Q129.7,182.8 129.0,185.8 Q128.3,188.7 126.8,191.5 Q125.4,194.3 123.0,196.7 Q120.6,199.0 117.4,200.9 L114.3,202.9" fill="none" stroke="#ee7444" stroke-width="1.4" stroke-linecap="round"/>
<path d="M143.4,108.6 Q140.9,110.3 139.9,111.2 Q138.8,112.1 138.0,113.1 Q137.1,114.1 136.3,115.2 Q135.6,116.4 134.9,117.6 Q134.3,118.9 133.9,120.3 Q133.4,121.7 133.2,123.3 Q133.0,124.8 133.1,126.4 Q133.1,128.1 133.4,129.8 Q133.8,131.5 134.3,133.2 Q134.8,135.0 135.3,136.8 Q135.9,138.7 136.4,140.6 Q137.0,142.5 137.3,144.5 Q137.6,146.6 137.7,148.7 Q137.7,150.8 137.5,153.0 Q137.2,155.2 136.5,157.4 Q135.9,159.7 135.1,161.9 Q134.2,164.1 133.3,166.3 Q132.3,168.5 131.4,170.7 Q130.6,172.9 129.8,175.1 Q129.1,177.4 128.5,179.8 Q128.0,182.2 127.5,184.8 Q127.1,187.5 126.5,190.4 Q126.0,193.2 125.2,196.3 L124.4,199.4" fill="none" stroke="#e0502a" stroke-width="2.5" stroke-linecap="round"/>
<path d="M144.5,108.0 Q141.1,109.8 139.8,110.8 Q138.4,111.9 137.5,113.1 Q136.5,114.3 135.8,115.5 Q135.1,116.7 134.6,118.0 Q134.0,119.2 133.5,120.5 Q133.0,121.8 132.5,123.1 Q132.0,124.5 131.5,126.0 Q131.0,127.5 130.8,129.1 Q130.6,130.7 130.7,132.4 Q130.8,134.1 131.2,135.9 Q131.7,137.6 132.4,139.4 Q133.0,141.2 133.7,143.0 Q134.4,144.9 134.8,146.9 Q135.3,148.9 135.2,151.0 Q135.2,153.1 134.6,155.2 Q134.1,157.4 133.2,159.6 Q132.3,161.8 131.4,163.9 Q130.4,166.1 129.8,168.4 Q129.1,170.6 128.7,173.1 Q128.4,175.5 128.3,178.2 Q128.2,181.0 128.0,184.0 Q127.8,187.0 127.1,190.1 Q126.3,193.2 124.7,196.2 L123.1,199.2" fill="none" stroke="#c82a12" stroke-width="2.0" stroke-linecap="round"/>
<path d="M168.6,79.2 Q172.0,80.7 173.7,81.4 Q175.4,82.1 177.0,82.9 Q178.7,83.7 180.3,84.6 Q181.9,85.5 183.5,86.5 Q185.0,87.5 186.5,88.7 Q187.9,89.8 189.2,91.2 Q190.5,92.6 191.7,94.1 Q192.8,95.7 193.9,97.3 Q194.9,98.9 196.0,100.6 Q197.0,102.3 198.1,104.0 Q199.1,105.6 200.3,107.3 Q201.6,108.9 202.9,110.5 Q204.3,112.1 205.8,113.7 Q207.3,115.4 208.7,117.1 Q210.2,118.8 211.6,120.7 Q212.9,122.6 214.0,124.6 Q215.1,126.7 215.9,129.0 Q216.7,131.3 217.1,133.7 Q217.6,136.2 217.8,138.7 Q218.1,141.3 218.3,143.9 Q218.5,146.5 218.9,149.1 Q219.2,151.7 220.0,154.2 Q220.7,156.8 221.8,159.3 L222.9,161.7" fill="none" stroke="#e86a3a" stroke-width="1.5" stroke-linecap="round"/>
<path d="M169.4,79.1 Q172.9,80.4 174.5,81.2 Q176.1,82.0 177.7,82.9 Q179.3,83.8 180.8,84.7 Q182.3,85.6 183.8,86.6 Q185.3,87.6 186.7,88.5 Q188.2,89.5 189.7,90.4 Q191.2,91.4 192.8,92.4 Q194.3,93.4 195.8,94.5 Q197.3,95.6 198.7,96.9 Q200.0,98.2 201.3,99.7 Q202.5,101.2 203.5,102.9 Q204.5,104.6 205.3,106.5 Q206.1,108.4 206.7,110.4 Q207.3,112.4 207.9,114.5 Q208.5,116.5 209.1,118.6 Q209.8,120.7 210.6,122.8 Q211.4,125.0 212.4,127.1 Q213.5,129.2 214.7,131.5 Q215.9,133.7 217.2,136.0 Q218.5,138.4 219.8,140.9 Q221.0,143.5 222.0,146.2 Q223.0,149.0 223.5,151.9 Q224.1,154.9 224.3,158.1 L224.4,161.2" fill="none" stroke="#b82010" stroke-width="2.7" stroke-linecap="round"/>
<path d="M174.6,80.4 Q177.7,81.8 179.1,82.7 Q180.6,83.6 181.9,84.6 Q183.2,85.7 184.4,86.8 Q185.6,88.0 186.8,89.2 Q188.0,90.4 189.3,91.6 Q190.5,92.8 191.8,94.0 Q193.1,95.3 194.5,96.6 Q195.8,98.0 197.1,99.4 Q198.4,100.9 199.6,102.5 Q200.7,104.2 201.6,106.0 Q202.6,107.8 203.2,109.9 Q203.8,111.9 204.1,114.1 Q204.5,116.2 204.7,118.5 Q204.9,120.7 205.1,123.0 Q205.2,125.3 205.6,127.6 Q206.0,129.9 206.6,132.1 Q207.2,134.4 208.2,136.6 Q209.2,138.8 210.5,141.0 Q211.7,143.2 213.1,145.5 Q214.5,147.8 215.8,150.2 Q217.0,152.5 217.9,155.0 Q218.9,157.5 219.3,160.1 Q219.7,162.8 219.6,165.5 L219.6,168.2" fill="none" stroke="#d83c1a" stroke-width="2.2" stroke-linecap="round"/>
<path d="M174.2,80.9 Q177.2,82.2 178.8,82.9 Q180.3,83.5 181.9,84.2 Q183.4,84.9 184.9,85.7 Q186.4,86.6 187.7,87.6 Q189.1,88.7 190.3,90.0 Q191.5,91.2 192.6,92.7 Q193.6,94.1 194.6,95.6 Q195.6,97.1 196.7,98.6 Q197.7,100.0 199.0,101.4 Q200.2,102.8 201.6,104.1 Q203.0,105.4 204.6,106.7 Q206.2,108.0 207.8,109.5 Q209.4,111.0 210.8,112.7 Q212.2,114.4 213.2,116.4 Q214.2,118.4 214.7,120.7 Q215.1,123.0 215.2,125.5 Q215.2,128.0 215.1,130.6 Q214.9,133.2 214.8,135.8 Q214.7,138.4 215.0,141.0 Q215.2,143.6 216.0,146.1 Q216.8,148.7 218.2,151.3 Q219.5,154.0 221.0,156.8 Q222.6,159.5 224.1,162.5 L225.5,165.5" fill="none" stroke="#ee7444" stroke-width="1.7" stroke-linecap="round"/>
<path d="M176.5,80.2 Q179.7,81.5 181.3,82.2 Q182.8,82.9 184.3,83.8 Q185.8,84.7 187.2,85.7 Q188.6,86.7 189.8,87.9 Q191.1,89.1 192.2,90.5 Q193.4,91.8 194.4,93.3 Q195.4,94.8 196.3,96.4 Q197.3,97.9 198.1,99.6 Q199.0,101.2 200.0,102.9 Q200.9,104.5 201.8,106.2 Q202.8,107.9 203.9,109.7 Q205.0,111.4 206.1,113.2 Q207.3,115.0 208.4,116.9 Q209.6,118.8 210.8,120.7 Q211.9,122.7 213.0,124.9 Q214.0,127.0 214.8,129.2 Q215.7,131.5 216.3,133.9 Q216.8,136.3 217.2,138.8 Q217.5,141.3 217.6,144.0 Q217.7,146.6 217.7,149.3 Q217.6,152.0 217.5,154.8 Q217.4,157.5 217.5,160.3 Q217.5,163.1 217.7,165.9 L217.9,168.7" fill="none" stroke="#e0502a" stroke-width="1.2" stroke-linecap="round"/>
<path d="M179.3,85.1 Q182.7,86.6 184.2,87.5 Q185.7,88.4 187.0,89.4 Q188.4,90.3 189.7,91.3 Q191.1,92.2 192.4,93.2 Q193.8,94.2 195.1,95.2 Q196.4,96.3 197.6,97.5 Q198.9,98.8 199.8,100.2 Q200.7,101.7 201.3,103.5 Q201.8,105.2 202.1,107.1 Q202.3,109.0 202.4,111.0 Q202.5,112.9 202.8,114.9 Q203.0,116.8 203.6,118.8 Q204.3,120.7 205.3,122.7 Q206.3,124.7 207.5,126.7 Q208.7,128.8 209.9,131.0 Q211.1,133.2 211.8,135.6 Q212.5,138.0 212.6,140.5 Q212.7,143.1 212.2,145.8 Q211.7,148.6 210.9,151.4 Q210.1,154.3 209.5,157.2 Q208.9,160.1 208.9,163.1 Q208.9,166.1 209.7,169.0 Q210.5,172.0 212.0,175.0 L213.6,178.0" fill="none" stroke="#c82a12" stroke-width="2.4" stroke-linecap="round"/>
<path d="M180.5,86.2 Q183.8,87.6 185.4,88.5 Q186.9,89.4 188.3,90.4 Q189.7,91.4 191.0,92.5 Q192.2,93.7 193.5,94.9 Q194.7,96.1 195.8,97.4 Q197.0,98.7 198.2,100.0 Q199.4,101.3 200.5,102.8 Q201.7,104.2 202.9,105.7 Q204.0,107.2 205.1,108.8 Q206.2,110.5 207.1,112.3 Q208.0,114.1 208.8,116.0 Q209.5,117.9 210.0,120.0 Q210.5,122.1 210.9,124.2 Q211.2,126.4 211.3,128.6 Q211.5,130.9 211.6,133.2 Q211.7,135.5 211.8,137.8 Q211.9,140.1 212.2,142.5 Q212.4,144.8 212.9,147.2 Q213.3,149.6 213.9,152.0 Q214.6,154.4 215.3,156.8 Q216.1,159.3 217.0,161.8 Q217.8,164.3 218.5,166.9 Q219.3,169.4 219.8,172.0 L220.3,174.7" fill="none" stroke="#e86a3a" stroke-width="1.9" stroke-linecap="round"/>
<path d="M181.7,84.3 Q184.8,85.7 186.2,86.6 Q187.6,87.5 188.7,88.4 Q189.9,89.4 191.0,90.5 Q192.0,91.5 193.0,92.6 Q193.9,93.8 194.9,94.9 Q195.8,96.1 196.7,97.4 Q197.5,98.7 198.4,100.1 Q199.2,101.6 200.0,103.1 Q200.8,104.7 201.4,106.3 Q202.1,108.0 202.5,109.9 Q203.0,111.7 203.3,113.6 Q203.6,115.6 203.7,117.7 Q203.8,119.7 203.8,121.9 Q203.8,124.1 203.6,126.4 Q203.5,128.7 203.3,131.0 Q203.2,133.4 203.1,135.9 Q203.1,138.4 203.2,140.9 Q203.3,143.5 203.7,146.1 Q204.1,148.7 204.7,151.4 Q205.4,154.1 206.4,156.8 Q207.3,159.6 208.5,162.4 Q209.7,165.1 211.0,167.9 Q212.3,170.8 213.7,173.7 L215.0,176.5" fill="none" stroke="#b82010" stroke-width="1.4" stroke-linecap="round"/>
<path d="M185.3,87.2 Q188.3,88.6 189.7,89.3 Q191.1,90.1 192.4,91.0 Q193.7,91.9 194.9,93.0 Q196.1,94.1 197.0,95.4 Q198.0,96.7 198.6,98.2 Q199.3,99.7 199.7,101.3 Q200.2,102.9 200.5,104.6 Q200.9,106.3 201.4,108.0 Q201.8,109.7 202.5,111.5 Q203.2,113.2 204.0,115.0 Q204.9,116.8 205.8,118.7 Q206.8,120.7 207.5,122.7 Q208.3,124.8 208.7,126.9 Q209.1,129.1 209.1,131.4 Q209.1,133.8 208.7,136.2 Q208.3,138.6 207.8,141.1 Q207.3,143.6 207.0,146.1 Q206.8,148.6 207.1,151.2 Q207.4,153.7 208.2,156.2 Q209.1,158.7 210.5,161.2 Q211.8,163.7 213.2,166.2 Q214.7,168.6 215.8,171.2 Q217.0,173.7 217.6,176.4 L218.1,179.1" fill="none" stroke="#d83c1a" stroke-width="2.5" stroke-linecap="round"/>
<path d="M185.0,87.1 Q188.1,88.4 189.6,89.2 Q191.0,90.0 192.3,91.1 Q193.7,92.1 194.8,93.3 Q195.9,94.6 196.8,96.0 Q197.7,97.5 198.4,99.1 Q199.1,100.8 199.6,102.5 Q200.0,104.3 200.4,106.2 Q200.7,108.1 201.0,110.0 Q201.3,112.0 201.6,114.0 Q202.0,116.0 202.4,118.1 Q202.8,120.2 203.4,122.4 Q204.0,124.6 204.7,126.9 Q205.4,129.2 206.0,131.6 Q206.7,134.0 207.3,136.5 Q207.9,139.0 208.3,141.5 Q208.7,144.1 208.8,146.7 Q208.9,149.4 208.7,152.0 Q208.5,154.7 208.0,157.4 Q207.4,160.1 206.8,162.9 Q206.1,165.6 205.4,168.4 Q204.7,171.2 204.2,174.0 Q203.6,176.8 203.4,179.6 Q203.2,182.4 203.5,185.2 L203.7,188.0" fill="none" stroke="#ee7444" stroke-width="2.0" stroke-linecap="round"/>
<path d="M187.2,89.7 Q190.1,91.0 191.3,91.9 Q192.6,92.8 193.6,93.8 Q194.7,94.9 195.5,96.2 Q196.4,97.4 197.0,98.8 Q197.6,100.2 198.1,101.8 Q198.6,103.3 199.1,104.9 Q199.6,106.5 200.2,108.2 Q200.7,109.8 201.3,111.6 Q201.9,113.4 202.5,115.3 Q203.2,117.2 203.7,119.3 Q204.2,121.3 204.5,123.4 Q204.9,125.6 204.9,127.8 Q204.9,130.1 204.7,132.4 Q204.5,134.7 204.1,137.1 Q203.7,139.5 203.3,141.9 Q202.9,144.4 202.7,146.9 Q202.5,149.4 202.6,151.9 Q202.8,154.5 203.3,157.0 Q203.9,159.6 204.7,162.1 Q205.6,164.7 206.6,167.2 Q207.5,169.8 208.4,172.3 Q209.3,174.8 209.9,177.4 Q210.5,180.0 210.7,182.6 L211.0,185.3" fill="none" stroke="#e0502a" stroke-width="1.5" stroke-linecap="round"/>
<path d="M187.7,91.2 Q190.8,92.6 192.2,93.5 Q193.5,94.4 194.5,95.5 Q195.5,96.7 196.3,98.0 Q197.1,99.3 197.6,100.7 Q198.2,102.2 198.6,103.7 Q199.0,105.2 199.4,106.9 Q199.8,108.5 200.2,110.3 Q200.6,112.0 201.0,113.9 Q201.5,115.8 201.9,117.8 Q202.3,119.8 202.7,121.9 Q203.0,124.1 203.2,126.3 Q203.4,128.6 203.4,130.9 Q203.4,133.2 203.1,135.5 Q202.9,137.9 202.3,140.3 Q201.8,142.7 201.2,145.1 Q200.5,147.6 199.8,150.1 Q199.1,152.6 198.6,155.1 Q198.1,157.7 197.8,160.3 Q197.6,162.9 197.7,165.6 Q197.9,168.2 198.5,170.8 Q199.1,173.4 200.1,175.9 Q201.1,178.5 202.3,180.9 Q203.6,183.3 205.0,185.6 L206.3,187.9" fill="none" stroke="#c82a12" stroke-width="2.7" stroke-linecap="round"/>
<path d="M188.8,93.0 Q192.3,94.3 193.8,95.2 Q195.3,96.0 196.5,97.1 Q197.7,98.1 198.6,99.4 Q199.5,100.6 200.2,101.9 Q200.8,103.3 201.4,104.7 Q201.9,106.1 202.4,107.6 Q203.0,109.1 203.5,110.7 Q204.1,112.4 204.6,114.1 Q205.1,115.9 205.4,117.8 Q205.7,119.7 205.8,121.8 Q205.8,123.8 205.5,126.0 Q205.2,128.1 204.6,130.3 Q204.0,132.5 203.3,134.8 Q202.6,137.0 202.0,139.4 Q201.4,141.8 201.2,144.3 Q200.9,146.8 201.0,149.4 Q201.2,152.0 201.6,154.7 Q202.0,157.4 202.4,160.2 Q202.9,162.9 203.2,165.7 Q203.4,168.5 203.3,171.3 Q203.2,174.1 202.7,177.0 Q202.2,179.9 201.6,182.9 Q200.9,185.8 200.4,189.0 L200.0,192.1" fill="none" stroke="#e86a3a" stroke-width="2.2" stroke-linecap="round"/>
<path d="M188.3,99.7 Q191.0,101.2 192.2,102.1 Q193.3,103.0 194.3,104.1 Q195.2,105.1 196.1,106.2 Q197.0,107.4 197.8,108.7 Q198.6,109.9 199.4,111.3 Q200.1,112.8 200.7,114.4 Q201.3,115.9 201.7,117.7 Q202.2,119.4 202.3,121.3 Q202.5,123.2 202.5,125.2 Q202.4,127.2 202.1,129.2 Q201.9,131.3 201.5,133.5 Q201.1,135.6 200.7,137.8 Q200.4,140.1 200.1,142.4 Q199.8,144.7 199.8,147.1 Q199.8,149.5 200.0,151.9 Q200.2,154.4 200.7,156.9 Q201.2,159.5 201.8,162.0 Q202.4,164.6 203.1,167.2 Q203.7,169.8 204.2,172.3 Q204.8,174.9 205.1,177.6 Q205.4,180.2 205.4,182.9 Q205.4,185.6 205.3,188.4 Q205.1,191.1 204.9,194.0 L204.7,196.9" fill="none" stroke="#b82010" stroke-width="1.7" stroke-linecap="round"/>
<path d="M190.6,101.8 Q193.9,103.2 195.4,104.1 Q196.8,104.9 198.2,105.8 Q199.5,106.8 200.5,108.0 Q201.6,109.2 202.4,110.6 Q203.2,112.0 203.7,113.6 Q204.1,115.2 204.3,116.9 Q204.4,118.6 204.4,120.4 Q204.4,122.2 204.3,124.1 Q204.3,125.9 204.4,127.9 Q204.4,129.9 204.7,132.0 Q205.0,134.0 205.4,136.2 Q205.9,138.5 206.3,140.8 Q206.7,143.1 207.0,145.5 Q207.2,147.9 207.1,150.4 Q207.0,152.8 206.4,155.3 Q205.9,157.8 205.0,160.3 Q204.2,162.8 203.2,165.3 Q202.2,167.9 201.4,170.6 Q200.6,173.2 200.3,175.9 Q200.0,178.7 200.3,181.4 Q200.6,184.2 201.6,186.9 Q202.5,189.6 203.8,192.3 Q205.2,194.9 206.6,197.4 L207.9,200.0" fill="none" stroke="#d83c1a" stroke-width="1.2" stroke-linecap="round"/>
<path d="M188.0,100.7 Q191.4,102.1 192.8,103.0 Q194.1,104.0 195.2,105.1 Q196.3,106.2 197.2,107.5 Q198.0,108.8 198.6,110.2 Q199.3,111.6 199.8,113.1 Q200.4,114.6 200.9,116.2 Q201.3,117.8 201.7,119.6 Q202.1,121.4 202.4,123.4 Q202.7,125.3 202.8,127.4 Q202.9,129.4 202.8,131.6 Q202.7,133.8 202.4,136.0 Q202.1,138.2 201.5,140.5 Q201.0,142.8 200.3,145.2 Q199.7,147.5 199.0,149.9 Q198.3,152.3 197.7,154.8 Q197.1,157.3 196.8,159.9 Q196.4,162.4 196.3,165.1 Q196.2,167.7 196.4,170.4 Q196.6,173.0 197.0,175.7 Q197.5,178.4 198.0,181.0 Q198.5,183.6 199.0,186.2 Q199.4,188.8 199.8,191.4 Q200.2,194.0 200.4,196.5 L200.6,199.1" fill="none" stroke="#ee7444" stroke-width="2.4" stroke-linecap="round"/>
<path d="M189.6,105.4 Q192.2,106.9 193.2,107.8 Q194.3,108.7 195.2,109.7 Q196.1,110.7 196.9,111.7 Q197.7,112.8 198.4,114.1 Q199.1,115.3 199.6,116.8 Q200.1,118.2 200.2,119.8 Q200.4,121.4 200.3,123.1 Q200.1,124.8 199.7,126.6 Q199.3,128.4 198.8,130.3 Q198.3,132.2 197.9,134.2 Q197.5,136.1 197.3,138.3 Q197.2,140.4 197.3,142.6 Q197.4,144.9 197.7,147.3 Q198.0,149.6 198.4,152.1 Q198.7,154.5 198.8,157.0 Q198.8,159.5 198.5,162.0 Q198.2,164.5 197.6,167.1 Q196.9,169.6 196.1,172.3 Q195.2,174.9 194.5,177.7 Q193.8,180.5 193.5,183.3 Q193.3,186.2 193.8,189.1 Q194.3,191.9 195.4,194.7 Q196.6,197.5 198.3,200.2 L199.9,202.9" fill="none" stroke="#e0502a" stroke-width="1.9" stroke-linecap="round"/>
<path d="M188.9,105.8 Q191.7,107.3 192.7,108.2 Q193.8,109.1 194.5,110.2 Q195.3,111.3 195.9,112.5 Q196.4,113.7 196.9,115.0 Q197.3,116.2 197.7,117.6 Q198.2,119.0 198.6,120.5 Q199.1,122.1 199.5,123.8 Q200.0,125.5 200.3,127.4 Q200.7,129.2 200.8,131.3 Q200.9,133.3 200.8,135.4 Q200.7,137.5 200.2,139.7 Q199.7,141.9 198.9,144.1 Q198.1,146.3 197.2,148.6 Q196.2,150.9 195.2,153.3 Q194.1,155.7 193.3,158.3 Q192.4,160.8 191.9,163.5 Q191.3,166.1 191.2,168.9 Q191.1,171.7 191.5,174.6 Q191.9,177.5 192.7,180.5 Q193.5,183.4 194.5,186.4 Q195.5,189.3 196.5,192.3 Q197.5,195.2 198.2,198.1 Q199.0,201.1 199.4,204.1 L199.7,207.1" fill="none" stroke="#c82a12" stroke-width="1.4" stroke-linecap="round"/>
<path d="M136,140 C146,134 186,134 194,140 C201,152 203,170 200,190 L130,190 C127,170 129,152 136,140 Z" fill="#dc3018"/>
<ellipse cx="165.5" cy="110.5" rx="16.5" ry="21" fill="#f8d6bc" transform="rotate(-10 165.5 110.5)"/>
<path d="M148,102 C150,88 166,82 180,90 C176,92 168,94 160,98 C156,100 152,104 150,112 Z" fill="#e2542a"/>
<path d="M163,104 q3,1.6 6,-0.5 M172,101 q3,1.6 6,-0.5" stroke="#4a2018" stroke-width="1.1" fill="none"/>
<path d="M160,118 q4,2 8,-0.5" stroke="#a03a30" stroke-width="1" fill="none"/>
<ellipse cx="157" cy="113" rx="4.5" ry="3" fill="#f08a78" opacity="0.55"/><ellipse cx="178" cy="110" rx="4" ry="2.8" fill="#f08a78" opacity="0.55"/>
<path d="M159,128 C165,124 175,124 180,131 C183,140 182,158 180,182 L170,182 C170,165 168,150 165,140 C161,136 157,133 159,128 Z" fill="#f4cdb0"/>
<path d="M140,162 C146,156 153,160 153,168 L150,182 L139,180 Z" fill="#f4cdb0"/>
<path d="M130,196 C130,180 148,176 161,186 C170,176 196,178 197,196 C199,215 197,240 187,256 L140,256 C130,240 127,215 130,196 Z" fill="#2a1a1a"/>
<path d="M162,187 L163,250" stroke="#120808" stroke-width="1.2"/>
<path d="M140,195 C140,215 142,235 144,248" stroke="#4a3434" stroke-width="2" fill="none" opacity="0.6"/>
<path d="M143.5,249 C150,247 153,247 155.5,249 C158,262 159,275 158,283 C156,288 144,289 140.5,284 C138,276 140,262 143.5,249 Z" fill="#c82c1a"/>
<path d="M161.5,248 C166,246 171,246 174.7,248 C178,262 182,275 181.3,283 C179,289 165,289 161,284 C159,276 159.5,262 161.5,248 Z" fill="#c82c1a"/>
<path d="M146,256 l7,3 l-7,3 l7,3 l-7,3 l7,3 M165,256 l8,3 l-8,3 l8,3 l-8,3 l8,3" stroke="#5a0e06" stroke-width="0.8" fill="none"/>
<path d="M87.92,91.30 C75.56,86.18 44.48,71.79 42.06,48.78 C40.31,32.11 51.09,22.15 63.62,20.84 C72.81,19.87 79.33,25.60 81.75,32.57 C83.42,24.37 89.44,17.32 98.63,16.36 C112.83,14.86 123.02,23.42 124.77,40.09 C127.19,63.10 98.95,83.72 87.92,91.30Z" fill="url(#bg1)" stroke="#fffaf4" stroke-width="1.68" stroke-opacity="0.85"/>
<ellipse cx="67.2" cy="47.3" rx="14.3" ry="8.4" fill="#ff9a8a" opacity="0.5" filter="url(#rb1)" transform="rotate(-6 84 54)"/>
<ellipse cx="88.3" cy="94.5" rx="6.3" ry="3.8" fill="#d01a0a"/>
<path d="M157.95,38.77 C153.38,36.88 141.92,31.57 141.02,23.07 C140.38,16.92 144.35,13.25 148.98,12.76 C152.37,12.40 154.78,14.52 155.67,17.09 C156.29,14.07 158.51,11.46 161.90,11.11 C167.14,10.56 170.90,13.71 171.55,19.87 C172.44,28.36 162.02,35.97 157.95,38.77Z" fill="url(#bg1)" stroke="#fffaf4" stroke-width="0.70" stroke-opacity="0.85"/>
<ellipse cx="150.3" cy="22.5" rx="5.3" ry="3.1" fill="#ff9a8a" opacity="0.5" filter="url(#rb1)" transform="rotate(-6 156.5 25)"/>
<ellipse cx="158" cy="40" rx="2.3" ry="1.4" fill="#d01a0a"/>
<path d="M216.79,82.46 C209.09,73.12 190.37,48.43 198.22,29.02 C203.90,14.96 216.74,11.58 227.31,15.85 C235.06,18.98 237.83,26.33 236.80,32.93 C241.62,27.09 249.42,24.01 257.17,27.14 C269.15,31.98 273.66,43.14 267.98,57.20 C260.14,76.62 228.82,81.09 216.79,82.46Z" fill="url(#bg1)" stroke="#fffaf4" stroke-width="1.52" stroke-opacity="0.85"/>
<ellipse cx="214.3" cy="44.9" rx="12.9" ry="7.6" fill="#ff9a8a" opacity="0.5" filter="url(#rb1)" transform="rotate(22 229.5 51)"/>
<ellipse cx="216" cy="86" rx="5.7" ry="3.4" fill="#d01a0a"/>
<path d="M47.40,152.50 C43.48,150.37 33.68,144.52 33.68,136.81 C33.68,131.22 37.60,128.30 41.80,128.30 C44.88,128.30 46.84,130.42 47.40,132.82 C48.24,130.16 50.48,128.03 53.56,128.03 C58.32,128.03 61.40,131.22 61.40,136.81 C61.40,144.52 51.32,150.37 47.40,152.50Z" fill="url(#bg1)" stroke="#fffaf4" stroke-width="0.70" stroke-opacity="0.85"/>
<ellipse cx="41.8" cy="137.8" rx="4.8" ry="2.8" fill="#ff9a8a" opacity="0.5" filter="url(#rb1)" transform="rotate(0 47.4 140)"/>
<ellipse cx="48.5" cy="154.5" rx="2.1" ry="1.3" fill="#d01a0a"/>
<path d="M261.80,157.37 C256.76,154.64 244.16,147.11 244.16,137.20 C244.16,130.01 249.20,126.25 254.60,126.25 C258.56,126.25 261.08,128.99 261.80,132.07 C262.88,128.65 265.76,125.91 269.72,125.91 C275.84,125.91 279.80,130.01 279.80,137.20 C279.80,147.11 266.84,154.64 261.80,157.37Z" fill="url(#bg1)" stroke="#fffaf4" stroke-width="0.72" stroke-opacity="0.85"/>
<ellipse cx="254.6" cy="138.4" rx="6.1" ry="3.6" fill="#ff9a8a" opacity="0.5" filter="url(#rb1)" transform="rotate(0 261.8 141.3)"/>
<ellipse cx="260" cy="159" rx="2.7" ry="1.6" fill="#d01a0a"/>
<path d="M51.33,230.13 C45.61,226.35 31.40,216.08 32.44,204.28 C33.19,195.73 39.57,191.78 46.00,192.34 C50.71,192.76 53.42,196.28 53.96,200.01 C55.60,196.06 59.31,193.10 64.03,193.51 C71.31,194.15 75.59,199.44 74.85,207.99 C73.81,219.79 57.61,227.40 51.33,230.13Z" fill="url(#bg1)" stroke="#fffaf4" stroke-width="0.86" stroke-opacity="0.85"/>
<ellipse cx="44.4" cy="207.6" rx="7.3" ry="4.3" fill="#ff9a8a" opacity="0.5" filter="url(#rb1)" transform="rotate(5 53 211)"/>
<ellipse cx="51" cy="232.5" rx="3.2" ry="1.9" fill="#d01a0a"/>
<path d="M131.00,79.95 C127.92,77.53 125.50,75.55 125.50,73.02 C125.50,71.26 126.82,70.05 128.47,70.05 C129.68,70.05 130.56,70.82 131.00,71.81 C131.44,70.82 132.32,70.05 133.53,70.05 C135.18,70.05 136.50,71.26 136.50,73.02 C136.50,75.55 134.08,77.53 131.00,79.95Z" fill="#d81a10"/></svg>
<div class="art" style="left:290.6px;top:564.8px;width:340.4px;height:342.2px;border-radius:7px"><svg width="340.4" height="342.2" viewBox="0 0 340 341" preserveAspectRatio="none" style="display:block"><defs>
<linearGradient id="lbg" x1="0" y1="0" x2="1" y2="0.3"><stop offset="0" stop-color="#3a2822"/><stop offset="0.55" stop-color="#5a3b31"/><stop offset="1" stop-color="#7a5446"/></linearGradient>
<linearGradient id="beam" x1="1" y1="0" x2="0" y2="1"><stop offset="0" stop-color="#d8a890" stop-opacity="0.0"/><stop offset="0.3" stop-color="#d8a48a" stop-opacity="0.85"/><stop offset="0.7" stop-color="#b88070" stop-opacity="0.35"/><stop offset="1" stop-color="#b88070" stop-opacity="0"/></linearGradient>
<filter id="bl12" x="-50%" y="-50%" width="200%" height="200%"><feGaussianBlur stdDeviation="14"/></filter>
<filter id="bl18" x="-50%" y="-50%" width="200%" height="200%"><feGaussianBlur stdDeviation="18"/></filter>
<filter id="bl14" x="-50%" y="-50%" width="200%" height="200%"><feGaussianBlur stdDeviation="12"/></filter>
<filter id="bl2" x="-50%" y="-50%" width="200%" height="200%"><feGaussianBlur stdDeviation="1.5"/></filter>
<linearGradient id="floor" x1="0" y1="0" x2="1" y2="0"><stop offset="0" stop-color="#e07048"/><stop offset="0.4" stop-color="#eca282"/><stop offset="1" stop-color="#f4c4a4"/></linearGradient>
<linearGradient id="fshadow" x1="0" y1="0" x2="1" y2="0"><stop offset="0" stop-color="#6a0806"/><stop offset="0.5" stop-color="#8a1a10" stop-opacity="0.8"/><stop offset="1" stop-color="#c05a40" stop-opacity="0"/></linearGradient>
<radialGradient id="hg" cx="0.45" cy="0.4" r="0.7"><stop offset="0" stop-color="#ff2a18"/><stop offset="0.6" stop-color="#f81410"/><stop offset="1" stop-color="#c80808"/></radialGradient>
<linearGradient id="flapF" x1="0" y1="0" x2="0.3" y2="1"><stop offset="0" stop-color="#f2dccf"/><stop offset="0.6" stop-color="#e4c4b2"/><stop offset="1" stop-color="#cca48e"/></linearGradient>
<linearGradient id="flapL" x1="0" y1="0" x2="1" y2="0.5"><stop offset="0" stop-color="#b89888"/><stop offset="0.45" stop-color="#e0c6b6"/><stop offset="1" stop-color="#cca894"/></linearGradient>
<linearGradient id="flapR" x1="0" y1="0" x2="1" y2="1"><stop offset="0" stop-color="#eedad0"/><stop offset="1" stop-color="#d4b09c"/></linearGradient>
</defs>
<rect width="340" height="341" fill="#553930"/>
<polygon points="0,0 60,0 40,200 0,300" fill="#3a2620" opacity="0.6" filter="url(#bl12)"/>
<polygon points="345,28 345,212 210,238 130,218 190,92" fill="#ac7660" opacity="0.9" filter="url(#bl14)"/>
<ellipse cx="322" cy="115" rx="34" ry="80" fill="#d49c80" opacity="0.9" filter="url(#bl14)"/>
<polygon points="340,212 340,321 250,321 260,240" fill="#7c5040" opacity="0.8" filter="url(#bl12)"/>
<rect x="0" y="323.5" width="340" height="18" fill="url(#floor)"/>
<polygon points="0,323.5 230,323.5 0,335.5" fill="url(#fshadow)"/>
<rect x="0" y="322.5" width="340" height="1.5" fill="#3a1a12" opacity="0.6"/>
<polygon points="67.00,187.50 248.00,153.50 195.30,227.80 187.75,233.50 167.00,229.00" fill="#6a0606"/>
<path d="M101.33,41.77 C89.48,37.16 80.11,33.30 78.26,25.86 C76.97,20.68 80.40,16.04 85.79,14.69 C89.75,13.71 93.19,15.25 95.36,17.81 C96.07,14.54 98.38,11.55 102.34,10.57 C107.74,9.22 112.94,11.71 114.24,16.89 C116.09,24.33 109.63,32.14 101.33,41.77Z" fill="url(#hg)" stroke="#6a0404" stroke-width="0.80"/>
<path d="M97.91,15.80 C99.71,12.25 106.38,9.90 110.67,13.30 C113.71,16.33 114.01,22.10 111.38,26.88" fill="none" stroke="#ffc8b8" stroke-width="2.25" stroke-linecap="round" opacity="0.7"/>
<path d="M97.25,40.73 C88.60,36.69 81.03,32.39 79.42,25.91" fill="none" stroke="#6a0000" stroke-width="1.20" stroke-linecap="round" opacity="0.6"/>
<path d="M168.22,78.36 C150.66,71.87 136.77,66.44 133.85,55.52 C131.81,47.93 136.74,41.01 144.65,38.89 C150.45,37.34 155.56,39.53 158.81,43.24 C159.78,38.40 163.11,33.95 168.91,32.39 C176.82,30.28 184.54,33.80 186.58,41.39 C189.50,52.31 180.19,63.96 168.22,78.36Z" fill="url(#hg)" stroke="#6a0404" stroke-width="1.18"/>
<path d="M162.52,40.21 C165.07,34.95 174.83,31.32 181.23,36.21 C185.79,40.59 186.37,49.08 182.63,56.18" fill="none" stroke="#ffc8b8" stroke-width="3.31" stroke-linecap="round" opacity="0.7"/>
<path d="M162.19,76.92 C149.35,71.20 138.10,65.06 135.56,55.57" fill="none" stroke="#6a0000" stroke-width="1.77" stroke-linecap="round" opacity="0.6"/>
<path d="M236.00,22.76 C229.94,18.48 225.19,14.97 225.19,10.50 C225.19,7.38 227.78,5.24 231.03,5.24 C233.40,5.24 235.13,6.60 236.00,8.35 C236.87,6.60 238.60,5.24 240.97,5.24 C244.22,5.24 246.81,7.38 246.81,10.50 C246.81,14.97 242.06,18.48 236.00,22.76Z" fill="url(#hg)" stroke="#6a0404" stroke-width="0.50"/>
<path d="M237.73,7.58 C239.24,5.82 243.35,5.43 245.30,7.97 C246.60,10.11 245.95,13.42 243.79,15.75" fill="none" stroke="#ffc8b8" stroke-width="1.31" stroke-linecap="round" opacity="0.7"/>
<path d="M233.84,21.59 C229.51,18.09 225.83,14.58 225.83,10.69" fill="none" stroke="#6a0000" stroke-width="0.70" stroke-linecap="round" opacity="0.6"/>
<path d="M58.80,23.74 C56.49,22.11 54.68,20.77 54.68,19.07 C54.68,17.88 55.67,17.06 56.90,17.06 C57.81,17.06 58.47,17.58 58.80,18.25 C59.13,17.58 59.79,17.06 60.70,17.06 C61.93,17.06 62.92,17.88 62.92,19.07 C62.92,20.77 61.11,22.11 58.80,23.74Z" fill="url(#hg)" stroke="#6a0404" stroke-width="0.50"/>
<path d="M83.07,88.60 C71.80,84.44 62.89,80.95 61.02,73.95 C59.71,69.08 62.87,64.64 67.95,63.28 C71.67,62.29 74.95,63.69 77.03,66.07 C77.65,62.97 79.79,60.11 83.51,59.12 C88.58,57.76 93.54,60.02 94.85,64.89 C96.72,71.89 90.75,79.36 83.07,88.60Z" fill="url(#hg)" stroke="#6a0404" stroke-width="0.76"/>
<path d="M79.41,64.13 C81.05,60.75 87.31,58.42 91.42,61.56 C94.34,64.37 94.72,69.82 92.31,74.38" fill="none" stroke="#ffc8b8" stroke-width="2.12" stroke-linecap="round" opacity="0.7"/>
<path d="M79.20,87.68 C70.97,84.01 63.75,80.07 62.11,73.98" fill="none" stroke="#6a0000" stroke-width="1.13" stroke-linecap="round" opacity="0.6"/>
<path d="M264.55,85.24 C253.99,71.08 245.79,59.65 249.09,49.51 C251.38,42.46 258.83,39.52 266.18,41.90 C271.57,43.65 274.48,48.01 275.15,52.62 C278.40,49.29 283.32,47.47 288.71,49.22 C296.06,51.61 300.36,58.37 298.07,65.42 C294.77,75.56 281.42,79.99 264.55,85.24Z" fill="url(#hg)" stroke="#6a0404" stroke-width="1.11"/>
<path d="M279.64,52.13 C284.36,49.27 293.96,51.42 296.50,58.58 C297.86,64.38 293.96,71.40 287.34,75.10" fill="none" stroke="#ffc8b8" stroke-width="3.12" stroke-linecap="round" opacity="0.7"/>
<path d="M260.52,81.00 C253.30,69.88 247.55,59.24 250.41,50.43" fill="none" stroke="#6a0000" stroke-width="1.67" stroke-linecap="round" opacity="0.6"/>
<path d="M116.00,77.62 C112.25,74.97 109.30,72.80 109.30,70.03 C109.30,68.10 110.91,66.78 112.92,66.78 C114.39,66.78 115.46,67.62 116.00,68.71 C116.54,67.62 117.61,66.78 119.08,66.78 C121.09,66.78 122.70,68.10 122.70,70.03 C122.70,72.80 119.75,74.97 116.00,77.62Z" fill="url(#hg)" stroke="#6a0404" stroke-width="0.50"/>
<path d="M117.07,68.22 C118.01,67.14 120.55,66.90 121.76,68.46 C122.56,69.79 122.16,71.84 120.82,73.28" fill="none" stroke="#ffc8b8" stroke-width="0.81" stroke-linecap="round" opacity="0.7"/>
<path d="M114.66,76.90 C111.98,74.73 109.71,72.56 109.71,70.15" fill="none" stroke="#6a0000" stroke-width="0.43" stroke-linecap="round" opacity="0.6"/>
<path d="M205.78,87.66 C201.20,83.78 197.61,80.62 197.93,77.01 C198.15,74.50 200.39,72.96 203.01,73.18 C204.92,73.35 206.22,74.57 206.80,76.05 C207.62,74.70 209.11,73.72 211.03,73.89 C213.65,74.12 215.59,76.03 215.37,78.54 C215.05,82.15 210.97,84.64 205.78,87.66Z" fill="url(#hg)" stroke="#6a0404" stroke-width="0.50"/>
<path d="M208.25,75.54 C209.59,74.24 212.94,74.21 214.33,76.39 C215.22,78.21 214.47,80.83 212.56,82.56" fill="none" stroke="#ffc8b8" stroke-width="1.06" stroke-linecap="round" opacity="0.7"/>
<path d="M204.12,86.57 C200.88,83.44 198.16,80.35 198.44,77.21" fill="none" stroke="#6a0000" stroke-width="0.57" stroke-linecap="round" opacity="0.6"/>
<path d="M55.89,131.77 C44.59,125.95 35.67,121.13 34.60,113.53 C33.86,108.24 37.76,103.99 43.26,103.22 C47.30,102.65 50.57,104.55 52.45,107.32 C53.50,104.14 56.12,101.41 60.16,100.84 C65.66,100.07 70.58,103.08 71.32,108.37 C72.39,115.97 65.15,123.06 55.89,131.77Z" fill="url(#hg)" stroke="#6a0404" stroke-width="0.80"/>
<path d="M55.20,105.58 C57.36,102.25 64.24,100.60 68.15,104.44 C70.86,107.76 70.55,113.53 67.44,118.02" fill="none" stroke="#ffc8b8" stroke-width="2.25" stroke-linecap="round" opacity="0.7"/>
<path d="M51.94,130.30 C43.76,125.39 36.68,120.32 35.75,113.71" fill="none" stroke="#6a0000" stroke-width="1.20" stroke-linecap="round" opacity="0.6"/>
<path d="M131.24,134.15 C117.83,127.82 107.24,122.57 105.68,113.75 C104.60,107.62 108.97,102.50 115.36,101.37 C120.05,100.55 123.93,102.63 126.24,105.78 C127.34,102.03 130.27,98.74 134.96,97.92 C141.35,96.79 147.20,100.11 148.28,106.24 C149.84,115.06 141.68,123.62 131.24,134.15Z" fill="url(#hg)" stroke="#6a0404" stroke-width="0.93"/>
<path d="M129.38,103.65 C131.75,99.67 139.71,97.48 144.42,101.78 C147.72,105.55 147.59,112.29 144.15,117.65" fill="none" stroke="#ffc8b8" stroke-width="2.62" stroke-linecap="round" opacity="0.7"/>
<path d="M126.58,132.60 C116.84,127.21 108.38,121.58 107.03,113.91" fill="none" stroke="#6a0000" stroke-width="1.40" stroke-linecap="round" opacity="0.6"/>
<path d="M199.13,119.97 C192.66,114.49 187.59,110.03 188.04,104.93 C188.35,101.39 191.51,99.21 195.21,99.53 C197.92,99.77 199.75,101.49 200.56,103.57 C201.72,101.66 203.83,100.29 206.54,100.52 C210.23,100.85 212.97,103.54 212.66,107.09 C212.22,112.19 206.45,115.70 199.13,119.97Z" fill="url(#hg)" stroke="#6a0404" stroke-width="0.53"/>
<path d="M202.61,102.86 C204.51,101.01 209.23,100.98 211.19,104.06 C212.45,106.62 211.39,110.33 208.69,112.77" fill="none" stroke="#ffc8b8" stroke-width="1.50" stroke-linecap="round" opacity="0.7"/>
<path d="M196.78,118.43 C192.21,114.01 188.37,109.65 188.76,105.22" fill="none" stroke="#6a0000" stroke-width="0.80" stroke-linecap="round" opacity="0.6"/>
<path d="M254.35,127.45 C247.04,119.53 241.34,113.12 242.69,106.76 C243.63,102.33 247.97,100.07 252.58,101.05 C255.96,101.77 258.00,104.23 258.70,106.98 C260.46,104.75 263.33,103.34 266.71,104.06 C271.32,105.04 274.36,108.86 273.42,113.29 C272.07,119.65 264.25,123.19 254.35,127.45Z" fill="url(#hg)" stroke="#6a0404" stroke-width="0.68"/>
<path d="M261.40,106.40 C264.08,104.36 270.03,105.05 272.04,109.24 C273.23,112.67 271.31,117.17 267.53,119.84" fill="none" stroke="#ffc8b8" stroke-width="1.91" stroke-linecap="round" opacity="0.7"/>
<path d="M251.63,125.13 C246.55,118.85 242.38,112.76 243.56,107.23" fill="none" stroke="#6a0000" stroke-width="1.02" stroke-linecap="round" opacity="0.6"/>
<path d="M96.13,156.20 C85.33,152.84 76.78,150.00 74.68,143.51 C73.21,139.00 75.96,134.67 80.67,133.15 C84.11,132.03 87.26,133.19 89.34,135.32 C89.77,132.37 91.64,129.58 95.08,128.46 C99.79,126.93 104.56,128.82 106.02,133.33 C108.13,139.82 102.89,147.14 96.13,156.20Z" fill="url(#hg)" stroke="#6a0404" stroke-width="0.71"/>
<path d="M91.48,133.38 C92.85,130.12 98.62,127.62 102.64,130.37 C105.53,132.87 106.14,137.97 104.11,142.37" fill="none" stroke="#ffc8b8" stroke-width="2.00" stroke-linecap="round" opacity="0.7"/>
<path d="M92.44,155.52 C84.52,152.48 77.54,149.13 75.71,143.49" fill="none" stroke="#6a0000" stroke-width="1.07" stroke-linecap="round" opacity="0.6"/>
<path d="M156.00,100.59 C152.83,98.35 150.34,96.51 150.34,94.16 C150.34,92.53 151.69,91.41 153.39,91.41 C154.64,91.41 155.55,92.13 156.00,93.04 C156.45,92.13 157.36,91.41 158.61,91.41 C160.31,91.41 161.66,92.53 161.66,94.16 C161.66,96.51 159.17,98.35 156.00,100.59Z" fill="url(#hg)" stroke="#6a0404" stroke-width="0.50"/>
<path d="M175.00,111.59 C171.83,109.35 169.34,107.51 169.34,105.16 C169.34,103.53 170.69,102.41 172.39,102.41 C173.64,102.41 174.55,103.13 175.00,104.04 C175.45,103.13 176.36,102.41 177.61,102.41 C179.31,102.41 180.66,103.53 180.66,105.16 C180.66,107.51 178.17,109.35 175.00,111.59Z" fill="url(#hg)" stroke="#6a0404" stroke-width="0.50"/>
<path d="M86.00,129.09 C82.83,126.85 80.33,125.01 80.33,122.66 C80.33,121.03 81.69,119.91 83.39,119.91 C84.64,119.91 85.55,120.63 86.00,121.54 C86.45,120.63 87.36,119.91 88.61,119.91 C90.31,119.91 91.67,121.03 91.67,122.66 C91.67,125.01 89.17,126.85 86.00,129.09Z" fill="url(#hg)" stroke="#6a0404" stroke-width="0.50"/>
<path d="M153.80,129.59 C150.63,127.35 148.14,125.51 148.14,123.16 C148.14,121.53 149.49,120.41 151.19,120.41 C152.44,120.41 153.35,121.13 153.80,122.04 C154.25,121.13 155.16,120.41 156.41,120.41 C158.11,120.41 159.47,121.53 159.47,123.16 C159.47,125.51 156.97,127.35 153.80,129.59Z" fill="url(#hg)" stroke="#6a0404" stroke-width="0.50"/>
<path d="M172.80,129.17 C169.92,127.13 167.65,125.46 167.65,123.33 C167.65,121.85 168.89,120.83 170.43,120.83 C171.56,120.83 172.39,121.48 172.80,122.31 C173.21,121.48 174.04,120.83 175.17,120.83 C176.71,120.83 177.95,121.85 177.95,123.33 C177.95,125.46 175.68,127.13 172.80,129.17Z" fill="url(#hg)" stroke="#6a0404" stroke-width="0.50"/>
<path d="M213.04,165.73 C200.84,156.10 191.26,148.25 191.76,138.88 C192.10,132.37 197.76,128.17 204.55,128.53 C209.53,128.79 213.00,131.83 214.62,135.59 C216.62,132.02 220.39,129.36 225.37,129.62 C232.16,129.97 237.35,134.74 237.01,141.25 C236.52,150.62 226.18,157.43 213.04,165.73Z" fill="url(#hg)" stroke="#6a0404" stroke-width="0.98"/>
<path d="M218.33,134.15 C221.69,130.65 230.33,130.28 234.12,135.79 C236.60,140.42 234.88,147.27 230.10,151.92" fill="none" stroke="#ffc8b8" stroke-width="2.75" stroke-linecap="round" opacity="0.7"/>
<path d="M208.64,163.05 C199.97,155.24 192.66,147.51 193.09,139.36" fill="none" stroke="#6a0000" stroke-width="1.47" stroke-linecap="round" opacity="0.6"/>
<path d="M277.38,155.23 C272.16,149.96 268.08,145.68 268.86,141.27 C269.40,138.20 272.33,136.55 275.52,137.11 C277.87,137.52 279.33,139.16 279.88,141.04 C281.04,139.47 282.98,138.42 285.32,138.84 C288.52,139.40 290.70,141.96 290.16,145.03 C289.38,149.44 284.09,152.06 277.38,155.23Z" fill="url(#hg)" stroke="#6a0404" stroke-width="0.50"/>
<path d="M281.72,140.57 C283.51,139.11 287.63,139.44 289.11,142.27 C290.01,144.61 288.80,147.75 286.26,149.68" fill="none" stroke="#ffc8b8" stroke-width="1.31" stroke-linecap="round" opacity="0.7"/>
<path d="M275.45,153.70 C271.80,149.50 268.79,145.41 269.46,141.58" fill="none" stroke="#6a0000" stroke-width="0.70" stroke-linecap="round" opacity="0.6"/>
<path d="M43.63,162.98 C38.20,160.42 33.91,158.30 33.29,154.73 C32.85,152.24 34.62,150.17 37.20,149.72 C39.10,149.38 40.67,150.22 41.61,151.50 C42.05,149.98 43.24,148.65 45.13,148.32 C47.72,147.86 50.09,149.20 50.53,151.69 C51.16,155.26 47.86,158.72 43.63,162.98Z" fill="url(#hg)" stroke="#6a0404" stroke-width="0.50"/>
<path d="M42.88,150.64 C43.84,149.03 47.06,148.14 48.97,149.88 C50.30,151.41 50.25,154.14 48.85,156.30" fill="none" stroke="#ffc8b8" stroke-width="1.06" stroke-linecap="round" opacity="0.7"/>
<path d="M41.74,162.36 C37.80,160.17 34.38,157.89 33.83,154.79" fill="none" stroke="#6a0000" stroke-width="0.57" stroke-linecap="round" opacity="0.6"/>
<path d="M37.80,178.80 C34.48,176.45 31.88,174.53 31.88,172.08 C31.88,170.38 33.30,169.20 35.08,169.20 C36.38,169.20 37.33,169.95 37.80,170.91 C38.27,169.95 39.22,169.20 40.52,169.20 C42.30,169.20 43.72,170.38 43.72,172.08 C43.72,174.53 41.12,176.45 37.80,178.80Z" fill="url(#hg)" stroke="#6a0404" stroke-width="0.50"/>
<path d="M113.69,195.69 C97.87,191.96 85.33,188.75 81.66,179.66 C79.10,173.33 82.62,166.85 89.21,164.19 C94.04,162.24 98.67,163.59 101.87,166.43 C102.19,162.17 104.58,157.98 109.42,156.03 C116.01,153.36 123.03,155.58 125.59,161.91 C129.26,171.00 122.47,182.02 113.69,195.69Z" fill="url(#hg)" stroke="#6a0404" stroke-width="1.02"/>
<path d="M104.74,163.43 C106.38,158.63 114.41,154.47 120.44,158.01 C124.83,161.30 126.23,168.55 123.75,175.07" fill="none" stroke="#ffc8b8" stroke-width="2.88" stroke-linecap="round" opacity="0.7"/>
<path d="M108.34,195.09 C96.68,191.53 86.33,187.43 83.14,179.52" fill="none" stroke="#6a0000" stroke-width="1.53" stroke-linecap="round" opacity="0.6"/>
<path d="M163.70,188.51 C148.41,177.70 136.40,168.86 136.40,157.56 C136.40,149.70 142.96,144.29 151.14,144.29 C157.15,144.29 161.52,147.73 163.70,152.15 C165.88,147.73 170.25,144.29 176.26,144.29 C184.44,144.29 191.00,149.70 191.00,157.56 C191.00,168.86 178.99,177.70 163.70,188.51Z" fill="url(#hg)" stroke="#6a0404" stroke-width="1.18"/>
<path d="M168.07,150.19 C171.89,145.76 182.26,144.78 187.17,151.17 C190.45,156.57 188.81,164.93 183.35,170.82" fill="none" stroke="#ffc8b8" stroke-width="3.31" stroke-linecap="round" opacity="0.7"/>
<path d="M158.24,185.56 C147.32,176.72 138.04,167.87 138.04,158.05" fill="none" stroke="#6a0000" stroke-width="1.77" stroke-linecap="round" opacity="0.6"/>
<path d="M203.14,192.57 C194.68,184.04 188.08,177.11 189.34,169.97 C190.22,165.01 194.96,162.32 200.13,163.23 C203.92,163.90 206.30,166.56 207.19,169.60 C209.06,167.05 212.20,165.36 216.00,166.03 C221.17,166.94 224.70,171.09 223.83,176.05 C222.57,183.19 214.00,187.44 203.14,192.57Z" fill="url(#hg)" stroke="#6a0404" stroke-width="0.76"/>
<path d="M210.17,168.84 C213.07,166.48 219.73,167.01 222.13,171.59 C223.59,175.37 221.63,180.47 217.52,183.58" fill="none" stroke="#ffc8b8" stroke-width="2.12" stroke-linecap="round" opacity="0.7"/>
<path d="M200.02,190.10 C194.10,183.29 189.23,176.67 190.32,170.47" fill="none" stroke="#6a0000" stroke-width="1.13" stroke-linecap="round" opacity="0.6"/>
<path d="M165.00,213.92 C154.62,206.58 146.46,200.57 146.46,192.89 C146.46,187.55 150.91,183.88 156.47,183.88 C160.55,183.88 163.52,186.22 165.00,189.22 C166.48,186.22 169.45,183.88 173.53,183.88 C179.09,183.88 183.54,187.55 183.54,192.89 C183.54,200.57 175.38,206.58 165.00,213.92Z" fill="url(#hg)" stroke="#6a0404" stroke-width="0.80"/>
<path d="M167.97,187.89 C170.56,184.88 177.61,184.22 180.94,188.55 C183.17,192.23 182.06,197.90 178.35,201.90" fill="none" stroke="#ffc8b8" stroke-width="2.25" stroke-linecap="round" opacity="0.7"/>
<path d="M161.29,211.92 C153.88,205.91 147.57,199.90 147.57,193.23" fill="none" stroke="#6a0000" stroke-width="1.20" stroke-linecap="round" opacity="0.6"/>
<path d="M196.21,212.50 C191.09,208.16 187.08,204.62 187.43,200.59 C187.67,197.78 190.18,196.06 193.11,196.31 C195.25,196.50 196.70,197.86 197.35,199.51 C198.26,198.00 199.93,196.91 202.07,197.10 C205.00,197.35 207.17,199.49 206.92,202.29 C206.57,206.33 202.01,209.11 196.21,212.50Z" fill="url(#hg)" stroke="#6a0404" stroke-width="0.50"/>
<path d="M198.97,198.95 C200.47,197.49 204.20,197.46 205.76,199.89 C206.76,201.93 205.91,204.86 203.78,206.79" fill="none" stroke="#ffc8b8" stroke-width="1.19" stroke-linecap="round" opacity="0.7"/>
<path d="M194.35,211.27 C190.73,207.77 187.69,204.32 188.00,200.82" fill="none" stroke="#6a0000" stroke-width="0.63" stroke-linecap="round" opacity="0.6"/>
<path d="M137.70,199.31 C134.24,196.86 131.52,194.86 131.52,192.30 C131.52,190.52 133.00,189.29 134.86,189.29 C136.22,189.29 137.21,190.07 137.70,191.07 C138.19,190.07 139.18,189.29 140.54,189.29 C142.40,189.29 143.88,190.52 143.88,192.30 C143.88,194.86 141.16,196.86 137.70,199.31Z" fill="url(#hg)" stroke="#6a0404" stroke-width="0.50"/>
<path d="M138.69,190.63 C139.55,189.63 141.90,189.41 143.01,190.85 C143.76,192.08 143.39,193.97 142.15,195.30" fill="none" stroke="#ffc8b8" stroke-width="0.75" stroke-linecap="round" opacity="0.7"/>
<path d="M136.46,198.64 C133.99,196.64 131.89,194.63 131.89,192.41" fill="none" stroke="#6a0000" stroke-width="0.40" stroke-linecap="round" opacity="0.6"/>
<path d="M23.45,223.66 C17.16,221.33 12.18,219.38 11.13,215.47 C10.40,212.75 12.17,210.27 15.00,209.51 C17.08,208.95 18.91,209.74 20.08,211.07 C20.42,209.33 21.62,207.74 23.70,207.18 C26.53,206.42 29.30,207.68 30.03,210.41 C31.08,214.32 27.74,218.49 23.45,223.66Z" fill="url(#hg)" stroke="#6a0404" stroke-width="0.50"/>
<path d="M21.41,209.98 C22.32,208.09 25.82,206.79 28.12,208.55 C29.75,210.12 29.96,213.16 28.62,215.71" fill="none" stroke="#ffc8b8" stroke-width="1.19" stroke-linecap="round" opacity="0.7"/>
<path d="M21.29,223.14 C16.69,221.09 12.65,218.89 11.74,215.49" fill="none" stroke="#6a0000" stroke-width="0.63" stroke-linecap="round" opacity="0.6"/>
<path d="M322.00,102.34 C319.69,100.71 317.88,99.37 317.88,97.67 C317.88,96.48 318.87,95.66 320.10,95.66 C321.01,95.66 321.67,96.18 322.00,96.85 C322.33,96.18 322.99,95.66 323.90,95.66 C325.13,95.66 326.12,96.48 326.12,97.67 C326.12,99.37 324.31,100.71 322.00,102.34Z" fill="url(#hg)" stroke="#6a0404" stroke-width="0.50"/>
<path d="M225.50,164.04 C223.19,162.41 221.38,161.07 221.38,159.37 C221.38,158.18 222.37,157.36 223.60,157.36 C224.51,157.36 225.17,157.88 225.50,158.55 C225.83,157.88 226.49,157.36 227.40,157.36 C228.63,157.36 229.62,158.18 229.62,159.37 C229.62,161.07 227.81,162.41 225.50,164.04Z" fill="url(#hg)" stroke="#6a0404" stroke-width="0.50"/>
<path d="M172.00,227.17 C169.12,225.13 166.85,223.46 166.85,221.33 C166.85,219.85 168.09,218.83 169.63,218.83 C170.76,218.83 171.59,219.48 172.00,220.31 C172.41,219.48 173.24,218.83 174.37,218.83 C175.91,218.83 177.15,219.85 177.15,221.33 C177.15,223.46 174.88,225.13 172.00,227.17Z" fill="url(#hg)" stroke="#6a0404" stroke-width="0.50"/>
<path d="M191.00,223.97 C188.12,221.93 185.85,220.26 185.85,218.13 C185.85,216.65 187.09,215.63 188.63,215.63 C189.76,215.63 190.59,216.28 191.00,217.11 C191.41,216.28 192.24,215.63 193.37,215.63 C194.91,215.63 196.15,216.65 196.15,218.13 C196.15,220.26 193.88,221.93 191.00,223.97Z" fill="url(#hg)" stroke="#6a0404" stroke-width="0.50"/>
<path d="M145.40,213.64 C143.09,212.01 141.28,210.67 141.28,208.97 C141.28,207.78 142.27,206.96 143.50,206.96 C144.41,206.96 145.07,207.48 145.40,208.15 C145.73,207.48 146.39,206.96 147.30,206.96 C148.53,206.96 149.52,207.78 149.52,208.97 C149.52,210.67 147.71,212.01 145.40,213.64Z" fill="url(#hg)" stroke="#6a0404" stroke-width="0.50"/>
<path d="M233.00,66.42 C230.98,64.99 229.40,63.82 229.40,62.33 C229.40,61.29 230.26,60.58 231.34,60.58 C232.13,60.58 232.71,61.03 233.00,61.62 C233.29,61.03 233.87,60.58 234.66,60.58 C235.74,60.58 236.60,61.29 236.60,62.33 C236.60,63.82 235.02,64.99 233.00,66.42Z" fill="url(#hg)" stroke="#6a0404" stroke-width="0.50"/>
<path d="M190.00,28.92 C187.98,27.49 186.40,26.32 186.40,24.83 C186.40,23.79 187.26,23.08 188.34,23.08 C189.13,23.08 189.71,23.53 190.00,24.12 C190.29,23.53 190.87,23.08 191.66,23.08 C192.74,23.08 193.60,23.79 193.60,24.83 C193.60,26.32 192.02,27.49 190.00,28.92Z" fill="url(#hg)" stroke="#6a0404" stroke-width="0.50"/>
<polygon points="67.00,187.50 167.00,229.00 187.75,233.50 97.75,327.00" fill="url(#flapL)" stroke="#2a1a16" stroke-width="1.2" stroke-linejoin="round"/>
<polygon points="248.00,153.50 284.00,289.50 187.75,233.50 195.30,227.80" fill="url(#flapR)" stroke="#2a1a16" stroke-width="1.2" stroke-linejoin="round"/>
<path d="M97.75,327.00 C124.1,292.4 154.1,261.2 187.75,233.50 C222.3,247.8 254.4,266.5 284.00,289.50 Z" fill="url(#flapF)" stroke="#2a1a16" stroke-width="1.2" stroke-linejoin="round"/>
<circle cx="144.4" cy="27.2" r="1.1" fill="#ffe0d0" opacity="0.85"/>
<circle cx="80.4" cy="47.2" r="1.1" fill="#ffe0d0" opacity="0.85"/>
<circle cx="108.4" cy="48.2" r="1.1" fill="#ffe0d0" opacity="0.85"/>
<circle cx="49.9" cy="63.2" r="1.1" fill="#ffe0d0" opacity="0.85"/>
<circle cx="55.4" cy="60.2" r="1.1" fill="#ffe0d0" opacity="0.85"/>
<circle cx="137.4" cy="74.2" r="1.1" fill="#ffe0d0" opacity="0.85"/>
<circle cx="73.4" cy="95.7" r="1.1" fill="#ffe0d0" opacity="0.85"/>
<circle cx="95.0" cy="103.8" r="1.1" fill="#ffe0d0" opacity="0.85"/>
<circle cx="122.0" cy="94.8" r="1.1" fill="#ffe0d0" opacity="0.85"/>
<circle cx="29.2" cy="147.2" r="1.1" fill="#ffe0d0" opacity="0.85"/>
<circle cx="124.4" cy="143.2" r="1.1" fill="#ffe0d0" opacity="0.85"/>
<circle cx="138.4" cy="144.2" r="1.1" fill="#ffe0d0" opacity="0.85"/>
<circle cx="252.4" cy="7.2" r="1.1" fill="#ffe0d0" opacity="0.85"/>
<circle cx="284.4" cy="52.7" r="1.1" fill="#ffe0d0" opacity="0.85"/>
<circle cx="214.4" cy="62.7" r="1.1" fill="#ffe0d0" opacity="0.85"/>
<circle cx="227.4" cy="79.9" r="1.1" fill="#ffe0d0" opacity="0.85"/>
<circle cx="238.2" cy="91.7" r="1.1" fill="#ffe0d0" opacity="0.85"/>
<circle cx="270.8" cy="99.8" r="1.1" fill="#ffe0d0" opacity="0.85"/>
<circle cx="285.4" cy="133.2" r="1.1" fill="#ffe0d0" opacity="0.85"/>
<circle cx="243.4" cy="144.2" r="1.1" fill="#ffe0d0" opacity="0.85"/>
<circle cx="269.0" cy="155.2" r="1.1" fill="#ffe0d0" opacity="0.85"/>
<circle cx="314.4" cy="160.2" r="1.1" fill="#ffe0d0" opacity="0.85"/>
<circle cx="310.4" cy="79.9" r="1.1" fill="#ffe0d0" opacity="0.85"/>
<circle cx="304.4" cy="125.2" r="1.1" fill="#ffe0d0" opacity="0.85"/>
<circle cx="235" cy="213" r="1.1" fill="#ffe0d0" opacity="0.85"/>
<circle cx="303" cy="196" r="1.1" fill="#ffe0d0" opacity="0.85"/>
<circle cx="232" cy="260" r="1.1" fill="#ffe0d0" opacity="0.85"/>
<circle cx="44" cy="253" r="1.1" fill="#ffe0d0" opacity="0.85"/>
<circle cx="310" cy="200" r="1.1" fill="#ffe0d0" opacity="0.85"/></svg><div style="position:absolute;left:153px;top:3.5px;width:34px;height:3px;border-radius:2px;background:#9a9a9a;opacity:0.8"></div></div>
<div class="art" style="left:1009px;top:589.3px;width:319px;height:317.7px;border-radius:9px"><svg width="319" height="317.7" viewBox="0 0 319 317" preserveAspectRatio="none" style="display:block"><defs>
<linearGradient id="rbg" x1="0" y1="0" x2="1" y2="0.6"><stop offset="0" stop-color="#faf0e6"/><stop offset="0.45" stop-color="#f6e4d6"/><stop offset="0.8" stop-color="#eac6b2"/><stop offset="1" stop-color="#e0b49c"/></linearGradient>
<radialGradient id="bg1" cx="0.35" cy="0.3" r="0.8"><stop offset="0" stop-color="#f44a34"/><stop offset="0.5" stop-color="#e0180c"/><stop offset="1" stop-color="#b00a06"/></radialGradient>
<filter id="rb8" x="-50%" y="-50%" width="200%" height="200%"><feGaussianBlur stdDeviation="10"/></filter>
<filter id="rb2" x="-50%" y="-50%" width="200%" height="200%"><feGaussianBlur stdDeviation="2"/></filter>
<filter id="rb1" x="-50%" y="-50%" width="200%" height="200%"><feGaussianBlur stdDeviation="0.8"/></filter>
<linearGradient id="box" x1="0" y1="0" x2="1" y2="1"><stop offset="0" stop-color="#b87452"/><stop offset="0.5" stop-color="#9c5a3a"/><stop offset="1" stop-color="#7a3c24"/></linearGradient>
<linearGradient id="hair" x1="0" y1="0" x2="0" y2="1"><stop offset="0" stop-color="#e25a2c"/><stop offset="0.6" stop-color="#d63a18"/><stop offset="1" stop-color="#b82410"/></linearGradient>
</defs>
<rect width="319" height="317" fill="url(#rbg)"/>
<ellipse cx="300" cy="200" rx="70" ry="140" fill="#e2a88a" opacity="0.6" filter="url(#rb8)"/>
<ellipse cx="270" cy="280" rx="90" ry="60" fill="#e0a888" opacity="0.7" filter="url(#rb8)"/>
<ellipse cx="305" cy="300" rx="45" ry="50" fill="#d8885e" opacity="0.75" filter="url(#rb8)"/>
<ellipse cx="290" cy="40" rx="50" ry="40" fill="#e8c4b0" opacity="0.5" filter="url(#rb8)"/>
<ellipse cx="60" cy="120" rx="50" ry="40" fill="#fbf4ec" opacity="0.7" filter="url(#rb8)"/>
<ellipse cx="150" cy="230" rx="70" ry="40" fill="#f0dccb" opacity="0.5" filter="url(#rb8)"/>
<path d="M88.3,96.5 L126,262" fill="none" stroke="#9a4a3a" stroke-width="0.9"/>
<path d="M158,41.5 C153,52 154,62 149,73" fill="none" stroke="#9a4a3a" stroke-width="0.9"/>
<path d="M216,88 C217,110 218,125 216,150 C212,190 205,230 198,262" fill="none" stroke="#9a4a3a" stroke-width="0.9"/>
<path d="M260,161 C258,175 256,185 250,198 C235,220 215,232 203,262" fill="none" stroke="#9a4a3a" stroke-width="0.9"/>
<path d="M48.5,156.5 C52,166 60,172 59,185" fill="none" stroke="#9a4a3a" stroke-width="0.9"/>
<path d="M51,234.5 C51,250 56,262 80,269" fill="none" stroke="#9a4a3a" stroke-width="0.9"/>
<path d="M82,258 L232,258 C245,270 258,295 268,317 L82,317 Z" fill="#9a5a3c" filter="url(#rb2)" opacity="0.6"/>
<rect x="81.5" y="258.3" width="150" height="59" fill="url(#box)"/>
<rect x="81.5" y="258.3" width="150" height="5" fill="#c89070" opacity="0.6"/>
<rect x="81.5" y="290" width="150" height="27" fill="#7a3a22" opacity="0.35" filter="url(#rb2)"/>
<path d="M160,82 C176,79 191,86 198,101 C206,120 214,142 218,166 C220,181 218,194 212,202 L200,196 L194,172 L182,142 L150,142 L132,165 C122,180 112,192 100,198 C92,194 86,186 82,176 C96,162 106,142 117,118 C127,100 140,85 160,82 Z" fill="url(#hair)"/>
<path d="M165.8,78.0 Q162.3,80.0 160.4,81.0 Q158.6,82.0 156.6,82.9 Q154.7,83.9 152.7,85.0 Q150.7,86.1 148.7,87.4 Q146.8,88.7 145.0,90.2 Q143.1,91.7 141.4,93.5 Q139.6,95.3 137.9,97.2 Q136.2,99.1 134.4,101.0 Q132.6,102.9 130.7,104.6 Q128.7,106.3 126.5,107.8 Q124.3,109.3 121.8,110.6 Q119.3,111.9 116.7,113.1 Q114.1,114.3 111.5,115.7 Q108.9,117.1 106.5,118.8 Q104.1,120.5 102.2,122.7 Q100.3,124.9 98.8,127.6 Q97.3,130.2 96.1,133.2 Q95.0,136.2 94.0,139.2 Q93.0,142.3 91.8,145.1 Q90.7,148.0 89.1,150.5 Q87.4,153.0 85.2,155.1 Q83.0,157.2 80.2,159.0 Q77.5,160.8 74.5,162.6 L71.4,164.4" fill="none" stroke="#e0502a" stroke-width="1.2" stroke-linecap="round"/>
<path d="M161.5,79.5 Q158.2,80.5 156.4,81.1 Q154.7,81.7 153.0,82.5 Q151.3,83.4 149.6,84.5 Q147.9,85.6 146.2,86.9 Q144.6,88.1 142.9,89.5 Q141.2,90.8 139.3,92.0 Q137.4,93.3 135.4,94.4 Q133.3,95.4 131.0,96.4 Q128.8,97.4 126.4,98.4 Q124.0,99.4 121.7,100.6 Q119.3,101.8 117.2,103.4 Q115.1,105.0 113.3,107.1 Q111.5,109.2 110.0,111.7 Q108.5,114.3 107.2,117.0 Q105.9,119.7 104.5,122.3 Q103.1,125.0 101.4,127.4 Q99.7,129.7 97.4,131.7 Q95.2,133.7 92.4,135.4 Q89.7,137.1 86.7,138.6 Q83.6,140.2 80.7,142.0 Q77.7,143.7 75.2,146.0 Q72.7,148.2 71.0,151.0 Q69.2,153.9 68.3,157.3 L67.3,160.7" fill="none" stroke="#c82a12" stroke-width="2.4" stroke-linecap="round"/>
<path d="M163.3,80.6 Q160.6,82.4 159.3,83.4 Q157.9,84.4 156.6,85.6 Q155.2,86.7 153.8,88.0 Q152.4,89.2 150.8,90.4 Q149.3,91.6 147.5,92.6 Q145.8,93.6 143.8,94.4 Q141.8,95.2 139.7,95.9 Q137.6,96.6 135.4,97.4 Q133.2,98.3 131.2,99.4 Q129.2,100.6 127.4,102.2 Q125.6,103.8 124.0,105.8 Q122.5,107.9 121.1,110.2 Q119.7,112.5 118.2,114.7 Q116.7,116.9 114.9,118.9 Q113.1,120.8 110.8,122.3 Q108.6,123.7 105.8,124.9 Q103.1,126.0 100.2,127.1 Q97.2,128.2 94.3,129.6 Q91.5,131.0 89.1,133.0 Q86.8,135.0 85.1,137.7 Q83.5,140.5 82.6,143.8 Q81.7,147.2 81.2,150.8 Q80.7,154.4 80.1,158.0 L79.4,161.5" fill="none" stroke="#e86a3a" stroke-width="1.9" stroke-linecap="round"/>
<path d="M162.2,79.1 Q158.5,80.8 156.8,81.7 Q155.0,82.6 153.3,83.7 Q151.7,84.8 150.1,86.0 Q148.6,87.3 147.1,88.6 Q145.7,90.0 144.3,91.5 Q142.9,93.0 141.5,94.5 Q140.2,96.0 138.8,97.5 Q137.4,99.0 135.8,100.5 Q134.3,102.0 132.6,103.4 Q131.0,104.9 129.2,106.3 Q127.4,107.7 125.5,109.1 Q123.7,110.6 121.8,112.1 Q120.0,113.7 118.2,115.4 Q116.5,117.1 114.9,119.1 Q113.3,121.1 111.9,123.3 Q110.5,125.5 109.1,127.9 Q107.8,130.3 106.5,132.8 Q105.1,135.3 103.7,137.9 Q102.2,140.5 100.4,142.9 Q98.7,145.4 96.6,147.6 Q94.4,149.9 91.9,151.9 Q89.4,153.9 86.5,155.7 Q83.6,157.5 80.5,159.1 L77.3,160.8" fill="none" stroke="#b82010" stroke-width="1.4" stroke-linecap="round"/>
<path d="M157.3,82.5 Q154.7,84.2 153.3,85.1 Q152.0,86.1 150.8,87.3 Q149.5,88.4 148.2,89.7 Q146.9,91.0 145.6,92.3 Q144.3,93.6 142.8,94.9 Q141.4,96.2 139.7,97.4 Q138.1,98.6 136.3,99.8 Q134.5,100.9 132.5,102.0 Q130.5,103.1 128.5,104.3 Q126.5,105.5 124.6,106.9 Q122.6,108.3 120.9,110.0 Q119.1,111.7 117.6,113.7 Q116.0,115.8 114.7,118.1 Q113.4,120.5 112.3,123.0 Q111.1,125.5 109.9,128.1 Q108.6,130.7 107.2,133.1 Q105.8,135.6 103.9,137.8 Q102.1,140.0 99.9,142.0 Q97.6,144.0 94.9,145.7 Q92.3,147.5 89.4,149.2 Q86.6,150.9 83.7,152.8 Q80.9,154.7 78.4,157.0 Q75.8,159.2 73.8,161.9 L71.8,164.6" fill="none" stroke="#d83c1a" stroke-width="2.5" stroke-linecap="round"/>
<path d="M156.2,80.2 Q153.8,82.2 152.6,83.3 Q151.4,84.4 150.2,85.6 Q149.0,86.7 147.7,87.9 Q146.4,89.1 144.9,90.2 Q143.5,91.4 141.9,92.6 Q140.4,93.7 138.7,95.0 Q137.1,96.2 135.5,97.6 Q133.8,98.9 132.3,100.5 Q130.7,102.0 129.3,103.9 Q127.9,105.7 126.7,107.7 Q125.5,109.8 124.4,112.1 Q123.3,114.4 122.2,116.8 Q121.1,119.2 119.9,121.7 Q118.7,124.1 117.2,126.5 Q115.7,128.9 113.9,131.1 Q112.1,133.3 109.8,135.4 Q107.6,137.4 105.0,139.3 Q102.4,141.2 99.7,143.1 Q96.9,145.0 94.1,147.1 Q91.3,149.1 88.6,151.4 Q86.0,153.7 83.7,156.4 Q81.4,159.1 79.4,162.2 Q77.5,165.4 75.8,169.0 L74.2,172.5" fill="none" stroke="#ee7444" stroke-width="2.0" stroke-linecap="round"/>
<path d="M153.9,84.4 Q151.2,86.4 150.0,87.5 Q148.8,88.7 147.6,89.9 Q146.4,91.2 145.2,92.5 Q144.0,93.8 142.7,95.2 Q141.4,96.6 140.1,98.0 Q138.7,99.4 137.3,100.8 Q135.8,102.3 134.4,103.9 Q132.9,105.4 131.5,107.1 Q130.0,108.8 128.7,110.6 Q127.4,112.4 126.2,114.5 Q125.0,116.5 124.0,118.7 Q122.9,120.9 122.0,123.3 Q121.0,125.6 120.0,128.0 Q119.0,130.5 117.8,132.9 Q116.6,135.3 115.2,137.6 Q113.7,140.0 111.9,142.1 Q110.2,144.3 108.0,146.3 Q105.9,148.3 103.5,150.2 Q101.1,152.1 98.5,153.9 Q96.0,155.6 93.4,157.5 Q90.8,159.3 88.3,161.3 Q85.8,163.3 83.5,165.5 Q81.2,167.8 79.1,170.4 L77.0,173.0" fill="none" stroke="#e0502a" stroke-width="1.5" stroke-linecap="round"/>
<path d="M155.4,83.2 Q152.0,84.4 150.4,85.0 Q148.8,85.7 147.2,86.5 Q145.7,87.2 144.3,88.2 Q142.8,89.1 141.6,90.3 Q140.3,91.4 139.2,92.8 Q138.1,94.2 137.2,95.8 Q136.3,97.3 135.5,99.0 Q134.8,100.7 133.9,102.5 Q133.1,104.2 132.2,106.0 Q131.2,107.7 130.0,109.5 Q128.8,111.2 127.4,112.9 Q126.0,114.7 124.4,116.4 Q122.8,118.2 121.2,120.1 Q119.6,122.0 118.1,124.1 Q116.6,126.2 115.4,128.5 Q114.2,130.9 113.2,133.5 Q112.3,136.1 111.4,139.0 Q110.6,141.8 109.7,144.9 Q108.8,147.9 107.6,150.9 Q106.4,154.0 104.6,156.9 Q102.9,159.8 100.6,162.4 Q98.3,165.1 95.4,167.5 Q92.5,169.9 89.2,172.1 L85.9,174.3" fill="none" stroke="#c82a12" stroke-width="2.7" stroke-linecap="round"/>
<path d="M150.3,82.6 Q147.4,83.7 146.0,84.5 Q144.6,85.2 143.3,86.2 Q142.0,87.1 140.9,88.3 Q139.7,89.5 138.6,90.8 Q137.6,92.1 136.4,93.4 Q135.3,94.7 134.0,95.9 Q132.7,97.1 131.1,98.2 Q129.6,99.4 127.9,100.6 Q126.3,101.7 124.7,103.1 Q123.1,104.5 121.8,106.2 Q120.5,107.9 119.7,110.0 Q118.8,112.1 118.2,114.4 Q117.7,116.8 117.2,119.2 Q116.7,121.7 116.0,124.1 Q115.2,126.5 113.9,128.6 Q112.6,130.8 110.6,132.7 Q108.7,134.6 106.3,136.4 Q104.0,138.2 101.6,140.2 Q99.2,142.1 97.3,144.3 Q95.4,146.6 94.1,149.3 Q92.9,152.1 92.3,155.3 Q91.7,158.6 91.5,162.1 Q91.2,165.7 90.6,169.2 L90.1,172.7" fill="none" stroke="#e86a3a" stroke-width="2.2" stroke-linecap="round"/>
<path d="M147.6,84.7 Q144.9,86.4 143.7,87.3 Q142.4,88.3 141.2,89.2 Q140.0,90.2 138.8,91.3 Q137.7,92.4 136.6,93.5 Q135.5,94.7 134.5,96.1 Q133.6,97.4 132.7,98.9 Q131.9,100.4 131.2,102.0 Q130.5,103.6 129.9,105.4 Q129.3,107.1 128.8,109.0 Q128.3,110.8 127.8,112.8 Q127.3,114.7 126.7,116.7 Q126.1,118.7 125.3,120.7 Q124.5,122.7 123.5,124.7 Q122.5,126.7 121.2,128.7 Q120.0,130.7 118.4,132.7 Q116.9,134.6 115.1,136.6 Q113.4,138.5 111.5,140.5 Q109.6,142.5 107.7,144.5 Q105.8,146.5 103.9,148.7 Q102.0,150.9 100.1,153.2 Q98.3,155.6 96.5,158.2 Q94.8,160.8 93.0,163.7 Q91.3,166.5 89.5,169.6 L87.8,172.8" fill="none" stroke="#b82010" stroke-width="1.7" stroke-linecap="round"/>
<path d="M147.7,87.5 Q144.4,89.4 142.9,90.4 Q141.5,91.5 140.2,92.6 Q138.9,93.8 137.8,95.1 Q136.7,96.4 135.8,97.8 Q134.8,99.2 134.1,100.6 Q133.3,102.1 132.6,103.6 Q131.9,105.1 131.2,106.6 Q130.5,108.1 129.7,109.6 Q128.9,111.1 127.9,112.7 Q127.0,114.2 126.0,115.7 Q124.9,117.3 123.9,118.9 Q122.8,120.5 121.8,122.2 Q120.8,123.9 120.0,125.7 Q119.1,127.5 118.4,129.5 Q117.8,131.5 117.2,133.6 Q116.7,135.7 116.2,138.0 Q115.7,140.3 115.1,142.7 Q114.5,145.1 113.7,147.5 Q112.8,149.9 111.6,152.2 Q110.4,154.6 108.6,156.7 Q106.9,158.9 104.8,161.0 Q102.6,163.0 100.1,164.9 Q97.6,166.8 94.9,168.6 L92.2,170.4" fill="none" stroke="#d83c1a" stroke-width="1.2" stroke-linecap="round"/>
<path d="M149.9,86.3 Q146.4,88.3 144.8,89.5 Q143.3,90.7 142.0,92.1 Q140.7,93.4 139.5,95.0 Q138.4,96.5 137.4,98.1 Q136.4,99.7 135.4,101.3 Q134.5,103.0 133.4,104.6 Q132.3,106.2 131.1,107.8 Q129.9,109.5 128.6,111.1 Q127.3,112.8 125.9,114.5 Q124.6,116.3 123.3,118.2 Q122.1,120.0 121.1,122.1 Q120.1,124.1 119.4,126.4 Q118.8,128.6 118.4,131.1 Q118.0,133.5 117.8,136.1 Q117.6,138.7 117.4,141.4 Q117.1,144.0 116.6,146.7 Q116.1,149.4 115.1,152.0 Q114.1,154.5 112.6,156.9 Q111.0,159.3 108.9,161.5 Q106.8,163.6 104.3,165.6 Q101.9,167.6 99.3,169.6 Q96.7,171.5 94.2,173.6 Q91.8,175.6 89.6,178.0 L87.5,180.4" fill="none" stroke="#ee7444" stroke-width="2.4" stroke-linecap="round"/>
<path d="M147.8,89.6 Q144.4,91.4 142.8,92.4 Q141.2,93.5 139.8,94.5 Q138.4,95.6 137.0,96.8 Q135.6,98.0 134.4,99.2 Q133.1,100.5 132.0,102.0 Q130.8,103.4 129.9,105.0 Q128.9,106.5 128.1,108.3 Q127.2,110.0 126.6,111.9 Q126.0,113.8 125.5,115.8 Q125.0,117.7 124.6,119.8 Q124.2,121.9 123.7,124.0 Q123.3,126.2 122.7,128.4 Q122.1,130.6 121.4,132.8 Q120.6,135.0 119.6,137.2 Q118.6,139.4 117.3,141.6 Q116.0,143.9 114.6,146.1 Q113.2,148.3 111.6,150.5 Q110.1,152.8 108.6,155.1 Q107.1,157.5 105.6,159.9 Q104.2,162.4 102.9,165.0 Q101.5,167.6 100.3,170.5 Q99.0,173.3 97.8,176.3 Q96.5,179.4 95.1,182.5 L93.6,185.7" fill="none" stroke="#e0502a" stroke-width="1.9" stroke-linecap="round"/>
<path d="M147.5,88.6 Q144.4,90.5 143.1,91.6 Q141.8,92.7 140.7,93.9 Q139.7,95.2 138.8,96.5 Q137.8,97.8 137.0,99.1 Q136.1,100.5 135.2,101.9 Q134.4,103.2 133.4,104.7 Q132.5,106.2 131.6,107.8 Q130.6,109.4 129.7,111.1 Q128.8,112.8 128.0,114.6 Q127.3,116.4 126.7,118.4 Q126.2,120.4 125.9,122.5 Q125.6,124.6 125.6,126.8 Q125.5,129.0 125.6,131.4 Q125.6,133.8 125.7,136.3 Q125.7,138.8 125.5,141.3 Q125.3,143.9 124.7,146.4 Q124.1,149.0 123.0,151.5 Q121.9,154.0 120.3,156.4 Q118.7,158.8 116.6,161.0 Q114.6,163.2 112.2,165.3 Q109.8,167.4 107.2,169.4 Q104.7,171.5 102.2,173.7 Q99.7,175.9 97.4,178.3 L95.0,180.8" fill="none" stroke="#c82a12" stroke-width="1.4" stroke-linecap="round"/>
<path d="M145.1,89.7 Q142.0,91.5 140.6,92.6 Q139.2,93.7 138.0,94.9 Q136.8,96.2 135.6,97.5 Q134.5,98.8 133.4,100.2 Q132.2,101.6 131.1,103.1 Q129.9,104.5 128.7,106.1 Q127.5,107.7 126.4,109.4 Q125.3,111.1 124.4,113.0 Q123.5,114.9 122.9,116.9 Q122.2,119.0 121.8,121.2 Q121.4,123.4 121.2,125.8 Q120.9,128.1 120.7,130.5 Q120.5,132.9 120.0,135.3 Q119.6,137.7 118.8,140.1 Q118.0,142.5 116.9,144.8 Q115.7,147.1 114.2,149.4 Q112.7,151.7 111.1,153.9 Q109.5,156.2 108.0,158.5 Q106.5,160.8 105.2,163.3 Q104.0,165.7 103.1,168.4 Q102.2,171.1 101.6,174.0 Q101.0,176.9 100.5,180.0 Q99.9,183.0 99.1,186.1 L98.3,189.2" fill="none" stroke="#e86a3a" stroke-width="2.5" stroke-linecap="round"/>
<path d="M144.5,91.2 Q141.5,93.2 140.3,94.2 Q139.0,95.3 137.9,96.3 Q136.7,97.3 135.6,98.4 Q134.5,99.4 133.5,100.6 Q132.5,101.8 131.8,103.2 Q131.1,104.6 130.7,106.2 Q130.3,107.8 130.4,109.5 Q130.4,111.1 130.7,112.9 Q131.0,114.7 131.3,116.5 Q131.6,118.3 131.5,120.1 Q131.5,122.0 131.0,123.9 Q130.5,125.7 129.5,127.6 Q128.5,129.5 127.2,131.4 Q125.9,133.3 124.7,135.2 Q123.4,137.1 122.6,139.2 Q121.8,141.2 121.5,143.6 Q121.2,145.9 121.3,148.5 Q121.5,151.1 121.7,154.0 Q121.8,157.0 121.6,160.0 Q121.3,163.0 120.2,165.9 Q119.1,168.8 116.9,171.2 Q114.7,173.7 111.7,175.6 Q108.6,177.6 105.1,179.2 L101.5,180.9" fill="none" stroke="#b82010" stroke-width="2.0" stroke-linecap="round"/>
<path d="M142.9,91.5 Q140.5,93.6 139.5,94.7 Q138.5,95.7 137.5,96.9 Q136.6,98.0 135.7,99.2 Q134.7,100.4 133.9,101.8 Q133.1,103.1 132.5,104.7 Q132.0,106.2 131.7,107.8 Q131.4,109.5 131.5,111.3 Q131.5,113.1 131.8,114.9 Q132.0,116.8 132.3,118.7 Q132.6,120.6 132.6,122.6 Q132.6,124.6 132.3,126.6 Q131.9,128.7 131.1,130.7 Q130.3,132.8 129.1,134.8 Q127.9,136.8 126.6,138.8 Q125.3,140.9 124.1,142.9 Q123.0,145.0 122.2,147.3 Q121.4,149.5 121.0,152.0 Q120.6,154.5 120.5,157.3 Q120.3,160.2 120.0,163.2 Q119.7,166.3 118.9,169.4 Q118.1,172.5 116.5,175.4 Q114.9,178.3 112.4,180.7 Q109.9,183.2 106.6,185.1 L103.3,187.1" fill="none" stroke="#d83c1a" stroke-width="1.5" stroke-linecap="round"/>
<path d="M141.5,97.5 Q138.6,99.1 137.4,100.0 Q136.1,101.0 135.1,102.1 Q134.1,103.2 133.4,104.5 Q132.6,105.8 132.2,107.2 Q131.7,108.7 131.5,110.2 Q131.3,111.7 131.2,113.3 Q131.2,114.9 131.2,116.6 Q131.2,118.3 131.3,120.0 Q131.3,121.8 131.2,123.6 Q131.1,125.4 130.9,127.3 Q130.6,129.2 130.1,131.2 Q129.7,133.2 129.0,135.2 Q128.3,137.2 127.5,139.3 Q126.6,141.3 125.7,143.4 Q124.8,145.5 123.9,147.6 Q123.0,149.7 122.2,151.8 Q121.3,154.0 120.6,156.2 Q119.9,158.4 119.3,160.9 Q118.7,163.3 118.2,165.9 Q117.6,168.5 117.0,171.3 Q116.3,174.1 115.4,177.2 Q114.6,180.2 113.3,183.3 Q112.0,186.4 110.1,189.4 L108.3,192.5" fill="none" stroke="#ee7444" stroke-width="2.7" stroke-linecap="round"/>
<path d="M141.9,98.0 Q138.8,99.1 137.5,99.9 Q136.2,100.7 135.2,101.6 Q134.1,102.6 133.3,103.7 Q132.5,104.8 131.8,106.1 Q131.2,107.3 130.7,108.6 Q130.2,110.0 129.8,111.4 Q129.3,112.9 128.9,114.4 Q128.4,116.0 127.9,117.6 Q127.4,119.3 126.9,121.0 Q126.4,122.8 125.8,124.7 Q125.2,126.5 124.7,128.5 Q124.1,130.5 123.6,132.6 Q123.1,134.7 122.6,136.8 Q122.2,139.0 121.9,141.3 Q121.6,143.6 121.4,146.0 Q121.1,148.4 121.0,150.9 Q120.8,153.4 120.5,156.1 Q120.3,158.7 119.9,161.5 Q119.5,164.3 118.8,167.1 Q118.1,169.9 117.0,172.8 Q115.9,175.6 114.3,178.4 Q112.8,181.2 110.8,183.8 Q108.8,186.5 106.4,189.1 L104.0,191.6" fill="none" stroke="#e0502a" stroke-width="2.2" stroke-linecap="round"/>
<path d="M143.3,101.3 Q140.5,102.9 139.4,103.9 Q138.2,104.9 137.4,106.0 Q136.5,107.2 135.8,108.4 Q135.2,109.6 134.7,110.9 Q134.2,112.1 133.7,113.4 Q133.3,114.7 132.8,116.1 Q132.4,117.4 131.8,118.8 Q131.3,120.2 130.6,121.7 Q130.0,123.2 129.2,124.8 Q128.5,126.3 127.7,128.0 Q126.9,129.6 126.1,131.4 Q125.4,133.1 124.7,135.0 Q124.0,136.8 123.5,138.7 Q123.0,140.7 122.7,142.7 Q122.4,144.8 122.3,147.0 Q122.1,149.2 122.1,151.6 Q122.1,154.0 122.0,156.6 Q122.0,159.2 121.8,161.9 Q121.6,164.7 121.0,167.5 Q120.5,170.4 119.5,173.3 Q118.5,176.1 117.0,178.9 Q115.5,181.7 113.4,184.4 Q111.2,187.0 108.5,189.5 L105.9,192.0" fill="none" stroke="#c82a12" stroke-width="1.7" stroke-linecap="round"/>
<path d="M142.4,102.4 Q139.7,103.8 138.7,104.6 Q137.6,105.4 136.7,106.4 Q135.9,107.3 135.1,108.3 Q134.4,109.3 133.6,110.4 Q132.9,111.4 132.2,112.7 Q131.5,113.9 130.8,115.3 Q130.1,116.6 129.5,118.2 Q129.0,119.7 128.6,121.4 Q128.2,123.1 128.1,124.9 Q128.0,126.8 128.1,128.7 Q128.2,130.6 128.5,132.7 Q128.8,134.7 129.1,136.9 Q129.5,139.1 129.8,141.4 Q130.0,143.7 130.0,146.1 Q129.9,148.5 129.5,150.9 Q129.0,153.3 128.1,155.8 Q127.2,158.2 125.8,160.6 Q124.4,163.0 122.7,165.4 Q121.0,167.7 119.2,170.0 Q117.3,172.3 115.5,174.7 Q113.7,177.1 112.0,179.7 Q110.3,182.3 108.8,185.2 Q107.3,188.1 105.8,191.4 L104.4,194.6" fill="none" stroke="#e86a3a" stroke-width="1.2" stroke-linecap="round"/>
<path d="M140.8,100.7 Q137.7,102.1 136.4,103.0 Q135.0,103.8 133.8,104.9 Q132.7,105.9 131.8,107.2 Q131.0,108.5 130.5,110.0 Q130.0,111.5 129.8,113.2 Q129.6,114.8 129.5,116.5 Q129.5,118.2 129.3,120.0 Q129.2,121.7 128.8,123.6 Q128.4,125.4 127.8,127.3 Q127.1,129.3 126.4,131.4 Q125.7,133.4 125.1,135.6 Q124.5,137.7 124.3,140.0 Q124.1,142.2 124.4,144.5 Q124.7,146.9 125.4,149.3 Q126.1,151.7 126.8,154.2 Q127.5,156.8 127.8,159.4 Q128.1,162.0 127.7,164.6 Q127.2,167.2 126.0,169.7 Q124.7,172.1 122.9,174.4 Q121.0,176.7 119.0,178.8 Q116.9,180.9 115.2,183.1 Q113.4,185.2 112.2,187.7 Q111.0,190.2 110.2,193.2 L109.4,196.1" fill="none" stroke="#b82010" stroke-width="2.4" stroke-linecap="round"/>
<path d="M142.6,104.3 Q140.2,105.9 139.4,106.8 Q138.5,107.8 138.0,108.8 Q137.5,109.9 137.1,110.9 Q136.7,112.0 136.4,113.0 Q136.0,114.1 135.6,115.2 Q135.1,116.3 134.6,117.6 Q134.1,118.8 133.8,120.2 Q133.4,121.6 133.3,123.1 Q133.2,124.6 133.5,126.1 Q133.8,127.6 134.5,129.2 Q135.2,130.7 136.0,132.4 Q136.9,134.0 137.6,135.8 Q138.3,137.5 138.6,139.5 Q138.9,141.4 138.5,143.4 Q138.2,145.4 137.2,147.4 Q136.2,149.5 134.8,151.4 Q133.5,153.4 132.2,155.4 Q130.8,157.4 129.9,159.5 Q128.9,161.6 128.5,164.1 Q128.0,166.6 127.8,169.5 Q127.7,172.4 127.4,175.7 Q127.1,179.0 126.3,182.4 Q125.4,185.8 123.6,189.0 L121.8,192.2" fill="none" stroke="#d83c1a" stroke-width="1.9" stroke-linecap="round"/>
<path d="M143.4,106.7 Q140.8,108.9 139.8,110.1 Q138.8,111.3 138.1,112.6 Q137.4,113.9 136.7,115.2 Q136.1,116.6 135.5,118.0 Q134.9,119.4 134.4,121.0 Q133.8,122.5 133.5,124.2 Q133.2,125.9 133.1,127.7 Q133.1,129.5 133.4,131.3 Q133.7,133.2 134.3,135.1 Q134.8,137.0 135.4,139.0 Q136.0,141.0 136.4,143.0 Q136.8,145.1 136.8,147.3 Q136.8,149.4 136.3,151.7 Q135.8,153.9 135.0,156.1 Q134.1,158.3 133.2,160.5 Q132.3,162.7 131.6,164.9 Q130.9,167.1 130.5,169.5 Q130.2,171.9 130.1,174.5 Q130.0,177.1 129.8,180.0 Q129.7,182.8 129.0,185.8 Q128.3,188.7 126.8,191.5 Q125.4,194.3 123.0,196.7 Q120.6,199.0 117.4,200.9 L114.3,202.9" fill="none" stroke="#ee7444" stroke-width="1.4" stroke-linecap="round"/>
<path d="M143.4,108.6 Q140.9,110.3 139.9,111.2 Q138.8,112.1 138.0,113.1 Q137.1,114.1 136.3,115.2 Q135.6,116.4 134.9,117.6 Q134.3,118.9 133.9,120.3 Q133.4,121.7 133.2,123.3 Q133.0,124.8 133.1,126.4 Q133.1,128.1 133.4,129.8 Q133.8,131.5 134.3,133.2 Q134.8,135.0 135.3,136.8 Q135.9,138.7 136.4,140.6 Q137.0,142.5 137.3,144.5 Q137.6,146.6 137.7,148.7 Q137.7,150.8 137.5,153.0 Q137.2,155.2 136.5,157.4 Q135.9,159.7 135.1,161.9 Q134.2,164.1 133.3,166.3 Q132.3,168.5 131.4,170.7 Q130.6,172.9 129.8,175.1 Q129.1,177.4 128.5,179.8 Q128.0,182.2 127.5,184.8 Q127.1,187.5 126.5,190.4 Q126.0,193.2 125.2,196.3 L124.4,199.4" fill="none" stroke="#e0502a" stroke-width="2.5" stroke-linecap="round"/>
<path d="M144.5,108.0 Q141.1,109.8 139.8,110.8 Q138.4,111.9 137.5,113.1 Q136.5,114.3 135.8,115.5 Q135.1,116.7 134.6,118.0 Q134.0,119.2 133.5,120.5 Q133.0,121.8 132.5,123.1 Q132.0,124.5 131.5,126.0 Q131.0,127.5 130.8,129.1 Q130.6,130.7 130.7,132.4 Q130.8,134.1 131.2,135.9 Q131.7,137.6 132.4,139.4 Q133.0,141.2 133.7,143.0 Q134.4,144.9 134.8,146.9 Q135.3,148.9 135.2,151.0 Q135.2,153.1 134.6,155.2 Q134.1,157.4 133.2,159.6 Q132.3,161.8 131.4,163.9 Q130.4,166.1 129.8,168.4 Q129.1,170.6 128.7,173.1 Q128.4,175.5 128.3,178.2 Q128.2,181.0 128.0,184.0 Q127.8,187.0 127.1,190.1 Q126.3,193.2 124.7,196.2 L123.1,199.2" fill="none" stroke="#c82a12" stroke-width="2.0" stroke-linecap="round"/>
<path d="M168.6,79.2 Q172.0,80.7 173.7,81.4 Q175.4,82.1 177.0,82.9 Q178.7,83.7 180.3,84.6 Q181.9,85.5 183.5,86.5 Q185.0,87.5 186.5,88.7 Q187.9,89.8 189.2,91.2 Q190.5,92.6 191.7,94.1 Q192.8,95.7 193.9,97.3 Q194.9,98.9 196.0,100.6 Q197.0,102.3 198.1,104.0 Q199.1,105.6 200.3,107.3 Q201.6,108.9 202.9,110.5 Q204.3,112.1 205.8,113.7 Q207.3,115.4 208.7,117.1 Q210.2,118.8 211.6,120.7 Q212.9,122.6 214.0,124.6 Q215.1,126.7 215.9,129.0 Q216.7,131.3 217.1,133.7 Q217.6,136.2 217.8,138.7 Q218.1,141.3 218.3,143.9 Q218.5,146.5 218.9,149.1 Q219.2,151.7 220.0,154.2 Q220.7,156.8 221.8,159.3 L222.9,161.7" fill="none" stroke="#e86a3a" stroke-width="1.5" stroke-linecap="round"/>
<path d="M169.4,79.1 Q172.9,80.4 174.5,81.2 Q176.1,82.0 177.7,82.9 Q179.3,83.8 180.8,84.7 Q182.3,85.6 183.8,86.6 Q185.3,87.6 186.7,88.5 Q188.2,89.5 189.7,90.4 Q191.2,91.4 192.8,92.4 Q194.3,93.4 195.8,94.5 Q197.3,95.6 198.7,96.9 Q200.0,98.2 201.3,99.7 Q202.5,101.2 203.5,102.9 Q204.5,104.6 205.3,106.5 Q206.1,108.4 206.7,110.4 Q207.3,112.4 207.9,114.5 Q208.5,116.5 209.1,118.6 Q209.8,120.7 210.6,122.8 Q211.4,125.0 212.4,127.1 Q213.5,129.2 214.7,131.5 Q215.9,133.7 217.2,136.0 Q218.5,138.4 219.8,140.9 Q221.0,143.5 222.0,146.2 Q223.0,149.0 223.5,151.9 Q224.1,154.9 224.3,158.1 L224.4,161.2" fill="none" stroke="#b82010" stroke-width="2.7" stroke-linecap="round"/>
<path d="M174.6,80.4 Q177.7,81.8 179.1,82.7 Q180.6,83.6 181.9,84.6 Q183.2,85.7 184.4,86.8 Q185.6,88.0 186.8,89.2 Q188.0,90.4 189.3,91.6 Q190.5,92.8 191.8,94.0 Q193.1,95.3 194.5,96.6 Q195.8,98.0 197.1,99.4 Q198.4,100.9 199.6,102.5 Q200.7,104.2 201.6,106.0 Q202.6,107.8 203.2,109.9 Q203.8,111.9 204.1,114.1 Q204.5,116.2 204.7,118.5 Q204.9,120.7 205.1,123.0 Q205.2,125.3 205.6,127.6 Q206.0,129.9 206.6,132.1 Q207.2,134.4 208.2,136.6 Q209.2,138.8 210.5,141.0 Q211.7,143.2 213.1,145.5 Q214.5,147.8 215.8,150.2 Q217.0,152.5 217.9,155.0 Q218.9,157.5 219.3,160.1 Q219.7,162.8 219.6,165.5 L219.6,168.2" fill="none" stroke="#d83c1a" stroke-width="2.2" stroke-linecap="round"/>
<path d="M174.2,80.9 Q177.2,82.2 178.8,82.9 Q180.3,83.5 181.9,84.2 Q183.4,84.9 184.9,85.7 Q186.4,86.6 187.7,87.6 Q189.1,88.7 190.3,90.0 Q191.5,91.2 192.6,92.7 Q193.6,94.1 194.6,95.6 Q195.6,97.1 196.7,98.6 Q197.7,100.0 199.0,101.4 Q200.2,102.8 201.6,104.1 Q203.0,105.4 204.6,106.7 Q206.2,108.0 207.8,109.5 Q209.4,111.0 210.8,112.7 Q212.2,114.4 213.2,116.4 Q214.2,118.4 214.7,120.7 Q215.1,123.0 215.2,125.5 Q215.2,128.0 215.1,130.6 Q214.9,133.2 214.8,135.8 Q214.7,138.4 215.0,141.0 Q215.2,143.6 216.0,146.1 Q216.8,148.7 218.2,151.3 Q219.5,154.0 221.0,156.8 Q222.6,159.5 224.1,162.5 L225.5,165.5" fill="none" stroke="#ee7444" stroke-width="1.7" stroke-linecap="round"/>
<path d="M176.5,80.2 Q179.7,81.5 181.3,82.2 Q182.8,82.9 184.3,83.8 Q185.8,84.7 187.2,85.7 Q188.6,86.7 189.8,87.9 Q191.1,89.1 192.2,90.5 Q193.4,91.8 194.4,93.3 Q195.4,94.8 196.3,96.4 Q197.3,97.9 198.1,99.6 Q199.0,101.2 200.0,102.9 Q200.9,104.5 201.8,106.2 Q202.8,107.9 203.9,109.7 Q205.0,111.4 206.1,113.2 Q207.3,115.0 208.4,116.9 Q209.6,118.8 210.8,120.7 Q211.9,122.7 213.0,124.9 Q214.0,127.0 214.8,129.2 Q215.7,131.5 216.3,133.9 Q216.8,136.3 217.2,138.8 Q217.5,141.3 217.6,144.0 Q217.7,146.6 217.7,149.3 Q217.6,152.0 217.5,154.8 Q217.4,157.5 217.5,160.3 Q217.5,163.1 217.7,165.9 L217.9,168.7" fill="none" stroke="#e0502a" stroke-width="1.2" stroke-linecap="round"/>
<path d="M179.3,85.1 Q182.7,86.6 184.2,87.5 Q185.7,88.4 187.0,89.4 Q188.4,90.3 189.7,91.3 Q191.1,92.2 192.4,93.2 Q193.8,94.2 195.1,95.2 Q196.4,96.3 197.6,97.5 Q198.9,98.8 199.8,100.2 Q200.7,101.7 201.3,103.5 Q201.8,105.2 202.1,107.1 Q202.3,109.0 202.4,111.0 Q202.5,112.9 202.8,114.9 Q203.0,116.8 203.6,118.8 Q204.3,120.7 205.3,122.7 Q206.3,124.7 207.5,126.7 Q208.7,128.8 209.9,131.0 Q211.1,133.2 211.8,135.6 Q212.5,138.0 212.6,140.5 Q212.7,143.1 212.2,145.8 Q211.7,148.6 210.9,151.4 Q210.1,154.3 209.5,157.2 Q208.9,160.1 208.9,163.1 Q208.9,166.1 209.7,169.0 Q210.5,172.0 212.0,175.0 L213.6,178.0" fill="none" stroke="#c82a12" stroke-width="2.4" stroke-linecap="round"/>
<path d="M180.5,86.2 Q183.8,87.6 185.4,88.5 Q186.9,89.4 188.3,90.4 Q189.7,91.4 191.0,92.5 Q192.2,93.7 193.5,94.9 Q194.7,96.1 195.8,97.4 Q197.0,98.7 198.2,100.0 Q199.4,101.3 200.5,102.8 Q201.7,104.2 202.9,105.7 Q204.0,107.2 205.1,108.8 Q206.2,110.5 207.1,112.3 Q208.0,114.1 208.8,116.0 Q209.5,117.9 210.0,120.0 Q210.5,122.1 210.9,124.2 Q211.2,126.4 211.3,128.6 Q211.5,130.9 211.6,133.2 Q211.7,135.5 211.8,137.8 Q211.9,140.1 212.2,142.5 Q212.4,144.8 212.9,147.2 Q213.3,149.6 213.9,152.0 Q214.6,154.4 215.3,156.8 Q216.1,159.3 217.0,161.8 Q217.8,164.3 218.5,166.9 Q219.3,169.4 219.8,172.0 L220.3,174.7" fill="none" stroke="#e86a3a" stroke-width="1.9" stroke-linecap="round"/>
<path d="M181.7,84.3 Q184.8,85.7 186.2,86.6 Q187.6,87.5 188.7,88.4 Q189.9,89.4 191.0,90.5 Q192.0,91.5 193.0,92.6 Q193.9,93.8 194.9,94.9 Q195.8,96.1 196.7,97.4 Q197.5,98.7 198.4,100.1 Q199.2,101.6 200.0,103.1 Q200.8,104.7 201.4,106.3 Q202.1,108.0 202.5,109.9 Q203.0,111.7 203.3,113.6 Q203.6,115.6 203.7,117.7 Q203.8,119.7 203.8,121.9 Q203.8,124.1 203.6,126.4 Q203.5,128.7 203.3,131.0 Q203.2,133.4 203.1,135.9 Q203.1,138.4 203.2,140.9 Q203.3,143.5 203.7,146.1 Q204.1,148.7 204.7,151.4 Q205.4,154.1 206.4,156.8 Q207.3,159.6 208.5,162.4 Q209.7,165.1 211.0,167.9 Q212.3,170.8 213.7,173.7 L215.0,176.5" fill="none" stroke="#b82010" stroke-width="1.4" stroke-linecap="round"/>
<path d="M185.3,87.2 Q188.3,88.6 189.7,89.3 Q191.1,90.1 192.4,91.0 Q193.7,91.9 194.9,93.0 Q196.1,94.1 197.0,95.4 Q198.0,96.7 198.6,98.2 Q199.3,99.7 199.7,101.3 Q200.2,102.9 200.5,104.6 Q200.9,106.3 201.4,108.0 Q201.8,109.7 202.5,111.5 Q203.2,113.2 204.0,115.0 Q204.9,116.8 205.8,118.7 Q206.8,120.7 207.5,122.7 Q208.3,124.8 208.7,126.9 Q209.1,129.1 209.1,131.4 Q209.1,133.8 208.7,136.2 Q208.3,138.6 207.8,141.1 Q207.3,143.6 207.0,146.1 Q206.8,148.6 207.1,151.2 Q207.4,153.7 208.2,156.2 Q209.1,158.7 210.5,161.2 Q211.8,163.7 213.2,166.2 Q214.7,168.6 215.8,171.2 Q217.0,173.7 217.6,176.4 L218.1,179.1" fill="none" stroke="#d83c1a" stroke-width="2.5" stroke-linecap="round"/>
<path d="M185.0,87.1 Q188.1,88.4 189.6,89.2 Q191.0,90.0 192.3,91.1 Q193.7,92.1 194.8,93.3 Q195.9,94.6 196.8,96.0 Q197.7,97.5 198.4,99.1 Q199.1,100.8 199.6,102.5 Q200.0,104.3 200.4,106.2 Q200.7,108.1 201.0,110.0 Q201.3,112.0 201.6,114.0 Q202.0,116.0 202.4,118.1 Q202.8,120.2 203.4,122.4 Q204.0,124.6 204.7,126.9 Q205.4,129.2 206.0,131.6 Q206.7,134.0 207.3,136.5 Q207.9,139.0 208.3,141.5 Q208.7,144.1 208.8,146.7 Q208.9,149.4 208.7,152.0 Q208.5,154.7 208.0,157.4 Q207.4,160.1 206.8,162.9 Q206.1,165.6 205.4,168.4 Q204.7,171.2 204.2,174.0 Q203.6,176.8 203.4,179.6 Q203.2,182.4 203.5,185.2 L203.7,188.0" fill="none" stroke="#ee7444" stroke-width="2.0" stroke-linecap="round"/>
<path d="M187.2,89.7 Q190.1,91.0 191.3,91.9 Q192.6,92.8 193.6,93.8 Q194.7,94.9 195.5,96.2 Q196.4,97.4 197.0,98.8 Q197.6,100.2 198.1,101.8 Q198.6,103.3 199.1,104.9 Q199.6,106.5 200.2,108.2 Q200.7,109.8 201.3,111.6 Q201.9,113.4 202.5,115.3 Q203.2,117.2 203.7,119.3 Q204.2,121.3 204.5,123.4 Q204.9,125.6 204.9,127.8 Q204.9,130.1 204.7,132.4 Q204.5,134.7 204.1,137.1 Q203.7,139.5 203.3,141.9 Q202.9,144.4 202.7,146.9 Q202.5,149.4 202.6,151.9 Q202.8,154.5 203.3,157.0 Q203.9,159.6 204.7,162.1 Q205.6,164.7 206.6,167.2 Q207.5,169.8 208.4,172.3 Q209.3,174.8 209.9,177.4 Q210.5,180.0 210.7,182.6 L211.0,185.3" fill="none" stroke="#e0502a" stroke-width="1.5" stroke-linecap="round"/>
<path d="M187.7,91.2 Q190.8,92.6 192.2,93.5 Q193.5,94.4 194.5,95.5 Q195.5,96.7 196.3,98.0 Q197.1,99.3 197.6,100.7 Q198.2,102.2 198.6,103.7 Q199.0,105.2 199.4,106.9 Q199.8,108.5 200.2,110.3 Q200.6,112.0 201.0,113.9 Q201.5,115.8 201.9,117.8 Q202.3,119.8 202.7,121.9 Q203.0,124.1 203.2,126.3 Q203.4,128.6 203.4,130.9 Q203.4,133.2 203.1,135.5 Q202.9,137.9 202.3,140.3 Q201.8,142.7 201.2,145.1 Q200.5,147.6 199.8,150.1 Q199.1,152.6 198.6,155.1 Q198.1,157.7 197.8,160.3 Q197.6,162.9 197.7,165.6 Q197.9,168.2 198.5,170.8 Q199.1,173.4 200.1,175.9 Q201.1,178.5 202.3,180.9 Q203.6,183.3 205.0,185.6 L206.3,187.9" fill="none" stroke="#c82a12" stroke-width="2.7" stroke-linecap="round"/>
<path d="M188.8,93.0 Q192.3,94.3 193.8,95.2 Q195.3,96.0 196.5,97.1 Q197.7,98.1 198.6,99.4 Q199.5,100.6 200.2,101.9 Q200.8,103.3 201.4,104.7 Q201.9,106.1 202.4,107.6 Q203.0,109.1 203.5,110.7 Q204.1,112.4 204.6,114.1 Q205.1,115.9 205.4,117.8 Q205.7,119.7 205.8,121.8 Q205.8,123.8 205.5,126.0 Q205.2,128.1 204.6,130.3 Q204.0,132.5 203.3,134.8 Q202.6,137.0 202.0,139.4 Q201.4,141.8 201.2,144.3 Q200.9,146.8 201.0,149.4 Q201.2,152.0 201.6,154.7 Q202.0,157.4 202.4,160.2 Q202.9,162.9 203.2,165.7 Q203.4,168.5 203.3,171.3 Q203.2,174.1 202.7,177.0 Q202.2,179.9 201.6,182.9 Q200.9,185.8 200.4,189.0 L200.0,192.1" fill="none" stroke="#e86a3a" stroke-width="2.2" stroke-linecap="round"/>
<path d="M188.3,99.7 Q191.0,101.2 192.2,102.1 Q193.3,103.0 194.3,104.1 Q195.2,105.1 196.1,106.2 Q197.0,107.4 197.8,108.7 Q198.6,109.9 199.4,111.3 Q200.1,112.8 200.7,114.4 Q201.3,115.9 201.7,117.7 Q202.2,119.4 202.3,121.3 Q202.5,123.2 202.5,125.2 Q202.4,127.2 202.1,129.2 Q201.9,131.3 201.5,133.5 Q201.1,135.6 200.7,137.8 Q200.4,140.1 200.1,142.4 Q199.8,144.7 199.8,147.1 Q199.8,149.5 200.0,151.9 Q200.2,154.4 200.7,156.9 Q201.2,159.5 201.8,162.0 Q202.4,164.6 203.1,167.2 Q203.7,169.8 204.2,172.3 Q204.8,174.9 205.1,177.6 Q205.4,180.2 205.4,182.9 Q205.4,185.6 205.3,188.4 Q205.1,191.1 204.9,194.0 L204.7,196.9" fill="none" stroke="#b82010" stroke-width="1.7" stroke-linecap="round"/>
<path d="M190.6,101.8 Q193.9,103.2 195.4,104.1 Q196.8,104.9 198.2,105.8 Q199.5,106.8 200.5,108.0 Q201.6,109.2 202.4,110.6 Q203.2,112.0 203.7,113.6 Q204.1,115.2 204.3,116.9 Q204.4,118.6 204.4,120.4 Q204.4,122.2 204.3,124.1 Q204.3,125.9 204.4,127.9 Q204.4,129.9 204.7,132.0 Q205.0,134.0 205.4,136.2 Q205.9,138.5 206.3,140.8 Q206.7,143.1 207.0,145.5 Q207.2,147.9 207.1,150.4 Q207.0,152.8 206.4,155.3 Q205.9,157.8 205.0,160.3 Q204.2,162.8 203.2,165.3 Q202.2,167.9 201.4,170.6 Q200.6,173.2 200.3,175.9 Q200.0,178.7 200.3,181.4 Q200.6,184.2 201.6,186.9 Q202.5,189.6 203.8,192.3 Q205.2,194.9 206.6,197.4 L207.9,200.0" fill="none" stroke="#d83c1a" stroke-width="1.2" stroke-linecap="round"/>
<path d="M188.0,100.7 Q191.4,102.1 192.8,103.0 Q194.1,104.0 195.2,105.1 Q196.3,106.2 197.2,107.5 Q198.0,108.8 198.6,110.2 Q199.3,111.6 199.8,113.1 Q200.4,114.6 200.9,116.2 Q201.3,117.8 201.7,119.6 Q202.1,121.4 202.4,123.4 Q202.7,125.3 202.8,127.4 Q202.9,129.4 202.8,131.6 Q202.7,133.8 202.4,136.0 Q202.1,138.2 201.5,140.5 Q201.0,142.8 200.3,145.2 Q199.7,147.5 199.0,149.9 Q198.3,152.3 197.7,154.8 Q197.1,157.3 196.8,159.9 Q196.4,162.4 196.3,165.1 Q196.2,167.7 196.4,170.4 Q196.6,173.0 197.0,175.7 Q197.5,178.4 198.0,181.0 Q198.5,183.6 199.0,186.2 Q199.4,188.8 199.8,191.4 Q200.2,194.0 200.4,196.5 L200.6,199.1" fill="none" stroke="#ee7444" stroke-width="2.4" stroke-linecap="round"/>
<path d="M189.6,105.4 Q192.2,106.9 193.2,107.8 Q194.3,108.7 195.2,109.7 Q196.1,110.7 196.9,111.7 Q197.7,112.8 198.4,114.1 Q199.1,115.3 199.6,116.8 Q200.1,118.2 200.2,119.8 Q200.4,121.4 200.3,123.1 Q200.1,124.8 199.7,126.6 Q199.3,128.4 198.8,130.3 Q198.3,132.2 197.9,134.2 Q197.5,136.1 197.3,138.3 Q197.2,140.4 197.3,142.6 Q197.4,144.9 197.7,147.3 Q198.0,149.6 198.4,152.1 Q198.7,154.5 198.8,157.0 Q198.8,159.5 198.5,162.0 Q198.2,164.5 197.6,167.1 Q196.9,169.6 196.1,172.3 Q195.2,174.9 194.5,177.7 Q193.8,180.5 193.5,183.3 Q193.3,186.2 193.8,189.1 Q194.3,191.9 195.4,194.7 Q196.6,197.5 198.3,200.2 L199.9,202.9" fill="none" stroke="#e0502a" stroke-width="1.9" stroke-linecap="round"/>
<path d="M188.9,105.8 Q191.7,107.3 192.7,108.2 Q193.8,109.1 194.5,110.2 Q195.3,111.3 195.9,112.5 Q196.4,113.7 196.9,115.0 Q197.3,116.2 197.7,117.6 Q198.2,119.0 198.6,120.5 Q199.1,122.1 199.5,123.8 Q200.0,125.5 200.3,127.4 Q200.7,129.2 200.8,131.3 Q200.9,133.3 200.8,135.4 Q200.7,137.5 200.2,139.7 Q199.7,141.9 198.9,144.1 Q198.1,146.3 197.2,148.6 Q196.2,150.9 195.2,153.3 Q194.1,155.7 193.3,158.3 Q192.4,160.8 191.9,163.5 Q191.3,166.1 191.2,168.9 Q191.1,171.7 191.5,174.6 Q191.9,177.5 192.7,180.5 Q193.5,183.4 194.5,186.4 Q195.5,189.3 196.5,192.3 Q197.5,195.2 198.2,198.1 Q199.0,201.1 199.4,204.1 L199.7,207.1" fill="none" stroke="#c82a12" stroke-width="1.4" stroke-linecap="round"/>
<path d="M136,140 C146,134 186,134 194,140 C201,152 203,170 200,190 L130,190 C127,170 129,152 136,140 Z" fill="#dc3018"/>
<ellipse cx="165.5" cy="110.5" rx="16.5" ry="21" fill="#f8d6bc" transform="rotate(-10 165.5 110.5)"/>
<path d="M148,102 C150,88 166,82 180,90 C176,92 168,94 160,98 C156,100 152,104 150,112 Z" fill="#e2542a"/>
<path d="M163,104 q3,1.6 6,-0.5 M172,101 q3,1.6 6,-0.5" stroke="#4a2018" stroke-width="1.1" fill="none"/>
<path d="M160,118 q4,2 8,-0.5" stroke="#a03a30" stroke-width="1" fill="none"/>
<ellipse cx="157" cy="113" rx="4.5" ry="3" fill="#f08a78" opacity="0.55"/><ellipse cx="178" cy="110" rx="4" ry="2.8" fill="#f08a78" opacity="0.55"/>
<path d="M159,128 C165,124 175,124 180,131 C183,140 182,158 180,182 L170,182 C170,165 168,150 165,140 C161,136 157,133 159,128 Z" fill="#f4cdb0"/>
<path d="M140,162 C146,156 153,160 153,168 L150,182 L139,180 Z" fill="#f4cdb0"/>
<path d="M130,196 C130,180 148,176 161,186 C170,176 196,178 197,196 C199,215 197,240 187,256 L140,256 C130,240 127,215 130,196 Z" fill="#2a1a1a"/>
<path d="M162,187 L163,250" stroke="#120808" stroke-width="1.2"/>
<path d="M140,195 C140,215 142,235 144,248" stroke="#4a3434" stroke-width="2" fill="none" opacity="0.6"/>
<path d="M143.5,249 C150,247 153,247 155.5,249 C158,262 159,275 158,283 C156,288 144,289 140.5,284 C138,276 140,262 143.5,249 Z" fill="#c82c1a"/>
<path d="M161.5,248 C166,246 171,246 174.7,248 C178,262 182,275 181.3,283 C179,289 165,289 161,284 C159,276 159.5,262 161.5,248 Z" fill="#c82c1a"/>
<path d="M146,256 l7,3 l-7,3 l7,3 l-7,3 l7,3 M165,256 l8,3 l-8,3 l8,3 l-8,3 l8,3" stroke="#5a0e06" stroke-width="0.8" fill="none"/>
<path d="M87.92,91.30 C75.56,86.18 44.48,71.79 42.06,48.78 C40.31,32.11 51.09,22.15 63.62,20.84 C72.81,19.87 79.33,25.60 81.75,32.57 C83.42,24.37 89.44,17.32 98.63,16.36 C112.83,14.86 123.02,23.42 124.77,40.09 C127.19,63.10 98.95,83.72 87.92,91.30Z" fill="url(#bg1)" stroke="#fffaf4" stroke-width="1.68" stroke-opacity="0.85"/>
<ellipse cx="67.2" cy="47.3" rx="14.3" ry="8.4" fill="#ff9a8a" opacity="0.5" filter="url(#rb1)" transform="rotate(-6 84 54)"/>
<ellipse cx="88.3" cy="94.5" rx="6.3" ry="3.8" fill="#d01a0a"/>
<path d="M157.95,38.77 C153.38,36.88 141.92,31.57 141.02,23.07 C140.38,16.92 144.35,13.25 148.98,12.76 C152.37,12.40 154.78,14.52 155.67,17.09 C156.29,14.07 158.51,11.46 161.90,11.11 C167.14,10.56 170.90,13.71 171.55,19.87 C172.44,28.36 162.02,35.97 157.95,38.77Z" fill="url(#bg1)" stroke="#fffaf4" stroke-width="0.70" stroke-opacity="0.85"/>
<ellipse cx="150.3" cy="22.5" rx="5.3" ry="3.1" fill="#ff9a8a" opacity="0.5" filter="url(#rb1)" transform="rotate(-6 156.5 25)"/>
<ellipse cx="158" cy="40" rx="2.3" ry="1.4" fill="#d01a0a"/>
<path d="M216.79,82.46 C209.09,73.12 190.37,48.43 198.22,29.02 C203.90,14.96 216.74,11.58 227.31,15.85 C235.06,18.98 237.83,26.33 236.80,32.93 C241.62,27.09 249.42,24.01 257.17,27.14 C269.15,31.98 273.66,43.14 267.98,57.20 C260.14,76.62 228.82,81.09 216.79,82.46Z" fill="url(#bg1)" stroke="#fffaf4" stroke-width="1.52" stroke-opacity="0.85"/>
<ellipse cx="214.3" cy="44.9" rx="12.9" ry="7.6" fill="#ff9a8a" opacity="0.5" filter="url(#rb1)" transform="rotate(22 229.5 51)"/>
<ellipse cx="216" cy="86" rx="5.7" ry="3.4" fill="#d01a0a"/>
<path d="M47.40,152.50 C43.48,150.37 33.68,144.52 33.68,136.81 C33.68,131.22 37.60,128.30 41.80,128.30 C44.88,128.30 46.84,130.42 47.40,132.82 C48.24,130.16 50.48,128.03 53.56,128.03 C58.32,128.03 61.40,131.22 61.40,136.81 C61.40,144.52 51.32,150.37 47.40,152.50Z" fill="url(#bg1)" stroke="#fffaf4" stroke-width="0.70" stroke-opacity="0.85"/>
<ellipse cx="41.8" cy="137.8" rx="4.8" ry="2.8" fill="#ff9a8a" opacity="0.5" filter="url(#rb1)" transform="rotate(0 47.4 140)"/>
<ellipse cx="48.5" cy="154.5" rx="2.1" ry="1.3" fill="#d01a0a"/>
<path d="M261.80,157.37 C256.76,154.64 244.16,147.11 244.16,137.20 C244.16,130.01 249.20,126.25 254.60,126.25 C258.56,126.25 261.08,128.99 261.80,132.07 C262.88,128.65 265.76,125.91 269.72,125.91 C275.84,125.91 279.80,130.01 279.80,137.20 C279.80,147.11 266.84,154.64 261.80,157.37Z" fill="url(#bg1)" stroke="#fffaf4" stroke-width="0.72" stroke-opacity="0.85"/>
<ellipse cx="254.6" cy="138.4" rx="6.1" ry="3.6" fill="#ff9a8a" opacity="0.5" filter="url(#rb1)" transform="rotate(0 261.8 141.3)"/>
<ellipse cx="260" cy="159" rx="2.7" ry="1.6" fill="#d01a0a"/>
<path d="M51.33,230.13 C45.61,226.35 31.40,216.08 32.44,204.28 C33.19,195.73 39.57,191.78 46.00,192.34 C50.71,192.76 53.42,196.28 53.96,200.01 C55.60,196.06 59.31,193.10 64.03,193.51 C71.31,194.15 75.59,199.44 74.85,207.99 C73.81,219.79 57.61,227.40 51.33,230.13Z" fill="url(#bg1)" stroke="#fffaf4" stroke-width="0.86" stroke-opacity="0.85"/>
<ellipse cx="44.4" cy="207.6" rx="7.3" ry="4.3" fill="#ff9a8a" opacity="0.5" filter="url(#rb1)" transform="rotate(5 53 211)"/>
<ellipse cx="51" cy="232.5" rx="3.2" ry="1.9" fill="#d01a0a"/>
<path d="M131.00,79.95 C127.92,77.53 125.50,75.55 125.50,73.02 C125.50,71.26 126.82,70.05 128.47,70.05 C129.68,70.05 130.56,70.82 131.00,71.81 C131.44,70.82 132.32,70.05 133.53,70.05 C135.18,70.05 136.50,71.26 136.50,73.02 C136.50,75.55 134.08,77.53 131.00,79.95Z" fill="#d81a10"/></svg><div style="position:absolute;left:142px;top:3.5px;width:33px;height:3px;border-radius:2px;background:#d4ccc6;opacity:0.9"></div></div>
</body></html>
